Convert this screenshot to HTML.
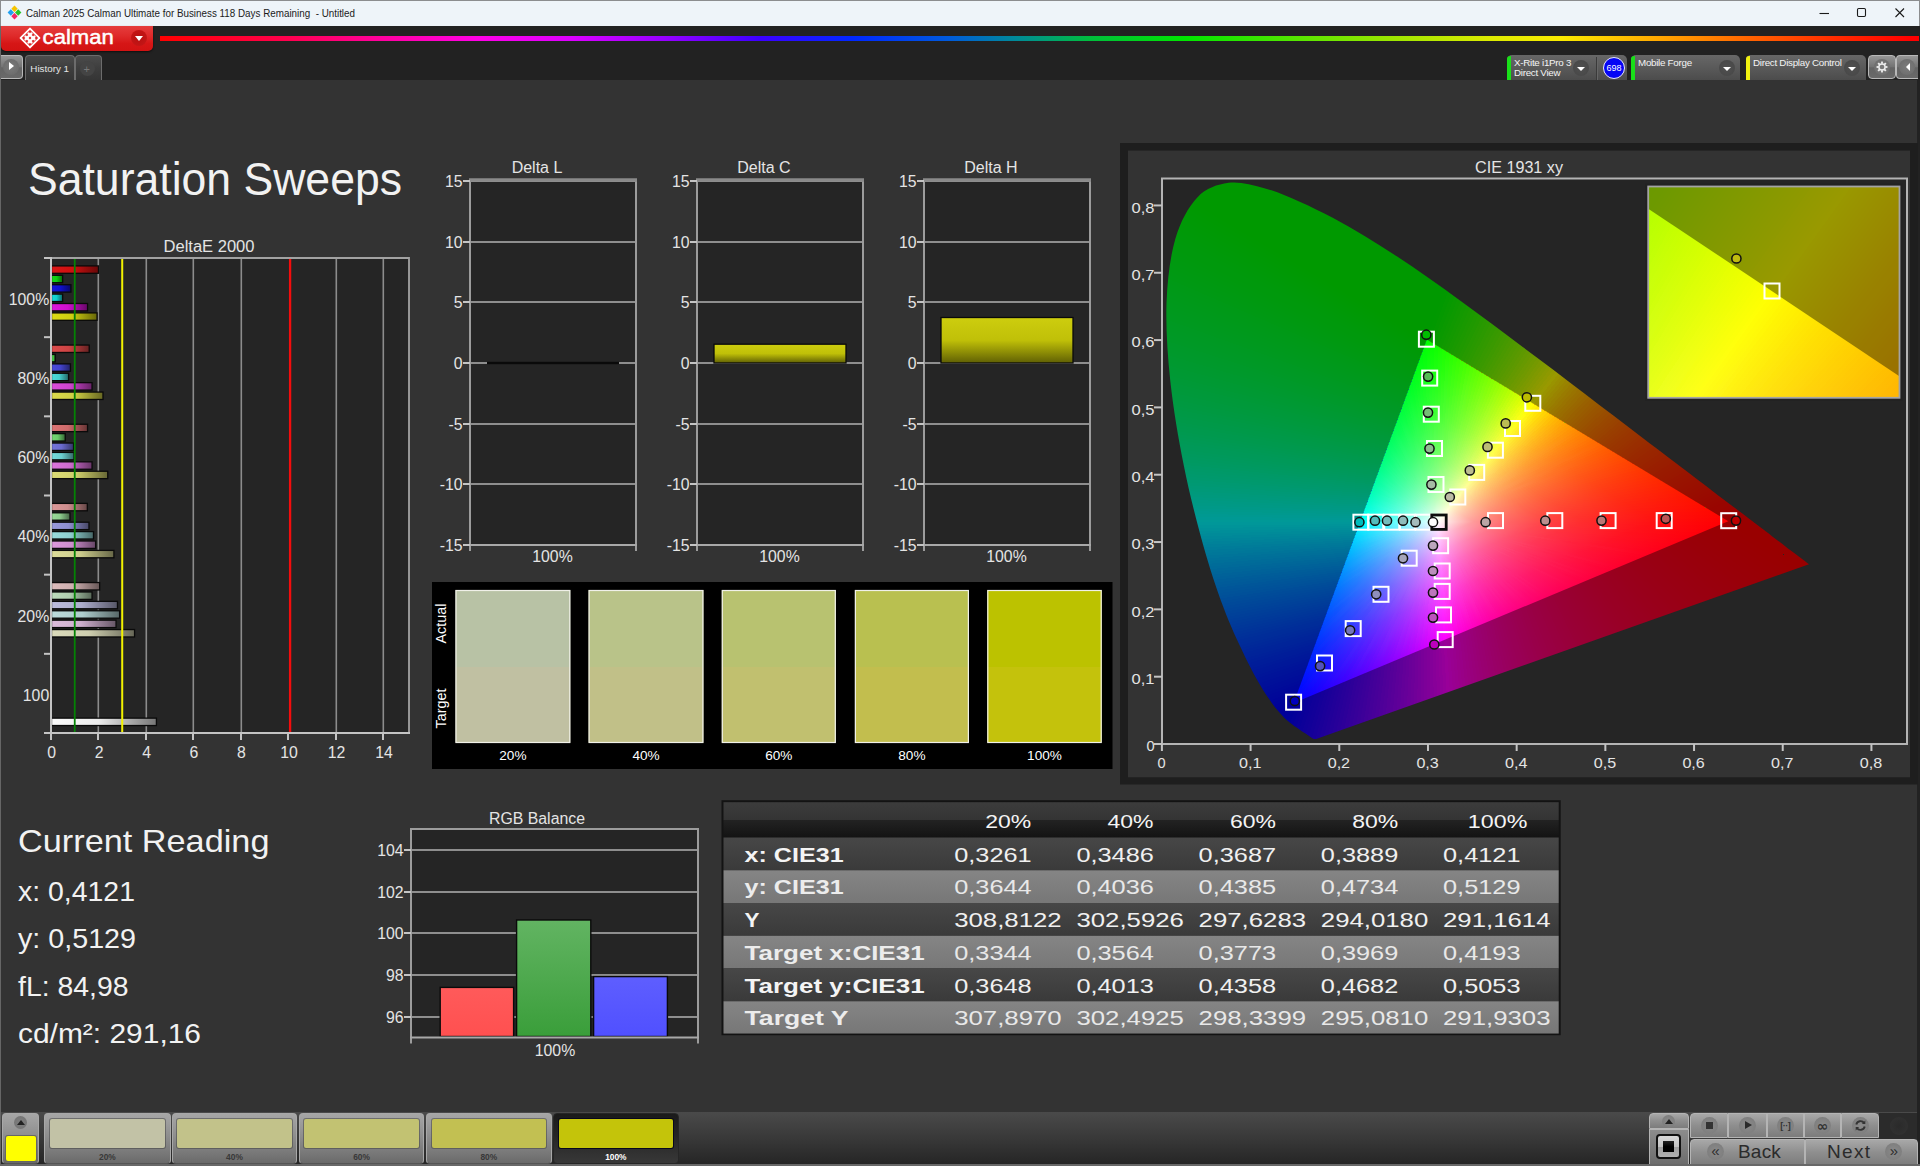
<!DOCTYPE html><html><head><meta charset="utf-8"><title>Calman - Saturation Sweeps</title><style>
*{box-sizing:border-box}
html,body{margin:0;padding:0}
body{width:1920px;height:1166px;overflow:hidden;position:relative;background:#333;font-family:"Liberation Sans",sans-serif;color:#eee}
.a{position:absolute}
#titlebar{left:0;top:0;width:1920px;height:26px;background:#eef4f9;border-top:1px solid #8b8d8f;border-left:1px solid #8b8d8f;border-right:1px solid #8b8d8f}
#titletxt{left:26px;top:6px;font-size:11.6px;line-height:14px;color:#1b1b1b;white-space:nowrap;letter-spacing:-0.05px}
#topbar{left:0;top:26px;width:1920px;height:54px;background:#222}
#logo{left:1px;top:26px;width:152px;height:25px;border-radius:0 0 5px 5px;background:linear-gradient(#e53d3d,#df2a2a 40%,#d61616 70%,#d21212);box-shadow:0 1px 2px rgba(0,0,0,.6)}
#rainbow{left:160px;top:36px;width:1759px;height:5px;background:linear-gradient(90deg,#ff0000 0%,#ff0050 7.4%,#ff00a0 12.7%,#ff00e6 18.1%,#dc00ff 23.4%,#9600ff 28.7%,#3c00ff 34.1%,#0028ff 39.4%,#005adc 44.8%,#008c96 48.8%,#00be3c 52.9%,#00e600 58.3%,#5ae600 64.9%,#a0e600 70.3%,#dceb00 75.6%,#faeb00 79.6%,#ffaa00 85%,#ff6400 90.3%,#ff2800 95.6%,#ff0000 99.6%)}
.tab{background:linear-gradient(#4c4c4c,#3e3e3e 50%,#353535);border:1px solid #6c6c6c;border-bottom:none;border-radius:4px 4px 0 0}
.btn{background:linear-gradient(#969696,#747474 48%,#646464 54%,#6a6a6a);border:1px solid #b8b8b8;border-radius:4px}
.src{background:linear-gradient(#676767,#5a5a5a 50%,#4c4c4c);border-radius:5px 5px 0 0;top:55px;height:25px}
.src span{position:absolute;left:7px;font-size:9.8px;color:#f4f4f4;white-space:nowrap;line-height:11px;letter-spacing:-0.28px}
.dd{position:absolute;width:16px;height:16px;border-radius:8px;background:radial-gradient(#505050,#464646)}
.dd:after{content:"";position:absolute;left:4px;top:6.5px;border:4px solid transparent;border-top:4.5px solid #fff;border-bottom:none}

.bb{background:linear-gradient(#a6a6a6,#8e8e8e 45%,#787878 80%,#6a6a6a);border:1px solid #a8a8a8;border-bottom-color:#555;border-radius:4px;top:1113px;height:51px}
.bb i{position:absolute;left:4.5px;top:4.5px;right:4.5px;height:29.5px;border-radius:2px;box-shadow:0 0 0 1px rgba(70,70,70,.55)}
.bb b{position:absolute;left:0;right:0;top:38px;text-align:center;font-size:8.4px;line-height:10px;font-weight:bold;color:#383838}
.sel{background:linear-gradient(#1a1a1a,#242424 40%,#383838);border-color:#262626}.sel i{box-shadow:0 0 0 1px #08081c}
.sel b{color:#fff;font-weight:bold}
.cb{background:linear-gradient(#a8a8a8,#8e8e8e 50%,#7c7c7c);border:1px solid #b4b4b4;border-radius:3px}
.ci{position:absolute;border-radius:50%;background:radial-gradient(#8a8a8a,#7a7a7a)}
</style></head><body><div class="a" id="topbar"></div><div class="a" id="titlebar"></div><svg class="a" style="left:7px;top:5px" width="15" height="15" viewBox="0 0 15 15"><path d="M7.5 .6L10.7 3.8L7.5 7L4.3 3.8Z" fill="#f5c400"/><path d="M3.8 4.3L7 7.5L3.8 10.7L.6 7.5Z" fill="#20a0f0"/><path d="M11.2 4.3L14.4 7.5L11.2 10.7L8 7.5Z" fill="#28c428"/><path d="M7.5 8L10.7 11.2L7.5 14.4L4.3 11.2Z" fill="#f02868"/></svg><svg class="a" style="left:1780px;top:1px" width="139" height="25" viewBox="0 0 139 25" fill="none" stroke="#1a1a1a" stroke-width="1.1"><path d="M39.5 12.5H49"/><rect x="77.5" y="7.5" width="8" height="8" rx="1.2"/><path d="M115.5 7.5L124 16M124 7.5L115.5 16"/></svg><div class="a" id="logo"></div><svg class="a" style="left:17.5px;top:27px" width="24" height="22" viewBox="0 0 24 22"><path d="M12 1.2L21.8 11L12 20.8L2.2 11Z" fill="#fff" stroke="#fff" stroke-width="1.2" stroke-linejoin="round"/><path d="M12 3.4L19.6 11L12 18.6L4.4 11Z" fill="none" stroke="#de2a2a" stroke-width="0.9"/><path d="M12.00 3.35L13.45 4.80L12.00 6.25L10.55 4.80ZM8.90 6.45L10.35 7.90L8.90 9.35L7.45 7.90ZM5.80 9.55L7.25 11.00L5.80 12.45L4.35 11.00ZM15.10 6.45L16.55 7.90L15.10 9.35L13.65 7.90ZM12.00 9.55L13.45 11.00L12.00 12.45L10.55 11.00ZM8.90 12.65L10.35 14.10L8.90 15.55L7.45 14.10ZM18.20 9.55L19.65 11.00L18.20 12.45L16.75 11.00ZM15.10 12.65L16.55 14.10L15.10 15.55L13.65 14.10ZM12.00 15.75L13.45 17.20L12.00 18.65L10.55 17.20Z" fill="#dc2424"/></svg><div class="a" style="left:131px;top:30px;width:16px;height:16px;border-radius:8px;background:radial-gradient(#b81010,#c81818)"></div><div class="a" style="left:135px;top:36px;border:4px solid transparent;border-top:5px solid #fff;border-bottom:none"></div><div class="a" id="rainbow"></div><div class="a btn" style="left:0px;top:55px;width:23px;height:24px;border-left:none;border-radius:0 4px 4px 0"></div><div class="a" style="left:3px;top:59px;width:16px;height:16px;border-radius:8px;background:radial-gradient(#7a7a7a,#686868)"></div><div class="a" style="left:8.8px;top:62.2px;border:4.4px solid transparent;border-left:5.2px solid #fff;border-right:none"></div><div class="a tab" style="left:25px;top:55px;width:50px;height:25px"></div><div class="a tab" style="left:75px;top:55px;width:27px;height:25px"></div><div class="a" style="left:80px;top:61px;width:15px;height:15px;border-radius:8px;background:#444"></div><div class="a" style="left:83.5px;top:61.5px;font-size:11px;line-height:14px;color:#777">+</div><div class="a src" style="left:1507px;width:120px"><div class="a" style="left:0;top:1px;width:4px;height:24px;background:#19e019;border-radius:3px 0 0 0"></div><span style="top:1.5px">X-Rite i1Pro 3</span><span style="top:12.4px">Direct View</span><div class="dd" style="left:65.5px;top:5px"></div></div><div class="a" style="left:1596px;top:57px;width:1px;height:23px;background:#3a3a3a"></div><div class="a" style="left:1597px;top:57px;width:1px;height:23px;background:#666"></div><div class="a" style="left:1603px;top:57px;width:22px;height:22px;border-radius:11px;background:#0505f5;border:1px solid #e8e8ff;font-size:9px;line-height:20px;text-align:center;color:#fff">698</div><div class="a src" style="left:1631px;width:109px"><div class="a" style="left:0;top:1px;width:4px;height:24px;background:#19e019;border-radius:3px 0 0 0"></div><span style="top:1.5px">Mobile Forge</span><div class="dd" style="left:87.9px;top:5px"></div></div><div class="a src" style="left:1746px;width:120px"><div class="a" style="left:0;top:1px;width:4px;height:24px;background:#f0f010;border-radius:3px 0 0 0"></div><span style="top:1.5px">Direct Display Control</span><div class="dd" style="left:98.2px;top:5px"></div></div><div class="a btn" style="left:1868px;top:55px;width:28px;height:24px"></div><div class="a btn" style="left:1896px;top:55px;width:22px;height:24px;border-right:none;border-radius:4px 0 0 4px"></div><div class="a" style="left:1874px;top:59px;width:16px;height:16px;border-radius:8px;background:radial-gradient(#7c7c7c,#6a6a6a)"></div><svg class="a" style="left:1875.3px;top:60.4px" width="14" height="14" viewBox="-7.7 -7.7 15.4 15.4"><circle r="3.4" fill="none" stroke="#eee" stroke-width="1.6"/><rect x="-1" y="-6" width="2" height="2.4" fill="#eee" transform="rotate(0)"/><rect x="-1" y="-6" width="2" height="2.4" fill="#eee" transform="rotate(45)"/><rect x="-1" y="-6" width="2" height="2.4" fill="#eee" transform="rotate(90)"/><rect x="-1" y="-6" width="2" height="2.4" fill="#eee" transform="rotate(135)"/><rect x="-1" y="-6" width="2" height="2.4" fill="#eee" transform="rotate(180)"/><rect x="-1" y="-6" width="2" height="2.4" fill="#eee" transform="rotate(225)"/><rect x="-1" y="-6" width="2" height="2.4" fill="#eee" transform="rotate(270)"/><rect x="-1" y="-6" width="2" height="2.4" fill="#eee" transform="rotate(315)"/></svg><div class="a" style="left:1899px;top:59px;width:16px;height:16px;border-radius:8px;background:radial-gradient(#7c7c7c,#6a6a6a)"></div><div class="a" style="left:1905.6px;top:62.6px;border:4.1px solid transparent;border-right:4.8px solid #fff;border-left:none"></div><div class="a" style="left:0;top:26px;width:1px;height:1140px;background:#666"></div><div class="a" style="left:1917px;top:80px;width:3px;height:1086px;background:#222"></div><div class="a" style="left:1px;top:1112px;width:1916px;height:54px;background:linear-gradient(#4a4a4a,#383838 50%,#242424)"></div><div class="a bb" style="left:2px;width:37px"></div><div class="a" style="left:14px;top:1116px;width:13px;height:13px;border-radius:7px;background:radial-gradient(#808080,#707070)"></div><div class="a" style="left:16.5px;top:1119.5px;border:4px solid transparent;border-bottom:5px solid #222;border-top:none"></div><div class="a" style="left:6px;top:1135.5px;width:29.5px;height:25px;background:#ffff00;border-radius:2px;box-shadow:0 0 0 1px #666"></div><div class="a bb" style="left:44.2px;width:126.4px"><i style="background:#c2c2a6"></i><b>20%</b></div><div class="a bb" style="left:171.7px;width:125.6px"><i style="background:#c2c28a"></i><b>40%</b></div><div class="a bb" style="left:298.8px;width:125.6px"><i style="background:#c2c272"></i><b>60%</b></div><div class="a bb" style="left:426.0px;width:125.6px"><i style="background:#c2c052"></i><b>80%</b></div><div class="a bb sel" style="left:553.0px;width:125.7px"><i style="background:#c4c40a"></i><b>100%</b></div><div class="a cb" style="left:1649px;top:1113px;width:40px;height:16px;border-radius:4px 4px 0 0"></div><div class="a cb" style="left:1649px;top:1129px;width:40px;height:37px;border-radius:0;background:linear-gradient(#8c8c8c,#6c6c6c)"></div><div class="a ci" style="left:1662px;top:1115px;width:13px;height:13px"></div><div class="a" style="left:1664.5px;top:1118.5px;border:4px solid transparent;border-bottom:5px solid #222;border-top:none"></div><div class="a" style="left:1656px;top:1134px;width:25px;height:25px;border:2px solid #111;border-radius:4px;background:linear-gradient(#d8d8d8,#c4c4c4 50%,#a0a0a0 52%,#b0b0b0)"></div><div class="a" style="left:1663px;top:1141px;width:11px;height:11px;background:linear-gradient(#222,#000 50%)"></div><div class="a cb" style="left:1690.0px;top:1113px;width:38.1px;height:25px;border-radius:4px 0 0 0"></div><div class="a ci" style="left:1700.5px;top:1117px;width:17px;height:17px"></div><div class="a cb" style="left:1728.1px;top:1113px;width:38.5px;height:25px;border-radius:0"></div><div class="a ci" style="left:1738.8px;top:1117px;width:17px;height:17px"></div><div class="a cb" style="left:1766.6px;top:1113px;width:37.4px;height:25px;border-radius:0"></div><div class="a ci" style="left:1776.8px;top:1117px;width:17px;height:17px"></div><div class="a cb" style="left:1804.0px;top:1113px;width:37.3px;height:25px;border-radius:0"></div><div class="a ci" style="left:1814.2px;top:1117px;width:17px;height:17px"></div><div class="a cb" style="left:1841.3px;top:1113px;width:37.7px;height:25px;border-radius:0 4px 0 0"></div><div class="a ci" style="left:1851.7px;top:1117px;width:17px;height:17px"></div><div class="a" style="left:1705.5px;top:1122px;width:7px;height:7px;background:#333"></div><div class="a" style="left:1744.8px;top:1121px;border:4.5px solid transparent;border-left:7px solid #2a2a2a;border-right:none"></div><div class="a" style="left:1778.3px;top:1119.5px;width:14px;text-align:center;font-size:9px;line-height:12px;font-weight:bold;color:#333;letter-spacing:-.5px">[&middot;&middot;]</div><div class="a" style="left:1814.7px;top:1117.5px;width:16px;text-align:center;font-size:14px;line-height:16px;font-weight:bold;color:#333;font-family:'DejaVu Sans',sans-serif">&#8734;</div><svg class="a" style="left:1853.7px;top:1119px" width="13" height="13" viewBox="-6.5 -6.5 13 13" fill="none" stroke="#333" stroke-width="1.9"><path d="M-4.2 -1A4.3 4.3 0 0 1 3.6 -2.4"/><path d="M4.2 1A4.3 4.3 0 0 1 -3.6 2.4"/><path d="M4.8 -5V-1.6H1.4Z" fill="#333" stroke="none"/><path d="M-4.8 5V1.6H-1.4Z" fill="#333" stroke="none"/></svg><div class="a" style="left:1879px;top:1113px;width:38px;height:26px;background:#2b2b2b"></div><div class="a" style="left:1890px;top:1117px;width:18px;height:18px;border-radius:9px;background:radial-gradient(#2a2a2a,#333)"></div><div class="a cb" style="left:1690px;top:1139px;width:114.5px;height:27px;border-radius:4px 0 0 0"></div><div class="a cb" style="left:1804.5px;top:1139px;width:113px;height:27px;border-radius:0 4px 0 0"></div><div class="a ci" style="left:1707px;top:1143px;width:17px;height:17px"></div><div class="a ci" style="left:1885px;top:1143px;width:17px;height:17px"></div><div class="a" style="left:1708px;top:1141px;width:15px;text-align:center;font-size:15px;line-height:19px;color:#2e2e2e">&laquo;</div><div class="a" style="left:1886.5px;top:1141px;width:15px;text-align:center;font-size:15px;line-height:19px;color:#2e2e2e">&raquo;</div><div class="a" style="left:1738px;top:1141px;font-size:19px;line-height:22px;color:#2b2b2b;letter-spacing:.2px">Back</div><div class="a" style="left:1827px;top:1141px;font-size:19px;line-height:22px;color:#2b2b2b;letter-spacing:1.3px">Next</div><div class="a" style="left:0;top:1164px;width:1920px;height:2px;background:#686868"></div><svg class="a" style="left:0;top:0" width="1920" height="1166" viewBox="0 0 1920 1166" font-family='&quot;Liberation Sans&quot;, sans-serif'><defs><linearGradient id="b1" x1="0" y1="0" x2="1" y2="0"><stop offset="0" stop-color="#dc1616"/><stop offset=".45" stop-color="#ce1010"/><stop offset="1" stop-color="#670808"/></linearGradient><linearGradient id="b2" x1="0" y1="0" x2="1" y2="0"><stop offset="0" stop-color="#16dc16"/><stop offset=".45" stop-color="#10ce10"/><stop offset="1" stop-color="#086708"/></linearGradient><linearGradient id="b3" x1="0" y1="0" x2="1" y2="0"><stop offset="0" stop-color="#1616dc"/><stop offset=".45" stop-color="#1010ce"/><stop offset="1" stop-color="#080867"/></linearGradient><linearGradient id="b4" x1="0" y1="0" x2="1" y2="0"><stop offset="0" stop-color="#16dcdc"/><stop offset=".45" stop-color="#10cece"/><stop offset="1" stop-color="#086767"/></linearGradient><linearGradient id="b5" x1="0" y1="0" x2="1" y2="0"><stop offset="0" stop-color="#dc16dc"/><stop offset=".45" stop-color="#ce10ce"/><stop offset="1" stop-color="#670867"/></linearGradient><linearGradient id="b6" x1="0" y1="0" x2="1" y2="0"><stop offset="0" stop-color="#dcdc16"/><stop offset=".45" stop-color="#cece10"/><stop offset="1" stop-color="#676708"/></linearGradient><linearGradient id="b7" x1="0" y1="0" x2="1" y2="0"><stop offset="0" stop-color="#dc4c4c"/><stop offset=".45" stop-color="#ce4444"/><stop offset="1" stop-color="#672222"/></linearGradient><linearGradient id="b8" x1="0" y1="0" x2="1" y2="0"><stop offset="0" stop-color="#4cdc4c"/><stop offset=".45" stop-color="#44ce44"/><stop offset="1" stop-color="#226722"/></linearGradient><linearGradient id="b9" x1="0" y1="0" x2="1" y2="0"><stop offset="0" stop-color="#4c4cdc"/><stop offset=".45" stop-color="#4444ce"/><stop offset="1" stop-color="#222267"/></linearGradient><linearGradient id="b10" x1="0" y1="0" x2="1" y2="0"><stop offset="0" stop-color="#4cdcdc"/><stop offset=".45" stop-color="#44cece"/><stop offset="1" stop-color="#226767"/></linearGradient><linearGradient id="b11" x1="0" y1="0" x2="1" y2="0"><stop offset="0" stop-color="#dc4cdc"/><stop offset=".45" stop-color="#ce44ce"/><stop offset="1" stop-color="#672267"/></linearGradient><linearGradient id="b12" x1="0" y1="0" x2="1" y2="0"><stop offset="0" stop-color="#dcdc4c"/><stop offset=".45" stop-color="#cece44"/><stop offset="1" stop-color="#676722"/></linearGradient><linearGradient id="b13" x1="0" y1="0" x2="1" y2="0"><stop offset="0" stop-color="#dc7575"/><stop offset=".45" stop-color="#ce6b6b"/><stop offset="1" stop-color="#673535"/></linearGradient><linearGradient id="b14" x1="0" y1="0" x2="1" y2="0"><stop offset="0" stop-color="#75dc75"/><stop offset=".45" stop-color="#6bce6b"/><stop offset="1" stop-color="#356735"/></linearGradient><linearGradient id="b15" x1="0" y1="0" x2="1" y2="0"><stop offset="0" stop-color="#7575dc"/><stop offset=".45" stop-color="#6b6bce"/><stop offset="1" stop-color="#353567"/></linearGradient><linearGradient id="b16" x1="0" y1="0" x2="1" y2="0"><stop offset="0" stop-color="#75dcdc"/><stop offset=".45" stop-color="#6bcece"/><stop offset="1" stop-color="#356767"/></linearGradient><linearGradient id="b17" x1="0" y1="0" x2="1" y2="0"><stop offset="0" stop-color="#dc75dc"/><stop offset=".45" stop-color="#ce6bce"/><stop offset="1" stop-color="#673567"/></linearGradient><linearGradient id="b18" x1="0" y1="0" x2="1" y2="0"><stop offset="0" stop-color="#dcdc75"/><stop offset=".45" stop-color="#cece6b"/><stop offset="1" stop-color="#676735"/></linearGradient><linearGradient id="b19" x1="0" y1="0" x2="1" y2="0"><stop offset="0" stop-color="#dc9999"/><stop offset=".45" stop-color="#ce8e8e"/><stop offset="1" stop-color="#674747"/></linearGradient><linearGradient id="b20" x1="0" y1="0" x2="1" y2="0"><stop offset="0" stop-color="#99dc99"/><stop offset=".45" stop-color="#8ece8e"/><stop offset="1" stop-color="#476747"/></linearGradient><linearGradient id="b21" x1="0" y1="0" x2="1" y2="0"><stop offset="0" stop-color="#9999dc"/><stop offset=".45" stop-color="#8e8ece"/><stop offset="1" stop-color="#474767"/></linearGradient><linearGradient id="b22" x1="0" y1="0" x2="1" y2="0"><stop offset="0" stop-color="#99dcdc"/><stop offset=".45" stop-color="#8ecece"/><stop offset="1" stop-color="#476767"/></linearGradient><linearGradient id="b23" x1="0" y1="0" x2="1" y2="0"><stop offset="0" stop-color="#dc99dc"/><stop offset=".45" stop-color="#ce8ece"/><stop offset="1" stop-color="#674767"/></linearGradient><linearGradient id="b24" x1="0" y1="0" x2="1" y2="0"><stop offset="0" stop-color="#dcdc99"/><stop offset=".45" stop-color="#cece8e"/><stop offset="1" stop-color="#676747"/></linearGradient><linearGradient id="b25" x1="0" y1="0" x2="1" y2="0"><stop offset="0" stop-color="#dcbcbc"/><stop offset=".45" stop-color="#ceafaf"/><stop offset="1" stop-color="#675757"/></linearGradient><linearGradient id="b26" x1="0" y1="0" x2="1" y2="0"><stop offset="0" stop-color="#bcdcbc"/><stop offset=".45" stop-color="#afceaf"/><stop offset="1" stop-color="#576757"/></linearGradient><linearGradient id="b27" x1="0" y1="0" x2="1" y2="0"><stop offset="0" stop-color="#bcbcdc"/><stop offset=".45" stop-color="#afafce"/><stop offset="1" stop-color="#575767"/></linearGradient><linearGradient id="b28" x1="0" y1="0" x2="1" y2="0"><stop offset="0" stop-color="#bcdcdc"/><stop offset=".45" stop-color="#afcece"/><stop offset="1" stop-color="#576767"/></linearGradient><linearGradient id="b29" x1="0" y1="0" x2="1" y2="0"><stop offset="0" stop-color="#dcbcdc"/><stop offset=".45" stop-color="#ceafce"/><stop offset="1" stop-color="#675767"/></linearGradient><linearGradient id="b30" x1="0" y1="0" x2="1" y2="0"><stop offset="0" stop-color="#dcdcbc"/><stop offset=".45" stop-color="#ceceaf"/><stop offset="1" stop-color="#676757"/></linearGradient><linearGradient id="b31" x1="0" y1="0" x2="1" y2="0"><stop offset="0" stop-color="#fbfbfb"/><stop offset=".45" stop-color="#ececec"/><stop offset="1" stop-color="#767676"/></linearGradient><linearGradient id="b32" x1="0" y1="0" x2="0" y2="1"><stop offset="0" stop-color="#cdcd0e"/><stop offset=".5" stop-color="#c0c008"/><stop offset="1" stop-color="#606004"/></linearGradient><linearGradient id="b33" x1="0" y1="0" x2="0" y2="1"><stop offset="0" stop-color="#cdcd0e"/><stop offset=".5" stop-color="#c0c008"/><stop offset="1" stop-color="#606004"/></linearGradient><linearGradient id="c0" gradientUnits="userSpaceOnUse" x1="1438.0" y1="521.9" x2="1360.0" y2="522.0"><stop offset="0" stop-color="#ffffff"/><stop offset=".25" stop-color="#b3ffff"/><stop offset=".75" stop-color="#35ffff"/><stop offset="1" stop-color="#00ffff"/></linearGradient><linearGradient id="c1" gradientUnits="userSpaceOnUse" x1="1438.0" y1="521.9" x2="1359.8" y2="522.5"><stop offset="0" stop-color="#ffffff"/><stop offset=".25" stop-color="#b3ffff"/><stop offset=".75" stop-color="#35feff"/><stop offset="1" stop-color="#00feff"/></linearGradient><linearGradient id="c2" gradientUnits="userSpaceOnUse" x1="1438.0" y1="521.9" x2="1359.4" y2="523.5"><stop offset="0" stop-color="#ffffff"/><stop offset=".375" stop-color="#90fdff"/><stop offset=".875" stop-color="#1afcff"/><stop offset="1" stop-color="#00fbff"/></linearGradient><linearGradient id="c3" gradientUnits="userSpaceOnUse" x1="1438.0" y1="521.9" x2="1359.0" y2="524.5"><stop offset="0" stop-color="#ffffff"/><stop offset=".25" stop-color="#b2fdff"/><stop offset=".625" stop-color="#51faff"/><stop offset="1" stop-color="#00f8ff"/></linearGradient><linearGradient id="c4" gradientUnits="userSpaceOnUse" x1="1438.0" y1="521.9" x2="1358.7" y2="525.6"><stop offset="0" stop-color="#ffffff"/><stop offset=".25" stop-color="#b2fcff"/><stop offset=".75" stop-color="#34f7ff"/><stop offset="1" stop-color="#00f5ff"/></linearGradient><linearGradient id="c5" gradientUnits="userSpaceOnUse" x1="1438.0" y1="521.9" x2="1358.3" y2="526.7"><stop offset="0" stop-color="#ffffff"/><stop offset=".375" stop-color="#8ff9ff"/><stop offset=".875" stop-color="#19f4ff"/><stop offset="1" stop-color="#00f2ff"/></linearGradient><linearGradient id="c6" gradientUnits="userSpaceOnUse" x1="1438.0" y1="521.9" x2="1357.9" y2="527.8"><stop offset="0" stop-color="#ffffff"/><stop offset=".375" stop-color="#8ff8ff"/><stop offset=".875" stop-color="#19f1ff"/><stop offset="1" stop-color="#00f0ff"/></linearGradient><linearGradient id="c7" gradientUnits="userSpaceOnUse" x1="1438.0" y1="521.9" x2="1357.5" y2="528.9"><stop offset="0" stop-color="#ffffff"/><stop offset=".25" stop-color="#b1f9ff"/><stop offset=".625" stop-color="#50f2ff"/><stop offset="1" stop-color="#00edff"/></linearGradient><linearGradient id="c8" gradientUnits="userSpaceOnUse" x1="1438.0" y1="521.9" x2="1357.0" y2="530.0"><stop offset="0" stop-color="#ffffff"/><stop offset=".25" stop-color="#b1f8ff"/><stop offset=".75" stop-color="#33eeff"/><stop offset="1" stop-color="#00eaff"/></linearGradient><linearGradient id="c9" gradientUnits="userSpaceOnUse" x1="1438.0" y1="521.9" x2="1356.6" y2="531.2"><stop offset="0" stop-color="#ffffff"/><stop offset=".25" stop-color="#b1f8ff"/><stop offset=".5" stop-color="#6df1ff"/><stop offset="1" stop-color="#00e7ff"/></linearGradient><linearGradient id="c10" gradientUnits="userSpaceOnUse" x1="1438.0" y1="521.9" x2="1356.2" y2="532.3"><stop offset="0" stop-color="#ffffff"/><stop offset=".25" stop-color="#b0f7ff"/><stop offset=".625" stop-color="#4fecff"/><stop offset="1" stop-color="#00e4ff"/></linearGradient><linearGradient id="c11" gradientUnits="userSpaceOnUse" x1="1438.0" y1="521.9" x2="1355.8" y2="533.5"><stop offset="0" stop-color="#ffffff"/><stop offset=".25" stop-color="#b0f6ff"/><stop offset=".625" stop-color="#4feaff"/><stop offset="1" stop-color="#00e1ff"/></linearGradient><linearGradient id="c12" gradientUnits="userSpaceOnUse" x1="1438.0" y1="521.9" x2="1355.3" y2="534.7"><stop offset="0" stop-color="#ffffff"/><stop offset=".25" stop-color="#b0f5ff"/><stop offset=".5" stop-color="#6cecff"/><stop offset=".875" stop-color="#18e1ff"/><stop offset="1" stop-color="#00deff"/></linearGradient><linearGradient id="c13" gradientUnits="userSpaceOnUse" x1="1438.0" y1="521.9" x2="1354.9" y2="535.9"><stop offset="0" stop-color="#ffffff"/><stop offset=".25" stop-color="#aff4ff"/><stop offset=".625" stop-color="#4ee6ff"/><stop offset="1" stop-color="#00dbff"/></linearGradient><linearGradient id="c14" gradientUnits="userSpaceOnUse" x1="1438.0" y1="521.9" x2="1354.4" y2="537.2"><stop offset="0" stop-color="#ffffff"/><stop offset=".25" stop-color="#aff3ff"/><stop offset=".5" stop-color="#6be8ff"/><stop offset=".875" stop-color="#18dcff"/><stop offset="1" stop-color="#00d8ff"/></linearGradient><linearGradient id="c15" gradientUnits="userSpaceOnUse" x1="1438.0" y1="521.9" x2="1354.0" y2="538.4"><stop offset="0" stop-color="#ffffff"/><stop offset=".25" stop-color="#aff2ff"/><stop offset=".5" stop-color="#6be7ff"/><stop offset=".875" stop-color="#18d9ff"/><stop offset="1" stop-color="#00d5ff"/></linearGradient><linearGradient id="c16" gradientUnits="userSpaceOnUse" x1="1438.0" y1="521.9" x2="1353.5" y2="539.7"><stop offset="0" stop-color="#ffffff"/><stop offset=".25" stop-color="#aef1ff"/><stop offset=".625" stop-color="#4de0ff"/><stop offset="1" stop-color="#00d2ff"/></linearGradient><linearGradient id="c17" gradientUnits="userSpaceOnUse" x1="1438.0" y1="521.9" x2="1353.0" y2="541.0"><stop offset="0" stop-color="#ffffff"/><stop offset=".25" stop-color="#aef0ff"/><stop offset=".5" stop-color="#6ae3ff"/><stop offset="1" stop-color="#00cfff"/></linearGradient><linearGradient id="c18" gradientUnits="userSpaceOnUse" x1="1438.0" y1="521.9" x2="1352.5" y2="542.4"><stop offset="0" stop-color="#ffffff"/><stop offset=".25" stop-color="#adefff"/><stop offset=".625" stop-color="#4cdbff"/><stop offset="1" stop-color="#00ccff"/></linearGradient><linearGradient id="c19" gradientUnits="userSpaceOnUse" x1="1438.0" y1="521.9" x2="1352.0" y2="543.8"><stop offset="0" stop-color="#ffffff"/><stop offset=".25" stop-color="#adeeff"/><stop offset=".5" stop-color="#69dfff"/><stop offset=".875" stop-color="#17ceff"/><stop offset="1" stop-color="#00c9ff"/></linearGradient><linearGradient id="c20" gradientUnits="userSpaceOnUse" x1="1438.0" y1="521.9" x2="1351.5" y2="545.2"><stop offset="0" stop-color="#ffffff"/><stop offset=".25" stop-color="#adecff"/><stop offset=".5" stop-color="#69ddff"/><stop offset=".875" stop-color="#17cbff"/><stop offset="1" stop-color="#00c6ff"/></linearGradient><linearGradient id="c21" gradientUnits="userSpaceOnUse" x1="1438.0" y1="521.9" x2="1351.0" y2="546.6"><stop offset="0" stop-color="#ffffff"/><stop offset=".25" stop-color="#acebff"/><stop offset=".625" stop-color="#4bd4ff"/><stop offset="1" stop-color="#00c2ff"/></linearGradient><linearGradient id="c22" gradientUnits="userSpaceOnUse" x1="1438.0" y1="521.9" x2="1350.4" y2="548.1"><stop offset="0" stop-color="#ffffff"/><stop offset=".25" stop-color="#aceaff"/><stop offset=".5" stop-color="#68d9ff"/><stop offset=".875" stop-color="#17c5ff"/><stop offset="1" stop-color="#00bfff"/></linearGradient><linearGradient id="c23" gradientUnits="userSpaceOnUse" x1="1438.0" y1="521.9" x2="1349.9" y2="549.6"><stop offset="0" stop-color="#ffffff"/><stop offset=".25" stop-color="#ace9ff"/><stop offset=".5" stop-color="#68d7ff"/><stop offset=".75" stop-color="#2fc8ff"/><stop offset="1" stop-color="#00bcff"/></linearGradient><linearGradient id="c24" gradientUnits="userSpaceOnUse" x1="1438.0" y1="521.9" x2="1349.3" y2="551.2"><stop offset="0" stop-color="#ffffff"/><stop offset=".25" stop-color="#abe8ff"/><stop offset=".5" stop-color="#67d5ff"/><stop offset=".75" stop-color="#2fc6ff"/><stop offset="1" stop-color="#00b9ff"/></linearGradient><linearGradient id="c25" gradientUnits="userSpaceOnUse" x1="1438.0" y1="521.9" x2="1348.7" y2="552.8"><stop offset="0" stop-color="#ffffff"/><stop offset=".125" stop-color="#d2f2ff"/><stop offset=".375" stop-color="#87dcff"/><stop offset=".75" stop-color="#2fc3ff"/><stop offset="1" stop-color="#00b5ff"/></linearGradient><linearGradient id="c26" gradientUnits="userSpaceOnUse" x1="1438.0" y1="521.9" x2="1348.1" y2="554.5"><stop offset="0" stop-color="#ffffff"/><stop offset=".25" stop-color="#aae5ff"/><stop offset=".5" stop-color="#66d1ff"/><stop offset=".875" stop-color="#16b9ff"/><stop offset="1" stop-color="#00b2ff"/></linearGradient><linearGradient id="c27" gradientUnits="userSpaceOnUse" x1="1438.0" y1="521.9" x2="1347.5" y2="556.2"><stop offset="0" stop-color="#ffffff"/><stop offset=".25" stop-color="#aae4ff"/><stop offset=".5" stop-color="#66cfff"/><stop offset=".75" stop-color="#2ebdff"/><stop offset="1" stop-color="#00aeff"/></linearGradient><linearGradient id="c28" gradientUnits="userSpaceOnUse" x1="1438.0" y1="521.9" x2="1346.8" y2="558.0"><stop offset="0" stop-color="#ffffff"/><stop offset=".25" stop-color="#a9e3ff"/><stop offset=".5" stop-color="#65ccff"/><stop offset=".875" stop-color="#16b2ff"/><stop offset="1" stop-color="#00abff"/></linearGradient><linearGradient id="c29" gradientUnits="userSpaceOnUse" x1="1438.0" y1="521.9" x2="1346.1" y2="559.8"><stop offset="0" stop-color="#ffffff"/><stop offset=".125" stop-color="#d1efff"/><stop offset=".375" stop-color="#85d5ff"/><stop offset=".625" stop-color="#48c0ff"/><stop offset="1" stop-color="#00a7ff"/></linearGradient><linearGradient id="c30" gradientUnits="userSpaceOnUse" x1="1438.0" y1="521.9" x2="1345.5" y2="561.7"><stop offset="0" stop-color="#ffffff"/><stop offset=".25" stop-color="#a8e0ff"/><stop offset=".5" stop-color="#64c8ff"/><stop offset=".75" stop-color="#2db4ff"/><stop offset="1" stop-color="#00a4ff"/></linearGradient><linearGradient id="c31" gradientUnits="userSpaceOnUse" x1="1438.0" y1="521.9" x2="1344.7" y2="563.6"><stop offset="0" stop-color="#ffffff"/><stop offset=".25" stop-color="#a8dfff"/><stop offset=".5" stop-color="#64c5ff"/><stop offset=".875" stop-color="#15a8ff"/><stop offset="1" stop-color="#00a0ff"/></linearGradient><linearGradient id="c32" gradientUnits="userSpaceOnUse" x1="1438.0" y1="521.9" x2="1344.0" y2="565.7"><stop offset="0" stop-color="#ffffff"/><stop offset=".125" stop-color="#d0edff"/><stop offset=".375" stop-color="#83cfff"/><stop offset=".625" stop-color="#46b8ff"/><stop offset="1" stop-color="#009cff"/></linearGradient><linearGradient id="c33" gradientUnits="userSpaceOnUse" x1="1438.0" y1="521.9" x2="1343.2" y2="567.8"><stop offset="0" stop-color="#ffffff"/><stop offset=".125" stop-color="#d0ecff"/><stop offset=".375" stop-color="#83cdff"/><stop offset=".625" stop-color="#46b5ff"/><stop offset="1" stop-color="#0099ff"/></linearGradient><linearGradient id="c34" gradientUnits="userSpaceOnUse" x1="1438.0" y1="521.9" x2="1342.4" y2="569.9"><stop offset="0" stop-color="#ffffff"/><stop offset=".125" stop-color="#cfebff"/><stop offset=".375" stop-color="#82cbff"/><stop offset=".625" stop-color="#46b2ff"/><stop offset="1" stop-color="#0095ff"/></linearGradient><linearGradient id="c35" gradientUnits="userSpaceOnUse" x1="1438.0" y1="521.9" x2="1341.6" y2="572.2"><stop offset="0" stop-color="#ffffff"/><stop offset=".125" stop-color="#cfeaff"/><stop offset=".375" stop-color="#81c9ff"/><stop offset=".625" stop-color="#45afff"/><stop offset="1" stop-color="#0091ff"/></linearGradient><linearGradient id="c36" gradientUnits="userSpaceOnUse" x1="1438.0" y1="521.9" x2="1340.7" y2="574.6"><stop offset="0" stop-color="#ffffff"/><stop offset=".125" stop-color="#cfe9ff"/><stop offset=".25" stop-color="#a5d7ff"/><stop offset=".5" stop-color="#61b8ff"/><stop offset=".75" stop-color="#2ba0ff"/><stop offset="1" stop-color="#008dff"/></linearGradient><linearGradient id="c37" gradientUnits="userSpaceOnUse" x1="1438.0" y1="521.9" x2="1339.8" y2="577.1"><stop offset="0" stop-color="#ffffff"/><stop offset=".125" stop-color="#cee8ff"/><stop offset=".25" stop-color="#a4d5ff"/><stop offset=".5" stop-color="#60b5ff"/><stop offset=".875" stop-color="#1492ff"/><stop offset="1" stop-color="#0088ff"/></linearGradient><linearGradient id="c38" gradientUnits="userSpaceOnUse" x1="1438.0" y1="521.9" x2="1338.9" y2="579.7"><stop offset="0" stop-color="#ffffff"/><stop offset=".125" stop-color="#cee7ff"/><stop offset=".375" stop-color="#7fc2ff"/><stop offset=".625" stop-color="#43a5ff"/><stop offset="1" stop-color="#0084ff"/></linearGradient><linearGradient id="c39" gradientUnits="userSpaceOnUse" x1="1438.0" y1="521.9" x2="1337.9" y2="582.4"><stop offset="0" stop-color="#ffffff"/><stop offset=".125" stop-color="#cde6ff"/><stop offset=".25" stop-color="#a3d1ff"/><stop offset=".5" stop-color="#5fafff"/><stop offset=".75" stop-color="#2a95ff"/><stop offset="1" stop-color="#0080ff"/></linearGradient><linearGradient id="c40" gradientUnits="userSpaceOnUse" x1="1438.0" y1="521.9" x2="1336.8" y2="585.2"><stop offset="0" stop-color="#ffffff"/><stop offset=".125" stop-color="#cde5ff"/><stop offset=".25" stop-color="#a2cfff"/><stop offset=".5" stop-color="#5eacff"/><stop offset=".75" stop-color="#2a91ff"/><stop offset="1" stop-color="#007bff"/></linearGradient><linearGradient id="c41" gradientUnits="userSpaceOnUse" x1="1438.0" y1="521.9" x2="1335.7" y2="588.2"><stop offset="0" stop-color="#ffffff"/><stop offset=".125" stop-color="#cce4ff"/><stop offset=".375" stop-color="#7dbaff"/><stop offset=".625" stop-color="#429aff"/><stop offset="1" stop-color="#0077ff"/></linearGradient><linearGradient id="c42" gradientUnits="userSpaceOnUse" x1="1438.0" y1="521.9" x2="1334.6" y2="591.4"><stop offset="0" stop-color="#ffffff"/><stop offset=".125" stop-color="#cce3ff"/><stop offset=".25" stop-color="#a1cbff"/><stop offset=".375" stop-color="#7cb7ff"/><stop offset=".625" stop-color="#4196ff"/><stop offset=".875" stop-color="#137dff"/><stop offset="1" stop-color="#0072ff"/></linearGradient><linearGradient id="c43" gradientUnits="userSpaceOnUse" x1="1438.0" y1="521.9" x2="1333.4" y2="594.7"><stop offset="0" stop-color="#ffffff"/><stop offset=".125" stop-color="#cbe2ff"/><stop offset=".25" stop-color="#a0c9ff"/><stop offset=".5" stop-color="#5ca2ff"/><stop offset=".75" stop-color="#2884ff"/><stop offset="1" stop-color="#006dff"/></linearGradient><linearGradient id="c44" gradientUnits="userSpaceOnUse" x1="1438.0" y1="521.9" x2="1332.1" y2="598.2"><stop offset="0" stop-color="#ffffff"/><stop offset=".125" stop-color="#cbe0ff"/><stop offset=".25" stop-color="#9fc7ff"/><stop offset=".5" stop-color="#5b9eff"/><stop offset=".75" stop-color="#2880ff"/><stop offset="1" stop-color="#0068ff"/></linearGradient><linearGradient id="c45" gradientUnits="userSpaceOnUse" x1="1438.0" y1="521.9" x2="1330.7" y2="602.0"><stop offset="0" stop-color="#ffffff"/><stop offset=".125" stop-color="#cadfff"/><stop offset=".25" stop-color="#9fc4ff"/><stop offset=".5" stop-color="#5a9aff"/><stop offset=".75" stop-color="#277bff"/><stop offset="1" stop-color="#0063ff"/></linearGradient><linearGradient id="c46" gradientUnits="userSpaceOnUse" x1="1438.0" y1="521.9" x2="1329.3" y2="605.9"><stop offset="0" stop-color="#ffffff"/><stop offset=".125" stop-color="#caddff"/><stop offset=".25" stop-color="#9ec1ff"/><stop offset=".5" stop-color="#5996ff"/><stop offset=".75" stop-color="#2776ff"/><stop offset="1" stop-color="#005eff"/></linearGradient><linearGradient id="c47" gradientUnits="userSpaceOnUse" x1="1438.0" y1="521.9" x2="1327.7" y2="610.2"><stop offset="0" stop-color="#ffffff"/><stop offset=".125" stop-color="#c9dcff"/><stop offset=".25" stop-color="#9dbfff"/><stop offset=".375" stop-color="#78a7ff"/><stop offset=".625" stop-color="#3e81ff"/><stop offset=".875" stop-color="#1264ff"/><stop offset="1" stop-color="#0058ff"/></linearGradient><linearGradient id="c48" gradientUnits="userSpaceOnUse" x1="1438.0" y1="521.9" x2="1326.1" y2="614.7"><stop offset="0" stop-color="#ffffff"/><stop offset=".125" stop-color="#c8daff"/><stop offset=".25" stop-color="#9cbcff"/><stop offset=".375" stop-color="#77a3ff"/><stop offset=".625" stop-color="#3d7cff"/><stop offset="1" stop-color="#0053ff"/></linearGradient><linearGradient id="c49" gradientUnits="userSpaceOnUse" x1="1438.0" y1="521.9" x2="1324.3" y2="619.5"><stop offset="0" stop-color="#ffffff"/><stop offset=".125" stop-color="#c8d8ff"/><stop offset=".25" stop-color="#9bb9ff"/><stop offset=".375" stop-color="#769fff"/><stop offset=".625" stop-color="#3c77ff"/><stop offset=".875" stop-color="#1159ff"/><stop offset="1" stop-color="#004dff"/></linearGradient><linearGradient id="c50" gradientUnits="userSpaceOnUse" x1="1438.0" y1="521.9" x2="1322.4" y2="624.7"><stop offset="0" stop-color="#ffffff"/><stop offset=".125" stop-color="#c7d6ff"/><stop offset=".25" stop-color="#9ab6ff"/><stop offset=".375" stop-color="#759bff"/><stop offset=".625" stop-color="#3b72ff"/><stop offset=".875" stop-color="#1153ff"/><stop offset="1" stop-color="#0047ff"/></linearGradient><linearGradient id="c51" gradientUnits="userSpaceOnUse" x1="1438.0" y1="521.9" x2="1320.4" y2="630.3"><stop offset="0" stop-color="#ffffff"/><stop offset=".125" stop-color="#c6d4ff"/><stop offset=".25" stop-color="#98b2ff"/><stop offset=".375" stop-color="#7397ff"/><stop offset=".625" stop-color="#3a6cff"/><stop offset="1" stop-color="#0040ff"/></linearGradient><linearGradient id="c52" gradientUnits="userSpaceOnUse" x1="1438.0" y1="521.9" x2="1318.1" y2="636.3"><stop offset="0" stop-color="#ffffff"/><stop offset=".125" stop-color="#c5d2ff"/><stop offset=".25" stop-color="#97afff"/><stop offset=".375" stop-color="#7292ff"/><stop offset=".625" stop-color="#3966ff"/><stop offset="1" stop-color="#003aff"/></linearGradient><linearGradient id="c53" gradientUnits="userSpaceOnUse" x1="1438.0" y1="521.9" x2="1315.7" y2="642.9"><stop offset="0" stop-color="#ffffff"/><stop offset=".125" stop-color="#c4d0ff"/><stop offset=".25" stop-color="#96abff"/><stop offset=".375" stop-color="#718dff"/><stop offset=".5" stop-color="#5275ff"/><stop offset=".75" stop-color="#234fff"/><stop offset="1" stop-color="#0033ff"/></linearGradient><linearGradient id="c54" gradientUnits="userSpaceOnUse" x1="1438.0" y1="521.9" x2="1313.1" y2="650.1"><stop offset="0" stop-color="#ffffff"/><stop offset=".125" stop-color="#c3cdff"/><stop offset=".25" stop-color="#94a7ff"/><stop offset=".375" stop-color="#6f88ff"/><stop offset=".625" stop-color="#385aff"/><stop offset=".875" stop-color="#1039ff"/><stop offset="1" stop-color="#002cff"/></linearGradient><linearGradient id="c55" gradientUnits="userSpaceOnUse" x1="1438.0" y1="521.9" x2="1310.2" y2="657.9"><stop offset="0" stop-color="#ffffff"/><stop offset=".125" stop-color="#c2cbff"/><stop offset=".25" stop-color="#93a2ff"/><stop offset=".375" stop-color="#6e82ff"/><stop offset=".5" stop-color="#4f69ff"/><stop offset=".75" stop-color="#2141ff"/><stop offset="1" stop-color="#0025ff"/></linearGradient><linearGradient id="c56" gradientUnits="userSpaceOnUse" x1="1438.0" y1="521.9" x2="1307.1" y2="666.5"><stop offset="0" stop-color="#ffffff"/><stop offset=".125" stop-color="#c0c8ff"/><stop offset=".25" stop-color="#919dff"/><stop offset=".375" stop-color="#6c7cff"/><stop offset=".625" stop-color="#354cff"/><stop offset=".875" stop-color="#0f2aff"/><stop offset="1" stop-color="#001dff"/></linearGradient><linearGradient id="c57" gradientUnits="userSpaceOnUse" x1="1438.0" y1="521.9" x2="1303.6" y2="676.1"><stop offset="0" stop-color="#ffffff"/><stop offset=".125" stop-color="#bfc4ff"/><stop offset=".25" stop-color="#8f98ff"/><stop offset=".375" stop-color="#6a76ff"/><stop offset=".5" stop-color="#4c5bff"/><stop offset=".75" stop-color="#2032ff"/><stop offset="1" stop-color="#0015ff"/></linearGradient><linearGradient id="c58" gradientUnits="userSpaceOnUse" x1="1438.0" y1="521.9" x2="1299.7" y2="686.8"><stop offset="0" stop-color="#ffffff"/><stop offset=".125" stop-color="#bec1ff"/><stop offset=".25" stop-color="#8d93ff"/><stop offset=".375" stop-color="#686fff"/><stop offset=".625" stop-color="#333cff"/><stop offset=".875" stop-color="#0e1aff"/><stop offset="1" stop-color="#000cff"/></linearGradient><linearGradient id="c59" gradientUnits="userSpaceOnUse" x1="1438.0" y1="521.9" x2="1295.7" y2="697.6"><stop offset="0" stop-color="#ffffff"/><stop offset=".125" stop-color="#bcbdff"/><stop offset=".25" stop-color="#8b8dff"/><stop offset=".375" stop-color="#6669ff"/><stop offset=".5" stop-color="#494cff"/><stop offset=".75" stop-color="#1e22ff"/><stop offset="1" stop-color="#0004ff"/></linearGradient><linearGradient id="c60" gradientUnits="userSpaceOnUse" x1="1438.0" y1="521.9" x2="1294.4" y2="702.7"><stop offset="0" stop-color="#ffffff"/><stop offset=".125" stop-color="#bcbbff"/><stop offset=".25" stop-color="#8b8bff"/><stop offset=".375" stop-color="#6666ff"/><stop offset=".5" stop-color="#4948ff"/><stop offset=".75" stop-color="#1e1eff"/><stop offset="1" stop-color="#0100ff"/></linearGradient><linearGradient id="c61" gradientUnits="userSpaceOnUse" x1="1438.0" y1="521.9" x2="1299.3" y2="700.7"><stop offset="0" stop-color="#ffffff"/><stop offset=".125" stop-color="#bebcff"/><stop offset=".25" stop-color="#8e8bff"/><stop offset=".375" stop-color="#6a66ff"/><stop offset=".5" stop-color="#4d49ff"/><stop offset=".75" stop-color="#241eff"/><stop offset="1" stop-color="#0600ff"/></linearGradient><linearGradient id="c62" gradientUnits="userSpaceOnUse" x1="1438.0" y1="521.9" x2="1307.3" y2="697.3"><stop offset="0" stop-color="#ffffff"/><stop offset=".125" stop-color="#c1bdff"/><stop offset=".25" stop-color="#938cff"/><stop offset=".375" stop-color="#7067ff"/><stop offset=".625" stop-color="#3f32ff"/><stop offset=".875" stop-color="#1d0eff"/><stop offset="1" stop-color="#0f00ff"/></linearGradient><linearGradient id="c63" gradientUnits="userSpaceOnUse" x1="1438.0" y1="521.9" x2="1314.8" y2="694.2"><stop offset="0" stop-color="#ffffff"/><stop offset=".125" stop-color="#c4beff"/><stop offset=".25" stop-color="#988eff"/><stop offset=".375" stop-color="#7768ff"/><stop offset=".625" stop-color="#4633ff"/><stop offset=".875" stop-color="#250eff"/><stop offset="1" stop-color="#1800ff"/></linearGradient><linearGradient id="c64" gradientUnits="userSpaceOnUse" x1="1438.0" y1="521.9" x2="1321.9" y2="691.2"><stop offset="0" stop-color="#ffffff"/><stop offset=".125" stop-color="#c7bfff"/><stop offset=".25" stop-color="#9d8fff"/><stop offset=".375" stop-color="#7d6aff"/><stop offset=".5" stop-color="#634cff"/><stop offset=".75" stop-color="#3d20ff"/><stop offset="1" stop-color="#2100ff"/></linearGradient><linearGradient id="c65" gradientUnits="userSpaceOnUse" x1="1438.0" y1="521.9" x2="1328.7" y2="688.4"><stop offset="0" stop-color="#ffffff"/><stop offset=".125" stop-color="#cabfff"/><stop offset=".25" stop-color="#a290ff"/><stop offset=".375" stop-color="#836bff"/><stop offset=".625" stop-color="#5534ff"/><stop offset="1" stop-color="#2a00ff"/></linearGradient><linearGradient id="c66" gradientUnits="userSpaceOnUse" x1="1438.0" y1="521.9" x2="1335.1" y2="685.7"><stop offset="0" stop-color="#ffffff"/><stop offset=".125" stop-color="#cdc0ff"/><stop offset=".25" stop-color="#a691ff"/><stop offset=".375" stop-color="#896cff"/><stop offset=".5" stop-color="#704eff"/><stop offset=".75" stop-color="#4c21ff"/><stop offset="1" stop-color="#3200ff"/></linearGradient><linearGradient id="c67" gradientUnits="userSpaceOnUse" x1="1438.0" y1="521.9" x2="1341.2" y2="683.1"><stop offset="0" stop-color="#ffffff"/><stop offset=".125" stop-color="#cfc1ff"/><stop offset=".25" stop-color="#ab92ff"/><stop offset=".375" stop-color="#8e6dff"/><stop offset=".625" stop-color="#6436ff"/><stop offset=".875" stop-color="#460fff"/><stop offset="1" stop-color="#3a00ff"/></linearGradient><linearGradient id="c68" gradientUnits="userSpaceOnUse" x1="1438.0" y1="521.9" x2="1347.1" y2="680.7"><stop offset="0" stop-color="#ffffff"/><stop offset=".125" stop-color="#d2c2ff"/><stop offset=".25" stop-color="#af93ff"/><stop offset=".375" stop-color="#936eff"/><stop offset=".5" stop-color="#7d4fff"/><stop offset=".75" stop-color="#5b21ff"/><stop offset="1" stop-color="#4300ff"/></linearGradient><linearGradient id="c69" gradientUnits="userSpaceOnUse" x1="1438.0" y1="521.9" x2="1352.7" y2="678.4"><stop offset="0" stop-color="#ffffff"/><stop offset=".125" stop-color="#d4c2ff"/><stop offset=".25" stop-color="#b394ff"/><stop offset=".375" stop-color="#996eff"/><stop offset=".625" stop-color="#7237ff"/><stop offset="1" stop-color="#4b00ff"/></linearGradient><linearGradient id="c70" gradientUnits="userSpaceOnUse" x1="1438.0" y1="521.9" x2="1358.0" y2="676.1"><stop offset="0" stop-color="#ffffff"/><stop offset=".125" stop-color="#d6c3ff"/><stop offset=".25" stop-color="#b795ff"/><stop offset=".375" stop-color="#9e6fff"/><stop offset=".625" stop-color="#7838ff"/><stop offset=".875" stop-color="#5d10ff"/><stop offset="1" stop-color="#5300ff"/></linearGradient><linearGradient id="c71" gradientUnits="userSpaceOnUse" x1="1438.0" y1="521.9" x2="1363.1" y2="674.0"><stop offset="0" stop-color="#ffffff"/><stop offset=".125" stop-color="#d9c4ff"/><stop offset=".25" stop-color="#bb95ff"/><stop offset=".375" stop-color="#a370ff"/><stop offset=".625" stop-color="#7f38ff"/><stop offset=".875" stop-color="#6510ff"/><stop offset="1" stop-color="#5a00ff"/></linearGradient><linearGradient id="c72" gradientUnits="userSpaceOnUse" x1="1438.0" y1="521.9" x2="1368.1" y2="671.9"><stop offset="0" stop-color="#ffffff"/><stop offset=".125" stop-color="#dbc4ff"/><stop offset=".25" stop-color="#bf96ff"/><stop offset=".375" stop-color="#a871ff"/><stop offset=".5" stop-color="#9552ff"/><stop offset=".75" stop-color="#7823ff"/><stop offset="1" stop-color="#6200ff"/></linearGradient><linearGradient id="c73" gradientUnits="userSpaceOnUse" x1="1438.0" y1="521.9" x2="1372.8" y2="669.9"><stop offset="0" stop-color="#ffffff"/><stop offset=".125" stop-color="#ddc5ff"/><stop offset=".25" stop-color="#c297ff"/><stop offset=".375" stop-color="#ac72ff"/><stop offset=".625" stop-color="#8b39ff"/><stop offset="1" stop-color="#6a00ff"/></linearGradient><linearGradient id="c74" gradientUnits="userSpaceOnUse" x1="1438.0" y1="521.9" x2="1377.3" y2="668.0"><stop offset="0" stop-color="#ffffff"/><stop offset=".125" stop-color="#dfc5ff"/><stop offset=".25" stop-color="#c698ff"/><stop offset=".375" stop-color="#b173ff"/><stop offset=".625" stop-color="#923aff"/><stop offset="1" stop-color="#7100ff"/></linearGradient><linearGradient id="c75" gradientUnits="userSpaceOnUse" x1="1438.0" y1="521.9" x2="1381.7" y2="666.2"><stop offset="0" stop-color="#ffffff"/><stop offset=".125" stop-color="#e1c6ff"/><stop offset=".25" stop-color="#c999ff"/><stop offset=".375" stop-color="#b674ff"/><stop offset=".625" stop-color="#983bff"/><stop offset=".875" stop-color="#8211ff"/><stop offset="1" stop-color="#7900ff"/></linearGradient><linearGradient id="c76" gradientUnits="userSpaceOnUse" x1="1438.0" y1="521.9" x2="1386.0" y2="664.4"><stop offset="0" stop-color="#ffffff"/><stop offset=".125" stop-color="#e3c7ff"/><stop offset=".25" stop-color="#cc99ff"/><stop offset=".375" stop-color="#ba74ff"/><stop offset=".625" stop-color="#9e3bff"/><stop offset=".875" stop-color="#8911ff"/><stop offset="1" stop-color="#8000ff"/></linearGradient><linearGradient id="c77" gradientUnits="userSpaceOnUse" x1="1438.0" y1="521.9" x2="1390.1" y2="662.7"><stop offset="0" stop-color="#ffffff"/><stop offset=".125" stop-color="#e5c7ff"/><stop offset=".25" stop-color="#d09aff"/><stop offset=".375" stop-color="#be75ff"/><stop offset=".625" stop-color="#a43cff"/><stop offset=".875" stop-color="#9011ff"/><stop offset="1" stop-color="#8800ff"/></linearGradient><linearGradient id="c78" gradientUnits="userSpaceOnUse" x1="1438.0" y1="521.9" x2="1394.0" y2="661.1"><stop offset="0" stop-color="#ffffff"/><stop offset=".125" stop-color="#e7c8ff"/><stop offset=".25" stop-color="#d39bff"/><stop offset=".375" stop-color="#c376ff"/><stop offset=".625" stop-color="#a93cff"/><stop offset="1" stop-color="#8f00ff"/></linearGradient><linearGradient id="c79" gradientUnits="userSpaceOnUse" x1="1438.0" y1="521.9" x2="1397.9" y2="659.5"><stop offset="0" stop-color="#ffffff"/><stop offset=".125" stop-color="#e8c8ff"/><stop offset=".25" stop-color="#d69cff"/><stop offset=".5" stop-color="#ba57ff"/><stop offset=".75" stop-color="#a626ff"/><stop offset="1" stop-color="#9600ff"/></linearGradient><linearGradient id="c80" gradientUnits="userSpaceOnUse" x1="1438.0" y1="521.9" x2="1401.6" y2="657.9"><stop offset="0" stop-color="#ffffff"/><stop offset=".125" stop-color="#eac9ff"/><stop offset=".25" stop-color="#d99cff"/><stop offset=".375" stop-color="#cb77ff"/><stop offset=".625" stop-color="#b53dff"/><stop offset="1" stop-color="#9d00ff"/></linearGradient><linearGradient id="c81" gradientUnits="userSpaceOnUse" x1="1438.0" y1="521.9" x2="1405.2" y2="656.4"><stop offset="0" stop-color="#ffffff"/><stop offset=".125" stop-color="#ecc9ff"/><stop offset=".25" stop-color="#dc9dff"/><stop offset=".375" stop-color="#cf78ff"/><stop offset=".625" stop-color="#ba3eff"/><stop offset=".875" stop-color="#ab12ff"/><stop offset="1" stop-color="#a400ff"/></linearGradient><linearGradient id="c82" gradientUnits="userSpaceOnUse" x1="1438.0" y1="521.9" x2="1408.7" y2="654.9"><stop offset="0" stop-color="#ffffff"/><stop offset=".125" stop-color="#edcaff"/><stop offset=".25" stop-color="#df9eff"/><stop offset=".5" stop-color="#c959ff"/><stop offset=".75" stop-color="#b827ff"/><stop offset="1" stop-color="#ab00ff"/></linearGradient><linearGradient id="c83" gradientUnits="userSpaceOnUse" x1="1438.0" y1="521.9" x2="1412.1" y2="653.5"><stop offset="0" stop-color="#ffffff"/><stop offset=".125" stop-color="#efcaff"/><stop offset=".25" stop-color="#e29eff"/><stop offset=".375" stop-color="#d779ff"/><stop offset=".625" stop-color="#c53fff"/><stop offset=".875" stop-color="#b812ff"/><stop offset="1" stop-color="#b200ff"/></linearGradient><linearGradient id="c84" gradientUnits="userSpaceOnUse" x1="1438.0" y1="521.9" x2="1415.5" y2="652.1"><stop offset="0" stop-color="#ffffff"/><stop offset=".125" stop-color="#f1caff"/><stop offset=".25" stop-color="#e59fff"/><stop offset=".375" stop-color="#db7aff"/><stop offset=".625" stop-color="#cb3fff"/><stop offset="1" stop-color="#b900ff"/></linearGradient><linearGradient id="c85" gradientUnits="userSpaceOnUse" x1="1438.0" y1="521.9" x2="1418.7" y2="650.7"><stop offset="0" stop-color="#ffffff"/><stop offset=".125" stop-color="#f2cbff"/><stop offset=".25" stop-color="#e79fff"/><stop offset=".5" stop-color="#d75bff"/><stop offset=".75" stop-color="#ca28ff"/><stop offset="1" stop-color="#c000ff"/></linearGradient><linearGradient id="c86" gradientUnits="userSpaceOnUse" x1="1438.0" y1="521.9" x2="1421.9" y2="649.4"><stop offset="0" stop-color="#ffffff"/><stop offset=".125" stop-color="#f4cbff"/><stop offset=".25" stop-color="#eaa0ff"/><stop offset=".375" stop-color="#e27bff"/><stop offset=".625" stop-color="#d540ff"/><stop offset="1" stop-color="#c700ff"/></linearGradient><linearGradient id="c87" gradientUnits="userSpaceOnUse" x1="1438.0" y1="521.9" x2="1424.9" y2="648.1"><stop offset="0" stop-color="#ffffff"/><stop offset=".125" stop-color="#f5ccff"/><stop offset=".25" stop-color="#eda1ff"/><stop offset=".5" stop-color="#e05cff"/><stop offset=".875" stop-color="#d213ff"/><stop offset="1" stop-color="#ce00ff"/></linearGradient><linearGradient id="c88" gradientUnits="userSpaceOnUse" x1="1438.0" y1="521.9" x2="1428.0" y2="646.9"><stop offset="0" stop-color="#ffffff"/><stop offset=".125" stop-color="#f7ccff"/><stop offset=".25" stop-color="#efa1ff"/><stop offset=".5" stop-color="#e45dff"/><stop offset=".75" stop-color="#dc29ff"/><stop offset="1" stop-color="#d500ff"/></linearGradient><linearGradient id="c89" gradientUnits="userSpaceOnUse" x1="1438.0" y1="521.9" x2="1430.9" y2="645.6"><stop offset="0" stop-color="#ffffff"/><stop offset=".125" stop-color="#f8cdff"/><stop offset=".25" stop-color="#f2a2ff"/><stop offset=".375" stop-color="#ed7dff"/><stop offset=".625" stop-color="#e542ff"/><stop offset="1" stop-color="#dc00ff"/></linearGradient><linearGradient id="c90" gradientUnits="userSpaceOnUse" x1="1438.0" y1="521.9" x2="1433.8" y2="644.4"><stop offset="0" stop-color="#ffffff"/><stop offset=".125" stop-color="#f9cdff"/><stop offset=".25" stop-color="#f5a2ff"/><stop offset=".5" stop-color="#ed5eff"/><stop offset=".75" stop-color="#e72aff"/><stop offset="1" stop-color="#e200ff"/></linearGradient><linearGradient id="c91" gradientUnits="userSpaceOnUse" x1="1438.0" y1="521.9" x2="1436.6" y2="643.2"><stop offset="0" stop-color="#ffffff"/><stop offset=".125" stop-color="#fbcdff"/><stop offset=".375" stop-color="#f47eff"/><stop offset=".625" stop-color="#ef43ff"/><stop offset="1" stop-color="#e900ff"/></linearGradient><linearGradient id="c92" gradientUnits="userSpaceOnUse" x1="1438.0" y1="521.9" x2="1439.4" y2="642.1"><stop offset="0" stop-color="#ffffff"/><stop offset=".125" stop-color="#fcceff"/><stop offset=".375" stop-color="#f77fff"/><stop offset=".625" stop-color="#f443ff"/><stop offset="1" stop-color="#f000ff"/></linearGradient><linearGradient id="c93" gradientUnits="userSpaceOnUse" x1="1438.0" y1="521.9" x2="1442.1" y2="640.9"><stop offset="0" stop-color="#ffffff"/><stop offset=".125" stop-color="#fdceff"/><stop offset=".25" stop-color="#fca4ff"/><stop offset=".5" stop-color="#fa60ff"/><stop offset=".875" stop-color="#f814ff"/><stop offset="1" stop-color="#f700ff"/></linearGradient><linearGradient id="c94" gradientUnits="userSpaceOnUse" x1="1438.0" y1="521.9" x2="1444.4" y2="640.0"><stop offset="0" stop-color="#ffffff"/><stop offset=".125" stop-color="#feceff"/><stop offset=".375" stop-color="#fe80ff"/><stop offset=".625" stop-color="#fd44ff"/><stop offset=".875" stop-color="#fd14ff"/><stop offset="1" stop-color="#fd00ff"/></linearGradient><linearGradient id="c95" gradientUnits="userSpaceOnUse" x1="1438.0" y1="521.9" x2="1445.7" y2="639.4"><stop offset="0" stop-color="#ffffff"/><stop offset=".125" stop-color="#ffceff"/><stop offset=".375" stop-color="#ff80ff"/><stop offset=".625" stop-color="#ff44fe"/><stop offset=".875" stop-color="#ff14fe"/><stop offset="1" stop-color="#ff00fe"/></linearGradient><linearGradient id="c96" gradientUnits="userSpaceOnUse" x1="1438.0" y1="521.9" x2="1447.4" y2="638.7"><stop offset="0" stop-color="#ffffff"/><stop offset=".125" stop-color="#ffcefe"/><stop offset=".25" stop-color="#ffa4fd"/><stop offset=".5" stop-color="#ff60fc"/><stop offset=".875" stop-color="#ff14fa"/><stop offset="1" stop-color="#ff00fa"/></linearGradient><linearGradient id="c97" gradientUnits="userSpaceOnUse" x1="1438.0" y1="521.9" x2="1450.0" y2="637.6"><stop offset="0" stop-color="#ffffff"/><stop offset=".125" stop-color="#ffcdfd"/><stop offset=".375" stop-color="#ff7ef9"/><stop offset=".625" stop-color="#ff43f6"/><stop offset="1" stop-color="#ff00f3"/></linearGradient><linearGradient id="c98" gradientUnits="userSpaceOnUse" x1="1438.0" y1="521.9" x2="1452.6" y2="636.6"><stop offset="0" stop-color="#ffffff"/><stop offset=".125" stop-color="#ffcdfc"/><stop offset=".25" stop-color="#ffa2f9"/><stop offset=".375" stop-color="#ff7df6"/><stop offset=".625" stop-color="#ff42f2"/><stop offset="1" stop-color="#ff00ed"/></linearGradient><linearGradient id="c99" gradientUnits="userSpaceOnUse" x1="1438.0" y1="521.9" x2="1455.1" y2="635.5"><stop offset="0" stop-color="#ffffff"/><stop offset=".125" stop-color="#ffccfa"/><stop offset=".25" stop-color="#ffa1f6"/><stop offset=".375" stop-color="#ff7cf3"/><stop offset=".625" stop-color="#ff41ed"/><stop offset=".875" stop-color="#ff13e9"/><stop offset="1" stop-color="#ff00e7"/></linearGradient><linearGradient id="c100" gradientUnits="userSpaceOnUse" x1="1438.0" y1="521.9" x2="1457.6" y2="634.5"><stop offset="0" stop-color="#ffffff"/><stop offset=".125" stop-color="#ffcbf9"/><stop offset=".25" stop-color="#ffa0f4"/><stop offset=".375" stop-color="#ff7bf0"/><stop offset=".625" stop-color="#ff40e9"/><stop offset="1" stop-color="#ff00e2"/></linearGradient><linearGradient id="c101" gradientUnits="userSpaceOnUse" x1="1438.0" y1="521.9" x2="1460.0" y2="633.5"><stop offset="0" stop-color="#ffffff"/><stop offset=".125" stop-color="#ffcbf8"/><stop offset=".25" stop-color="#ff9ff2"/><stop offset=".5" stop-color="#ff5be9"/><stop offset=".75" stop-color="#ff28e2"/><stop offset="1" stop-color="#ff00dc"/></linearGradient><linearGradient id="c102" gradientUnits="userSpaceOnUse" x1="1438.0" y1="521.9" x2="1462.4" y2="632.5"><stop offset="0" stop-color="#ffffff"/><stop offset=".125" stop-color="#ffcaf7"/><stop offset=".25" stop-color="#ff9ef0"/><stop offset=".5" stop-color="#ff5ae5"/><stop offset=".75" stop-color="#ff27dd"/><stop offset="1" stop-color="#ff00d7"/></linearGradient><linearGradient id="c103" gradientUnits="userSpaceOnUse" x1="1438.0" y1="521.9" x2="1464.8" y2="631.5"><stop offset="0" stop-color="#ffffff"/><stop offset=".125" stop-color="#ffcaf6"/><stop offset=".25" stop-color="#ff9eee"/><stop offset=".5" stop-color="#ff59e2"/><stop offset=".75" stop-color="#ff27d9"/><stop offset="1" stop-color="#ff00d2"/></linearGradient><linearGradient id="c104" gradientUnits="userSpaceOnUse" x1="1438.0" y1="521.9" x2="1467.1" y2="630.5"><stop offset="0" stop-color="#ffffff"/><stop offset=".125" stop-color="#ffc9f5"/><stop offset=".25" stop-color="#ff9dec"/><stop offset=".375" stop-color="#ff78e5"/><stop offset=".625" stop-color="#ff3eda"/><stop offset=".875" stop-color="#ff12d1"/><stop offset="1" stop-color="#ff00ce"/></linearGradient><linearGradient id="c105" gradientUnits="userSpaceOnUse" x1="1438.0" y1="521.9" x2="1469.5" y2="629.5"><stop offset="0" stop-color="#ffffff"/><stop offset=".125" stop-color="#ffc8f4"/><stop offset=".25" stop-color="#ff9cea"/><stop offset=".375" stop-color="#ff77e2"/><stop offset=".625" stop-color="#ff3dd6"/><stop offset="1" stop-color="#ff00c9"/></linearGradient><linearGradient id="c106" gradientUnits="userSpaceOnUse" x1="1438.0" y1="521.9" x2="1471.8" y2="628.5"><stop offset="0" stop-color="#ffffff"/><stop offset=".125" stop-color="#ffc8f2"/><stop offset=".25" stop-color="#ff9be8"/><stop offset=".375" stop-color="#ff76e0"/><stop offset=".625" stop-color="#ff3dd3"/><stop offset="1" stop-color="#ff00c5"/></linearGradient><linearGradient id="c107" gradientUnits="userSpaceOnUse" x1="1438.0" y1="521.9" x2="1474.0" y2="627.6"><stop offset="0" stop-color="#ffffff"/><stop offset=".125" stop-color="#ffc7f1"/><stop offset=".25" stop-color="#ff9ae6"/><stop offset=".375" stop-color="#ff75dd"/><stop offset=".625" stop-color="#ff3ccf"/><stop offset=".875" stop-color="#ff11c5"/><stop offset="1" stop-color="#ff00c1"/></linearGradient><linearGradient id="c108" gradientUnits="userSpaceOnUse" x1="1438.0" y1="521.9" x2="1476.3" y2="626.7"><stop offset="0" stop-color="#ffffff"/><stop offset=".125" stop-color="#ffc7f0"/><stop offset=".25" stop-color="#ff9ae5"/><stop offset=".375" stop-color="#ff75db"/><stop offset=".625" stop-color="#ff3bcc"/><stop offset=".875" stop-color="#ff11c1"/><stop offset="1" stop-color="#ff00bd"/></linearGradient><linearGradient id="c109" gradientUnits="userSpaceOnUse" x1="1438.0" y1="521.9" x2="1478.5" y2="625.7"><stop offset="0" stop-color="#ffffff"/><stop offset=".125" stop-color="#ffc6ef"/><stop offset=".25" stop-color="#ff99e3"/><stop offset=".375" stop-color="#ff74d9"/><stop offset=".625" stop-color="#ff3bc9"/><stop offset=".875" stop-color="#ff11bd"/><stop offset="1" stop-color="#ff00b9"/></linearGradient><linearGradient id="c110" gradientUnits="userSpaceOnUse" x1="1438.0" y1="521.9" x2="1480.8" y2="624.8"><stop offset="0" stop-color="#ffffff"/><stop offset=".125" stop-color="#ffc6ee"/><stop offset=".25" stop-color="#ff98e1"/><stop offset=".375" stop-color="#ff73d6"/><stop offset=".625" stop-color="#ff3ac6"/><stop offset="1" stop-color="#ff00b5"/></linearGradient><linearGradient id="c111" gradientUnits="userSpaceOnUse" x1="1438.0" y1="521.9" x2="1483.0" y2="623.9"><stop offset="0" stop-color="#ffffff"/><stop offset=".125" stop-color="#ffc5ed"/><stop offset=".25" stop-color="#ff97df"/><stop offset=".375" stop-color="#ff72d4"/><stop offset=".625" stop-color="#ff3ac3"/><stop offset="1" stop-color="#ff00b1"/></linearGradient><linearGradient id="c112" gradientUnits="userSpaceOnUse" x1="1438.0" y1="521.9" x2="1485.2" y2="622.9"><stop offset="0" stop-color="#ffffff"/><stop offset=".125" stop-color="#ffc5ec"/><stop offset=".25" stop-color="#ff97de"/><stop offset=".375" stop-color="#ff72d2"/><stop offset=".625" stop-color="#ff39c0"/><stop offset=".875" stop-color="#ff10b3"/><stop offset="1" stop-color="#ff00ae"/></linearGradient><linearGradient id="c113" gradientUnits="userSpaceOnUse" x1="1438.0" y1="521.9" x2="1487.3" y2="622.0"><stop offset="0" stop-color="#ffffff"/><stop offset=".125" stop-color="#ffc4eb"/><stop offset=".25" stop-color="#ff96dc"/><stop offset=".375" stop-color="#ff71d0"/><stop offset=".5" stop-color="#ff52c5"/><stop offset=".75" stop-color="#ff23b6"/><stop offset="1" stop-color="#ff00aa"/></linearGradient><linearGradient id="c114" gradientUnits="userSpaceOnUse" x1="1438.0" y1="521.9" x2="1489.5" y2="621.1"><stop offset="0" stop-color="#ffffff"/><stop offset=".125" stop-color="#ffc4ea"/><stop offset=".25" stop-color="#ff95da"/><stop offset=".375" stop-color="#ff70ce"/><stop offset=".625" stop-color="#ff38ba"/><stop offset=".875" stop-color="#ff10ac"/><stop offset="1" stop-color="#ff00a7"/></linearGradient><linearGradient id="c115" gradientUnits="userSpaceOnUse" x1="1438.0" y1="521.9" x2="1491.7" y2="620.2"><stop offset="0" stop-color="#ffffff"/><stop offset=".125" stop-color="#ffc3ea"/><stop offset=".25" stop-color="#ff95d9"/><stop offset=".375" stop-color="#ff6fcb"/><stop offset=".625" stop-color="#ff38b7"/><stop offset=".875" stop-color="#ff10a9"/><stop offset="1" stop-color="#ff00a3"/></linearGradient><linearGradient id="c116" gradientUnits="userSpaceOnUse" x1="1438.0" y1="521.9" x2="1493.8" y2="619.3"><stop offset="0" stop-color="#ffffff"/><stop offset=".125" stop-color="#ffc3e9"/><stop offset=".25" stop-color="#ff94d7"/><stop offset=".375" stop-color="#ff6fc9"/><stop offset=".5" stop-color="#ff50be"/><stop offset=".75" stop-color="#ff22ad"/><stop offset="1" stop-color="#ff00a0"/></linearGradient><linearGradient id="c117" gradientUnits="userSpaceOnUse" x1="1438.0" y1="521.9" x2="1496.0" y2="618.4"><stop offset="0" stop-color="#ffffff"/><stop offset=".125" stop-color="#ffc2e8"/><stop offset=".25" stop-color="#ff93d6"/><stop offset=".375" stop-color="#ff6ec7"/><stop offset=".625" stop-color="#ff37b2"/><stop offset="1" stop-color="#ff009d"/></linearGradient><linearGradient id="c118" gradientUnits="userSpaceOnUse" x1="1438.0" y1="521.9" x2="1498.1" y2="617.5"><stop offset="0" stop-color="#ffffff"/><stop offset=".125" stop-color="#ffc2e7"/><stop offset=".25" stop-color="#ff93d4"/><stop offset=".375" stop-color="#ff6dc5"/><stop offset=".625" stop-color="#ff36af"/><stop offset="1" stop-color="#ff009a"/></linearGradient><linearGradient id="c119" gradientUnits="userSpaceOnUse" x1="1438.0" y1="521.9" x2="1500.2" y2="616.6"><stop offset="0" stop-color="#ffffff"/><stop offset=".125" stop-color="#ffc1e6"/><stop offset=".25" stop-color="#ff92d3"/><stop offset=".375" stop-color="#ff6dc3"/><stop offset=".625" stop-color="#ff36ad"/><stop offset=".875" stop-color="#ff0f9d"/><stop offset="1" stop-color="#ff0097"/></linearGradient><linearGradient id="c120" gradientUnits="userSpaceOnUse" x1="1438.0" y1="521.9" x2="1502.4" y2="615.7"><stop offset="0" stop-color="#ffffff"/><stop offset=".125" stop-color="#ffc1e5"/><stop offset=".25" stop-color="#ff91d1"/><stop offset=".375" stop-color="#ff6cc1"/><stop offset=".625" stop-color="#ff35aa"/><stop offset=".875" stop-color="#ff0f9a"/><stop offset="1" stop-color="#ff0094"/></linearGradient><linearGradient id="c121" gradientUnits="userSpaceOnUse" x1="1438.0" y1="521.9" x2="1504.5" y2="614.9"><stop offset="0" stop-color="#ffffff"/><stop offset=".125" stop-color="#ffc0e4"/><stop offset=".25" stop-color="#ff91cf"/><stop offset=".375" stop-color="#ff6cbf"/><stop offset=".625" stop-color="#ff35a8"/><stop offset=".875" stop-color="#ff0f98"/><stop offset="1" stop-color="#ff0091"/></linearGradient><linearGradient id="c122" gradientUnits="userSpaceOnUse" x1="1438.0" y1="521.9" x2="1506.6" y2="614.0"><stop offset="0" stop-color="#ffffff"/><stop offset=".125" stop-color="#ffc0e3"/><stop offset=".25" stop-color="#ff90ce"/><stop offset=".375" stop-color="#ff6bbe"/><stop offset=".5" stop-color="#ff4db0"/><stop offset=".75" stop-color="#ff209c"/><stop offset="1" stop-color="#ff008e"/></linearGradient><linearGradient id="c123" gradientUnits="userSpaceOnUse" x1="1438.0" y1="521.9" x2="1508.8" y2="613.1"><stop offset="0" stop-color="#ffffff"/><stop offset=".125" stop-color="#ffbfe2"/><stop offset=".25" stop-color="#ff90cc"/><stop offset=".375" stop-color="#ff6abc"/><stop offset=".625" stop-color="#ff34a3"/><stop offset="1" stop-color="#ff008b"/></linearGradient><linearGradient id="c124" gradientUnits="userSpaceOnUse" x1="1438.0" y1="521.9" x2="1510.9" y2="612.2"><stop offset="0" stop-color="#ffffff"/><stop offset=".125" stop-color="#ffbfe1"/><stop offset=".25" stop-color="#ff8fcb"/><stop offset=".375" stop-color="#ff6aba"/><stop offset=".5" stop-color="#ff4cac"/><stop offset=".75" stop-color="#ff2097"/><stop offset="1" stop-color="#ff0089"/></linearGradient><linearGradient id="c125" gradientUnits="userSpaceOnUse" x1="1438.0" y1="521.9" x2="1513.0" y2="611.3"><stop offset="0" stop-color="#ffffff"/><stop offset=".125" stop-color="#ffbee0"/><stop offset=".25" stop-color="#ff8eca"/><stop offset=".375" stop-color="#ff69b8"/><stop offset=".625" stop-color="#ff339e"/><stop offset="1" stop-color="#ff0086"/></linearGradient><linearGradient id="c126" gradientUnits="userSpaceOnUse" x1="1438.0" y1="521.9" x2="1515.2" y2="610.4"><stop offset="0" stop-color="#ffffff"/><stop offset=".125" stop-color="#ffbedf"/><stop offset=".25" stop-color="#ff8ec8"/><stop offset=".375" stop-color="#ff69b6"/><stop offset=".5" stop-color="#ff4ba8"/><stop offset=".75" stop-color="#ff1f93"/><stop offset="1" stop-color="#ff0083"/></linearGradient><linearGradient id="c127" gradientUnits="userSpaceOnUse" x1="1438.0" y1="521.9" x2="1517.3" y2="609.5"><stop offset="0" stop-color="#ffffff"/><stop offset=".125" stop-color="#ffbddf"/><stop offset=".25" stop-color="#ff8dc7"/><stop offset=".375" stop-color="#ff68b4"/><stop offset=".5" stop-color="#ff4aa6"/><stop offset=".75" stop-color="#ff1f90"/><stop offset="1" stop-color="#ff0081"/></linearGradient><linearGradient id="c128" gradientUnits="userSpaceOnUse" x1="1438.0" y1="521.9" x2="1519.5" y2="608.6"><stop offset="0" stop-color="#ffffff"/><stop offset=".125" stop-color="#ffbdde"/><stop offset=".25" stop-color="#ff8cc5"/><stop offset=".375" stop-color="#ff67b2"/><stop offset=".625" stop-color="#ff3298"/><stop offset=".875" stop-color="#ff0e85"/><stop offset="1" stop-color="#ff007e"/></linearGradient><linearGradient id="c129" gradientUnits="userSpaceOnUse" x1="1438.0" y1="521.9" x2="1521.6" y2="607.7"><stop offset="0" stop-color="#ffffff"/><stop offset=".125" stop-color="#ffbcdd"/><stop offset=".25" stop-color="#ff8cc4"/><stop offset=".375" stop-color="#ff67b1"/><stop offset=".5" stop-color="#ff49a2"/><stop offset=".75" stop-color="#ff1e8b"/><stop offset="1" stop-color="#ff007c"/></linearGradient><linearGradient id="c130" gradientUnits="userSpaceOnUse" x1="1438.0" y1="521.9" x2="1523.8" y2="606.8"><stop offset="0" stop-color="#ffffff"/><stop offset=".125" stop-color="#ffbcdc"/><stop offset=".25" stop-color="#ff8bc2"/><stop offset=".375" stop-color="#ff66af"/><stop offset=".625" stop-color="#ff3193"/><stop offset="1" stop-color="#ff0079"/></linearGradient><linearGradient id="c131" gradientUnits="userSpaceOnUse" x1="1438.0" y1="521.9" x2="1526.0" y2="605.9"><stop offset="0" stop-color="#ffffff"/><stop offset=".125" stop-color="#ffbcdb"/><stop offset=".25" stop-color="#ff8bc1"/><stop offset=".375" stop-color="#ff66ad"/><stop offset=".625" stop-color="#ff3191"/><stop offset="1" stop-color="#ff0077"/></linearGradient><linearGradient id="c132" gradientUnits="userSpaceOnUse" x1="1438.0" y1="521.9" x2="1528.2" y2="604.9"><stop offset="0" stop-color="#ffffff"/><stop offset=".125" stop-color="#ffbbda"/><stop offset=".25" stop-color="#ff8ac0"/><stop offset=".375" stop-color="#ff65ab"/><stop offset=".5" stop-color="#ff489c"/><stop offset=".75" stop-color="#ff1e85"/><stop offset="1" stop-color="#ff0075"/></linearGradient><linearGradient id="c133" gradientUnits="userSpaceOnUse" x1="1438.0" y1="521.9" x2="1530.4" y2="604.0"><stop offset="0" stop-color="#ffffff"/><stop offset=".125" stop-color="#ffbbd9"/><stop offset=".25" stop-color="#ff89be"/><stop offset=".375" stop-color="#ff64aa"/><stop offset=".625" stop-color="#ff308d"/><stop offset="1" stop-color="#ff0072"/></linearGradient><linearGradient id="c134" gradientUnits="userSpaceOnUse" x1="1438.0" y1="521.9" x2="1532.6" y2="603.1"><stop offset="0" stop-color="#ffffff"/><stop offset=".125" stop-color="#ffbad8"/><stop offset=".25" stop-color="#ff89bd"/><stop offset=".375" stop-color="#ff64a8"/><stop offset=".5" stop-color="#ff4798"/><stop offset=".75" stop-color="#ff1d80"/><stop offset="1" stop-color="#ff0070"/></linearGradient><linearGradient id="c135" gradientUnits="userSpaceOnUse" x1="1438.0" y1="521.9" x2="1534.9" y2="602.1"><stop offset="0" stop-color="#ffffff"/><stop offset=".125" stop-color="#ffbad7"/><stop offset=".25" stop-color="#ff88bb"/><stop offset=".375" stop-color="#ff63a6"/><stop offset=".625" stop-color="#ff3089"/><stop offset=".875" stop-color="#ff0d75"/><stop offset="1" stop-color="#ff006e"/></linearGradient><linearGradient id="c136" gradientUnits="userSpaceOnUse" x1="1438.0" y1="521.9" x2="1537.2" y2="601.2"><stop offset="0" stop-color="#ffffff"/><stop offset=".125" stop-color="#ffb9d7"/><stop offset=".25" stop-color="#ff88ba"/><stop offset=".375" stop-color="#ff63a4"/><stop offset=".5" stop-color="#ff4694"/><stop offset=".75" stop-color="#ff1d7c"/><stop offset="1" stop-color="#ff006b"/></linearGradient><linearGradient id="c137" gradientUnits="userSpaceOnUse" x1="1438.0" y1="521.9" x2="1539.4" y2="600.2"><stop offset="0" stop-color="#ffffff"/><stop offset=".125" stop-color="#ffb9d6"/><stop offset=".25" stop-color="#ff87b8"/><stop offset=".375" stop-color="#ff62a3"/><stop offset=".625" stop-color="#ff2f85"/><stop offset=".875" stop-color="#ff0d71"/><stop offset="1" stop-color="#ff0069"/></linearGradient><linearGradient id="c138" gradientUnits="userSpaceOnUse" x1="1438.0" y1="521.9" x2="1541.7" y2="599.3"><stop offset="0" stop-color="#ffffff"/><stop offset=".125" stop-color="#ffb8d5"/><stop offset=".25" stop-color="#ff86b7"/><stop offset=".375" stop-color="#ff62a1"/><stop offset=".5" stop-color="#ff4590"/><stop offset=".75" stop-color="#ff1c78"/><stop offset="1" stop-color="#ff0067"/></linearGradient><linearGradient id="c139" gradientUnits="userSpaceOnUse" x1="1438.0" y1="521.9" x2="1544.1" y2="598.3"><stop offset="0" stop-color="#ffffff"/><stop offset=".125" stop-color="#ffb8d4"/><stop offset=".25" stop-color="#ff86b6"/><stop offset=".375" stop-color="#ff619f"/><stop offset=".625" stop-color="#ff2e81"/><stop offset="1" stop-color="#ff0065"/></linearGradient><linearGradient id="c140" gradientUnits="userSpaceOnUse" x1="1438.0" y1="521.9" x2="1546.4" y2="597.3"><stop offset="0" stop-color="#ffffff"/><stop offset=".125" stop-color="#ffb7d3"/><stop offset=".25" stop-color="#ff85b4"/><stop offset=".375" stop-color="#ff609e"/><stop offset=".5" stop-color="#ff448c"/><stop offset=".75" stop-color="#ff1c73"/><stop offset="1" stop-color="#ff0062"/></linearGradient><linearGradient id="c141" gradientUnits="userSpaceOnUse" x1="1438.0" y1="521.9" x2="1548.8" y2="596.3"><stop offset="0" stop-color="#ffffff"/><stop offset=".125" stop-color="#ffb7d2"/><stop offset=".25" stop-color="#ff85b3"/><stop offset=".375" stop-color="#ff609c"/><stop offset=".625" stop-color="#ff2d7c"/><stop offset="1" stop-color="#ff0060"/></linearGradient><linearGradient id="c142" gradientUnits="userSpaceOnUse" x1="1438.0" y1="521.9" x2="1551.2" y2="595.3"><stop offset="0" stop-color="#ffffff"/><stop offset=".125" stop-color="#ffb6d1"/><stop offset=".25" stop-color="#ff84b1"/><stop offset=".375" stop-color="#ff5f9a"/><stop offset=".5" stop-color="#ff4388"/><stop offset=".75" stop-color="#ff1b6f"/><stop offset="1" stop-color="#ff005e"/></linearGradient><linearGradient id="c143" gradientUnits="userSpaceOnUse" x1="1438.0" y1="521.9" x2="1553.7" y2="594.3"><stop offset="0" stop-color="#ffffff"/><stop offset=".125" stop-color="#ffb6d0"/><stop offset=".25" stop-color="#ff83b0"/><stop offset=".375" stop-color="#ff5f98"/><stop offset=".5" stop-color="#ff4387"/><stop offset=".75" stop-color="#ff1b6d"/><stop offset="1" stop-color="#ff005c"/></linearGradient><linearGradient id="c144" gradientUnits="userSpaceOnUse" x1="1438.0" y1="521.9" x2="1556.2" y2="593.2"><stop offset="0" stop-color="#ffffff"/><stop offset=".125" stop-color="#ffb5cf"/><stop offset=".25" stop-color="#ff83ae"/><stop offset=".375" stop-color="#ff5e97"/><stop offset=".5" stop-color="#ff4285"/><stop offset=".75" stop-color="#ff1b6b"/><stop offset="1" stop-color="#ff005a"/></linearGradient><linearGradient id="c145" gradientUnits="userSpaceOnUse" x1="1438.0" y1="521.9" x2="1558.7" y2="592.2"><stop offset="0" stop-color="#ffffff"/><stop offset=".125" stop-color="#ffb5ce"/><stop offset=".25" stop-color="#ff82ad"/><stop offset=".375" stop-color="#ff5e95"/><stop offset=".5" stop-color="#ff4283"/><stop offset=".75" stop-color="#ff1b69"/><stop offset="1" stop-color="#ff0057"/></linearGradient><linearGradient id="c146" gradientUnits="userSpaceOnUse" x1="1438.0" y1="521.9" x2="1561.2" y2="591.1"><stop offset="0" stop-color="#ffffff"/><stop offset=".125" stop-color="#ffb4cd"/><stop offset=".25" stop-color="#ff82ac"/><stop offset=".375" stop-color="#ff5d93"/><stop offset=".5" stop-color="#ff4181"/><stop offset=".75" stop-color="#ff1a67"/><stop offset="1" stop-color="#ff0055"/></linearGradient><linearGradient id="c147" gradientUnits="userSpaceOnUse" x1="1438.0" y1="521.9" x2="1563.8" y2="590.0"><stop offset="0" stop-color="#ffffff"/><stop offset=".125" stop-color="#ffb4cc"/><stop offset=".25" stop-color="#ff81aa"/><stop offset=".375" stop-color="#ff5d92"/><stop offset=".5" stop-color="#ff417f"/><stop offset=".75" stop-color="#ff1a65"/><stop offset="1" stop-color="#ff0053"/></linearGradient><linearGradient id="c148" gradientUnits="userSpaceOnUse" x1="1438.0" y1="521.9" x2="1566.5" y2="588.9"><stop offset="0" stop-color="#ffffff"/><stop offset=".125" stop-color="#ffb3cb"/><stop offset=".25" stop-color="#ff80a9"/><stop offset=".375" stop-color="#ff5c90"/><stop offset=".5" stop-color="#ff407d"/><stop offset=".75" stop-color="#ff1a63"/><stop offset="1" stop-color="#ff0051"/></linearGradient><linearGradient id="c149" gradientUnits="userSpaceOnUse" x1="1438.0" y1="521.9" x2="1569.2" y2="587.8"><stop offset="0" stop-color="#ffffff"/><stop offset=".125" stop-color="#ffb3ca"/><stop offset=".25" stop-color="#ff80a7"/><stop offset=".375" stop-color="#ff5b8e"/><stop offset=".5" stop-color="#ff407b"/><stop offset=".75" stop-color="#ff1a61"/><stop offset="1" stop-color="#ff004f"/></linearGradient><linearGradient id="c150" gradientUnits="userSpaceOnUse" x1="1438.0" y1="521.9" x2="1571.9" y2="586.7"><stop offset="0" stop-color="#ffffff"/><stop offset=".125" stop-color="#ffb2c9"/><stop offset=".25" stop-color="#ff7fa6"/><stop offset=".375" stop-color="#ff5b8c"/><stop offset=".625" stop-color="#ff2a6a"/><stop offset="1" stop-color="#ff004d"/></linearGradient><linearGradient id="c151" gradientUnits="userSpaceOnUse" x1="1438.0" y1="521.9" x2="1574.7" y2="585.5"><stop offset="0" stop-color="#ffffff"/><stop offset=".125" stop-color="#ffb2c8"/><stop offset=".25" stop-color="#ff7fa4"/><stop offset=".375" stop-color="#ff5a8a"/><stop offset=".5" stop-color="#ff3f77"/><stop offset=".75" stop-color="#ff195c"/><stop offset="1" stop-color="#ff004b"/></linearGradient><linearGradient id="c152" gradientUnits="userSpaceOnUse" x1="1438.0" y1="521.9" x2="1577.6" y2="584.3"><stop offset="0" stop-color="#ffffff"/><stop offset=".125" stop-color="#ffb1c7"/><stop offset=".25" stop-color="#ff7ea3"/><stop offset=".375" stop-color="#ff5a89"/><stop offset=".5" stop-color="#ff3f75"/><stop offset=".75" stop-color="#ff195a"/><stop offset="1" stop-color="#ff0049"/></linearGradient><linearGradient id="c153" gradientUnits="userSpaceOnUse" x1="1438.0" y1="521.9" x2="1580.5" y2="583.1"><stop offset="0" stop-color="#ffffff"/><stop offset=".125" stop-color="#ffb1c6"/><stop offset=".25" stop-color="#ff7da1"/><stop offset=".375" stop-color="#ff5987"/><stop offset=".5" stop-color="#ff3e73"/><stop offset=".75" stop-color="#ff1958"/><stop offset="1" stop-color="#ff0046"/></linearGradient><linearGradient id="c154" gradientUnits="userSpaceOnUse" x1="1438.0" y1="521.9" x2="1583.4" y2="581.8"><stop offset="0" stop-color="#ffffff"/><stop offset=".125" stop-color="#ffb0c5"/><stop offset=".25" stop-color="#ff7da0"/><stop offset=".375" stop-color="#ff5885"/><stop offset=".625" stop-color="#ff2962"/><stop offset=".875" stop-color="#ff0b4c"/><stop offset="1" stop-color="#ff0044"/></linearGradient><linearGradient id="c155" gradientUnits="userSpaceOnUse" x1="1438.0" y1="521.9" x2="1586.5" y2="580.6"><stop offset="0" stop-color="#ffffff"/><stop offset=".125" stop-color="#ffafc4"/><stop offset=".25" stop-color="#ff7c9e"/><stop offset=".375" stop-color="#ff5883"/><stop offset=".5" stop-color="#ff3d6f"/><stop offset=".75" stop-color="#ff1854"/><stop offset="1" stop-color="#ff0042"/></linearGradient><linearGradient id="c156" gradientUnits="userSpaceOnUse" x1="1438.0" y1="521.9" x2="1589.6" y2="579.3"><stop offset="0" stop-color="#ffffff"/><stop offset=".125" stop-color="#ffafc3"/><stop offset=".25" stop-color="#ff7b9c"/><stop offset=".375" stop-color="#ff5781"/><stop offset=".625" stop-color="#ff285e"/><stop offset="1" stop-color="#ff0040"/></linearGradient><linearGradient id="c157" gradientUnits="userSpaceOnUse" x1="1438.0" y1="521.9" x2="1592.8" y2="577.9"><stop offset="0" stop-color="#ffffff"/><stop offset=".125" stop-color="#ffaec2"/><stop offset=".25" stop-color="#ff7b9b"/><stop offset=".375" stop-color="#ff577f"/><stop offset=".5" stop-color="#ff3c6b"/><stop offset=".75" stop-color="#ff1850"/><stop offset="1" stop-color="#ff003e"/></linearGradient><linearGradient id="c158" gradientUnits="userSpaceOnUse" x1="1438.0" y1="521.9" x2="1596.0" y2="576.6"><stop offset="0" stop-color="#ffffff"/><stop offset=".125" stop-color="#ffaec1"/><stop offset=".25" stop-color="#ff7a99"/><stop offset=".375" stop-color="#ff567e"/><stop offset=".5" stop-color="#ff3c69"/><stop offset=".625" stop-color="#ff275a"/><stop offset="1" stop-color="#ff003c"/></linearGradient><linearGradient id="c159" gradientUnits="userSpaceOnUse" x1="1438.0" y1="521.9" x2="1599.4" y2="575.2"><stop offset="0" stop-color="#ffffff"/><stop offset=".125" stop-color="#ffadc0"/><stop offset=".25" stop-color="#ff7997"/><stop offset=".375" stop-color="#ff557c"/><stop offset=".5" stop-color="#ff3b67"/><stop offset=".75" stop-color="#ff174c"/><stop offset="1" stop-color="#ff003a"/></linearGradient><linearGradient id="c160" gradientUnits="userSpaceOnUse" x1="1438.0" y1="521.9" x2="1602.8" y2="573.7"><stop offset="0" stop-color="#ffffff"/><stop offset=".125" stop-color="#ffacbe"/><stop offset=".25" stop-color="#ff7896"/><stop offset=".375" stop-color="#ff557a"/><stop offset=".5" stop-color="#ff3b65"/><stop offset=".75" stop-color="#ff174a"/><stop offset="1" stop-color="#ff0037"/></linearGradient><linearGradient id="c161" gradientUnits="userSpaceOnUse" x1="1438.0" y1="521.9" x2="1606.4" y2="572.2"><stop offset="0" stop-color="#ffffff"/><stop offset=".125" stop-color="#ffacbd"/><stop offset=".25" stop-color="#ff7894"/><stop offset=".375" stop-color="#ff5478"/><stop offset=".5" stop-color="#ff3a63"/><stop offset=".75" stop-color="#ff1747"/><stop offset="1" stop-color="#ff0035"/></linearGradient><linearGradient id="c162" gradientUnits="userSpaceOnUse" x1="1438.0" y1="521.9" x2="1610.0" y2="570.7"><stop offset="0" stop-color="#ffffff"/><stop offset=".125" stop-color="#ffabbc"/><stop offset=".25" stop-color="#ff7792"/><stop offset=".375" stop-color="#ff5376"/><stop offset=".625" stop-color="#ff2651"/><stop offset=".875" stop-color="#ff0a3b"/><stop offset="1" stop-color="#ff0033"/></linearGradient><linearGradient id="c163" gradientUnits="userSpaceOnUse" x1="1438.0" y1="521.9" x2="1613.8" y2="569.2"><stop offset="0" stop-color="#ffffff"/><stop offset=".125" stop-color="#ffabbb"/><stop offset=".25" stop-color="#ff7690"/><stop offset=".375" stop-color="#ff5374"/><stop offset=".5" stop-color="#ff395f"/><stop offset=".75" stop-color="#ff1643"/><stop offset="1" stop-color="#ff0031"/></linearGradient><linearGradient id="c164" gradientUnits="userSpaceOnUse" x1="1438.0" y1="521.9" x2="1617.6" y2="567.5"><stop offset="0" stop-color="#ffffff"/><stop offset=".125" stop-color="#ffaab9"/><stop offset=".25" stop-color="#ff758f"/><stop offset=".375" stop-color="#ff5272"/><stop offset=".625" stop-color="#ff254d"/><stop offset="1" stop-color="#ff002f"/></linearGradient><linearGradient id="c165" gradientUnits="userSpaceOnUse" x1="1438.0" y1="521.9" x2="1621.6" y2="565.9"><stop offset="0" stop-color="#ffffff"/><stop offset=".125" stop-color="#ffa9b8"/><stop offset=".25" stop-color="#ff758d"/><stop offset=".375" stop-color="#ff5170"/><stop offset=".5" stop-color="#ff385b"/><stop offset=".75" stop-color="#ff163f"/><stop offset="1" stop-color="#ff002c"/></linearGradient><linearGradient id="c166" gradientUnits="userSpaceOnUse" x1="1438.0" y1="521.9" x2="1625.8" y2="564.1"><stop offset="0" stop-color="#ffffff"/><stop offset=".125" stop-color="#ffa8b7"/><stop offset=".25" stop-color="#ff748b"/><stop offset=".375" stop-color="#ff516e"/><stop offset=".5" stop-color="#ff3758"/><stop offset=".75" stop-color="#ff163c"/><stop offset="1" stop-color="#ff002a"/></linearGradient><linearGradient id="c167" gradientUnits="userSpaceOnUse" x1="1438.0" y1="521.9" x2="1630.1" y2="562.3"><stop offset="0" stop-color="#ffffff"/><stop offset=".125" stop-color="#ffa8b5"/><stop offset=".25" stop-color="#ff7389"/><stop offset=".375" stop-color="#ff506b"/><stop offset=".5" stop-color="#ff3756"/><stop offset=".75" stop-color="#ff153a"/><stop offset="1" stop-color="#ff0028"/></linearGradient><linearGradient id="c168" gradientUnits="userSpaceOnUse" x1="1438.0" y1="521.9" x2="1634.5" y2="560.5"><stop offset="0" stop-color="#ffffff"/><stop offset=".125" stop-color="#ffa7b4"/><stop offset=".25" stop-color="#ff7287"/><stop offset=".375" stop-color="#ff4f69"/><stop offset=".5" stop-color="#ff3654"/><stop offset=".75" stop-color="#ff1538"/><stop offset="1" stop-color="#ff0026"/></linearGradient><linearGradient id="c169" gradientUnits="userSpaceOnUse" x1="1438.0" y1="521.9" x2="1639.1" y2="558.6"><stop offset="0" stop-color="#ffffff"/><stop offset=".125" stop-color="#ffa6b2"/><stop offset=".25" stop-color="#ff7185"/><stop offset=".375" stop-color="#ff4f67"/><stop offset=".5" stop-color="#ff3652"/><stop offset=".75" stop-color="#ff1535"/><stop offset="1" stop-color="#ff0023"/></linearGradient><linearGradient id="c170" gradientUnits="userSpaceOnUse" x1="1438.0" y1="521.9" x2="1643.9" y2="556.6"><stop offset="0" stop-color="#ffffff"/><stop offset=".125" stop-color="#ffa5b1"/><stop offset=".25" stop-color="#ff7183"/><stop offset=".375" stop-color="#ff4e65"/><stop offset=".5" stop-color="#ff354f"/><stop offset=".75" stop-color="#ff1533"/><stop offset="1" stop-color="#ff0021"/></linearGradient><linearGradient id="c171" gradientUnits="userSpaceOnUse" x1="1438.0" y1="521.9" x2="1648.9" y2="554.5"><stop offset="0" stop-color="#ffffff"/><stop offset=".125" stop-color="#ffa5af"/><stop offset=".25" stop-color="#ff7081"/><stop offset=".375" stop-color="#ff4d62"/><stop offset=".625" stop-color="#ff223d"/><stop offset="1" stop-color="#ff001f"/></linearGradient><linearGradient id="c172" gradientUnits="userSpaceOnUse" x1="1438.0" y1="521.9" x2="1654.0" y2="552.3"><stop offset="0" stop-color="#ffffff"/><stop offset=".125" stop-color="#ffa4ae"/><stop offset=".25" stop-color="#ff6f7f"/><stop offset=".375" stop-color="#ff4c60"/><stop offset=".5" stop-color="#ff344a"/><stop offset=".75" stop-color="#ff142e"/><stop offset="1" stop-color="#ff001c"/></linearGradient><linearGradient id="c173" gradientUnits="userSpaceOnUse" x1="1438.0" y1="521.9" x2="1659.5" y2="550.0"><stop offset="0" stop-color="#ffffff"/><stop offset=".125" stop-color="#ffa3ac"/><stop offset=".25" stop-color="#ff6e7c"/><stop offset=".375" stop-color="#ff4b5e"/><stop offset=".5" stop-color="#ff3348"/><stop offset=".75" stop-color="#ff142c"/><stop offset="1" stop-color="#ff001a"/></linearGradient><linearGradient id="c174" gradientUnits="userSpaceOnUse" x1="1438.0" y1="521.9" x2="1665.1" y2="547.7"><stop offset="0" stop-color="#ffffff"/><stop offset=".125" stop-color="#ffa2aa"/><stop offset=".25" stop-color="#ff6d7a"/><stop offset=".375" stop-color="#ff4b5b"/><stop offset=".5" stop-color="#ff3345"/><stop offset=".75" stop-color="#ff1429"/><stop offset="1" stop-color="#ff0017"/></linearGradient><linearGradient id="c175" gradientUnits="userSpaceOnUse" x1="1438.0" y1="521.9" x2="1671.0" y2="545.2"><stop offset="0" stop-color="#ffffff"/><stop offset=".125" stop-color="#ffa1a9"/><stop offset=".25" stop-color="#ff6c78"/><stop offset=".375" stop-color="#ff4a59"/><stop offset=".5" stop-color="#ff3243"/><stop offset=".75" stop-color="#ff1326"/><stop offset="1" stop-color="#ff0015"/></linearGradient><linearGradient id="c176" gradientUnits="userSpaceOnUse" x1="1438.0" y1="521.9" x2="1677.2" y2="542.6"><stop offset="0" stop-color="#ffffff"/><stop offset=".125" stop-color="#ffa0a7"/><stop offset=".25" stop-color="#ff6b75"/><stop offset=".375" stop-color="#ff4956"/><stop offset=".5" stop-color="#ff3140"/><stop offset=".75" stop-color="#ff1324"/><stop offset="1" stop-color="#ff0012"/></linearGradient><linearGradient id="c177" gradientUnits="userSpaceOnUse" x1="1438.0" y1="521.9" x2="1683.8" y2="539.9"><stop offset="0" stop-color="#ffffff"/><stop offset=".125" stop-color="#ff9fa5"/><stop offset=".25" stop-color="#ff6a73"/><stop offset=".375" stop-color="#ff4853"/><stop offset=".5" stop-color="#ff313d"/><stop offset=".75" stop-color="#ff1321"/><stop offset="1" stop-color="#ff0010"/></linearGradient><linearGradient id="c178" gradientUnits="userSpaceOnUse" x1="1438.0" y1="521.9" x2="1690.6" y2="537.0"><stop offset="0" stop-color="#ffffff"/><stop offset=".125" stop-color="#ff9ea3"/><stop offset=".25" stop-color="#ff6970"/><stop offset=".375" stop-color="#ff4751"/><stop offset=".5" stop-color="#ff303b"/><stop offset=".75" stop-color="#ff121e"/><stop offset="1" stop-color="#ff000d"/></linearGradient><linearGradient id="c179" gradientUnits="userSpaceOnUse" x1="1438.0" y1="521.9" x2="1697.9" y2="534.0"><stop offset="0" stop-color="#ffffff"/><stop offset=".125" stop-color="#ff9da1"/><stop offset=".25" stop-color="#ff686e"/><stop offset=".375" stop-color="#ff464e"/><stop offset=".5" stop-color="#ff2f38"/><stop offset=".75" stop-color="#ff121c"/><stop offset="1" stop-color="#ff000a"/></linearGradient><linearGradient id="c180" gradientUnits="userSpaceOnUse" x1="1438.0" y1="521.9" x2="1705.5" y2="530.8"><stop offset="0" stop-color="#ffffff"/><stop offset=".125" stop-color="#ff9c9f"/><stop offset=".25" stop-color="#ff666b"/><stop offset=".375" stop-color="#ff454b"/><stop offset=".5" stop-color="#ff2f35"/><stop offset=".75" stop-color="#ff1219"/><stop offset="1" stop-color="#ff0008"/></linearGradient><linearGradient id="c181" gradientUnits="userSpaceOnUse" x1="1438.0" y1="521.9" x2="1713.6" y2="527.4"><stop offset="0" stop-color="#ffffff"/><stop offset=".125" stop-color="#ff9b9c"/><stop offset=".25" stop-color="#ff6568"/><stop offset=".375" stop-color="#ff4448"/><stop offset=".5" stop-color="#ff2e32"/><stop offset=".75" stop-color="#ff1116"/><stop offset="1" stop-color="#ff0005"/></linearGradient><linearGradient id="c182" gradientUnits="userSpaceOnUse" x1="1438.0" y1="521.9" x2="1722.2" y2="523.8"><stop offset="0" stop-color="#ffffff"/><stop offset=".125" stop-color="#ff999a"/><stop offset=".25" stop-color="#ff6465"/><stop offset=".375" stop-color="#ff4345"/><stop offset=".5" stop-color="#ff2d2f"/><stop offset=".75" stop-color="#ff1113"/><stop offset="1" stop-color="#ff0002"/></linearGradient><linearGradient id="c183" gradientUnits="userSpaceOnUse" x1="1438.0" y1="521.9" x2="1727.5" y2="521.6"><stop offset="0" stop-color="#ffffff"/><stop offset=".125" stop-color="#ff9999"/><stop offset=".25" stop-color="#ff6363"/><stop offset=".375" stop-color="#ff4343"/><stop offset=".5" stop-color="#ff2d2d"/><stop offset=".75" stop-color="#ff1111"/><stop offset="1" stop-color="#ff0000"/></linearGradient><linearGradient id="c184" gradientUnits="userSpaceOnUse" x1="1438.0" y1="521.9" x2="1725.7" y2="519.7"><stop offset="0" stop-color="#ffffff"/><stop offset=".125" stop-color="#ff9999"/><stop offset=".25" stop-color="#ff6464"/><stop offset=".375" stop-color="#ff4443"/><stop offset=".5" stop-color="#ff2e2d"/><stop offset=".75" stop-color="#ff1211"/><stop offset="1" stop-color="#ff0100"/></linearGradient><linearGradient id="c185" gradientUnits="userSpaceOnUse" x1="1438.0" y1="521.9" x2="1720.1" y2="516.3"><stop offset="0" stop-color="#ffffff"/><stop offset=".125" stop-color="#ff9c9a"/><stop offset=".25" stop-color="#ff6765"/><stop offset=".375" stop-color="#ff4744"/><stop offset=".5" stop-color="#ff312e"/><stop offset=".75" stop-color="#ff1511"/><stop offset="1" stop-color="#ff0400"/></linearGradient><linearGradient id="c186" gradientUnits="userSpaceOnUse" x1="1438.0" y1="521.9" x2="1714.2" y2="512.8"><stop offset="0" stop-color="#ffffff"/><stop offset=".125" stop-color="#ff9e9b"/><stop offset=".25" stop-color="#ff6a66"/><stop offset=".375" stop-color="#ff4a45"/><stop offset=".5" stop-color="#ff342e"/><stop offset=".75" stop-color="#ff1812"/><stop offset="1" stop-color="#ff0700"/></linearGradient><linearGradient id="c187" gradientUnits="userSpaceOnUse" x1="1438.0" y1="521.9" x2="1708.6" y2="509.4"><stop offset="0" stop-color="#ffffff"/><stop offset=".125" stop-color="#ffa09d"/><stop offset=".25" stop-color="#ff6d67"/><stop offset=".375" stop-color="#ff4d46"/><stop offset=".5" stop-color="#ff372f"/><stop offset=".75" stop-color="#ff1b12"/><stop offset="1" stop-color="#ff0a00"/></linearGradient><linearGradient id="c188" gradientUnits="userSpaceOnUse" x1="1438.0" y1="521.9" x2="1703.2" y2="506.1"><stop offset="0" stop-color="#ffffff"/><stop offset=".125" stop-color="#ffa39e"/><stop offset=".25" stop-color="#ff7069"/><stop offset=".375" stop-color="#ff5047"/><stop offset=".5" stop-color="#ff3a30"/><stop offset=".75" stop-color="#ff1e12"/><stop offset="1" stop-color="#ff0d00"/></linearGradient><linearGradient id="c189" gradientUnits="userSpaceOnUse" x1="1438.0" y1="521.9" x2="1697.9" y2="502.9"><stop offset="0" stop-color="#ffffff"/><stop offset=".125" stop-color="#ffa59f"/><stop offset=".25" stop-color="#ff736a"/><stop offset=".375" stop-color="#ff5348"/><stop offset=".5" stop-color="#ff3d31"/><stop offset=".75" stop-color="#ff2113"/><stop offset="1" stop-color="#ff1000"/></linearGradient><linearGradient id="c190" gradientUnits="userSpaceOnUse" x1="1438.0" y1="521.9" x2="1692.9" y2="499.9"><stop offset="0" stop-color="#ffffff"/><stop offset=".125" stop-color="#ffa7a0"/><stop offset=".25" stop-color="#ff766b"/><stop offset=".375" stop-color="#ff5649"/><stop offset=".5" stop-color="#ff4031"/><stop offset=".75" stop-color="#ff2413"/><stop offset="1" stop-color="#ff1200"/></linearGradient><linearGradient id="c191" gradientUnits="userSpaceOnUse" x1="1438.0" y1="521.9" x2="1688.0" y2="496.9"><stop offset="0" stop-color="#ffffff"/><stop offset=".125" stop-color="#ffa9a1"/><stop offset=".25" stop-color="#ff786c"/><stop offset=".375" stop-color="#ff594a"/><stop offset=".5" stop-color="#ff4332"/><stop offset=".75" stop-color="#ff2713"/><stop offset="1" stop-color="#ff1500"/></linearGradient><linearGradient id="c192" gradientUnits="userSpaceOnUse" x1="1438.0" y1="521.9" x2="1683.3" y2="494.1"><stop offset="0" stop-color="#ffffff"/><stop offset=".125" stop-color="#ffaba2"/><stop offset=".25" stop-color="#ff7b6d"/><stop offset=".375" stop-color="#ff5c4b"/><stop offset=".5" stop-color="#ff4633"/><stop offset=".75" stop-color="#ff2a14"/><stop offset="1" stop-color="#ff1800"/></linearGradient><linearGradient id="c193" gradientUnits="userSpaceOnUse" x1="1438.0" y1="521.9" x2="1678.7" y2="491.3"><stop offset="0" stop-color="#ffffff"/><stop offset=".125" stop-color="#ffada3"/><stop offset=".25" stop-color="#ff7e6e"/><stop offset=".375" stop-color="#ff5f4c"/><stop offset=".5" stop-color="#ff4934"/><stop offset=".75" stop-color="#ff2d14"/><stop offset="1" stop-color="#ff1b00"/></linearGradient><linearGradient id="c194" gradientUnits="userSpaceOnUse" x1="1438.0" y1="521.9" x2="1674.3" y2="488.7"><stop offset="0" stop-color="#ffffff"/><stop offset=".125" stop-color="#ffafa4"/><stop offset=".25" stop-color="#ff806f"/><stop offset=".375" stop-color="#ff624d"/><stop offset=".5" stop-color="#ff4c34"/><stop offset=".75" stop-color="#ff3014"/><stop offset="1" stop-color="#ff1e00"/></linearGradient><linearGradient id="c195" gradientUnits="userSpaceOnUse" x1="1438.0" y1="521.9" x2="1670.0" y2="486.1"><stop offset="0" stop-color="#ffffff"/><stop offset=".125" stop-color="#ffb1a5"/><stop offset=".25" stop-color="#ff8370"/><stop offset=".375" stop-color="#ff654e"/><stop offset=".5" stop-color="#ff4f35"/><stop offset=".75" stop-color="#ff3315"/><stop offset="1" stop-color="#ff2100"/></linearGradient><linearGradient id="c196" gradientUnits="userSpaceOnUse" x1="1438.0" y1="521.9" x2="1665.8" y2="483.6"><stop offset="0" stop-color="#ffffff"/><stop offset=".125" stop-color="#ffb3a6"/><stop offset=".25" stop-color="#ff8672"/><stop offset=".375" stop-color="#ff684f"/><stop offset=".5" stop-color="#ff5236"/><stop offset=".75" stop-color="#ff3615"/><stop offset="1" stop-color="#ff2400"/></linearGradient><linearGradient id="c197" gradientUnits="userSpaceOnUse" x1="1438.0" y1="521.9" x2="1661.8" y2="481.1"><stop offset="0" stop-color="#ffffff"/><stop offset=".125" stop-color="#ffb5a7"/><stop offset=".25" stop-color="#ff8873"/><stop offset=".375" stop-color="#ff6a50"/><stop offset=".5" stop-color="#ff5537"/><stop offset=".75" stop-color="#ff3915"/><stop offset="1" stop-color="#ff2700"/></linearGradient><linearGradient id="c198" gradientUnits="userSpaceOnUse" x1="1438.0" y1="521.9" x2="1657.8" y2="478.8"><stop offset="0" stop-color="#ffffff"/><stop offset=".125" stop-color="#ffb7a8"/><stop offset=".25" stop-color="#ff8b74"/><stop offset=".375" stop-color="#ff6d51"/><stop offset=".5" stop-color="#ff5837"/><stop offset=".75" stop-color="#ff3c16"/><stop offset="1" stop-color="#ff2a00"/></linearGradient><linearGradient id="c199" gradientUnits="userSpaceOnUse" x1="1438.0" y1="521.9" x2="1654.0" y2="476.5"><stop offset="0" stop-color="#ffffff"/><stop offset=".125" stop-color="#ffb8a9"/><stop offset=".25" stop-color="#ff8d75"/><stop offset=".375" stop-color="#ff7051"/><stop offset=".5" stop-color="#ff5b38"/><stop offset=".75" stop-color="#ff3f16"/><stop offset="1" stop-color="#ff2d00"/></linearGradient><linearGradient id="c200" gradientUnits="userSpaceOnUse" x1="1438.0" y1="521.9" x2="1650.3" y2="474.2"><stop offset="0" stop-color="#ffffff"/><stop offset=".125" stop-color="#ffbaaa"/><stop offset=".25" stop-color="#ff9076"/><stop offset=".375" stop-color="#ff7352"/><stop offset=".5" stop-color="#ff5e39"/><stop offset=".75" stop-color="#ff4216"/><stop offset="1" stop-color="#ff3000"/></linearGradient><linearGradient id="c201" gradientUnits="userSpaceOnUse" x1="1438.0" y1="521.9" x2="1646.6" y2="472.0"><stop offset="0" stop-color="#ffffff"/><stop offset=".125" stop-color="#ffbcab"/><stop offset=".25" stop-color="#ff9277"/><stop offset=".375" stop-color="#ff7653"/><stop offset=".5" stop-color="#ff613a"/><stop offset=".75" stop-color="#ff4517"/><stop offset="1" stop-color="#ff3300"/></linearGradient><linearGradient id="c202" gradientUnits="userSpaceOnUse" x1="1438.0" y1="521.9" x2="1643.1" y2="469.8"><stop offset="0" stop-color="#ffffff"/><stop offset=".125" stop-color="#ffbeac"/><stop offset=".25" stop-color="#ff9578"/><stop offset=".375" stop-color="#ff7954"/><stop offset=".5" stop-color="#ff643a"/><stop offset=".75" stop-color="#ff4817"/><stop offset="1" stop-color="#ff3600"/></linearGradient><linearGradient id="c203" gradientUnits="userSpaceOnUse" x1="1438.0" y1="521.9" x2="1639.6" y2="467.7"><stop offset="0" stop-color="#ffffff"/><stop offset=".125" stop-color="#ffbfad"/><stop offset=".25" stop-color="#ff9779"/><stop offset=".375" stop-color="#ff7b55"/><stop offset=".5" stop-color="#ff673b"/><stop offset=".75" stop-color="#ff4c17"/><stop offset="1" stop-color="#ff3a00"/></linearGradient><linearGradient id="c204" gradientUnits="userSpaceOnUse" x1="1438.0" y1="521.9" x2="1636.2" y2="465.7"><stop offset="0" stop-color="#ffffff"/><stop offset=".125" stop-color="#ffc1ae"/><stop offset=".25" stop-color="#ff9a7a"/><stop offset=".375" stop-color="#ff7e56"/><stop offset=".5" stop-color="#ff6a3c"/><stop offset=".75" stop-color="#ff4f18"/><stop offset="1" stop-color="#ff3d00"/></linearGradient><linearGradient id="c205" gradientUnits="userSpaceOnUse" x1="1438.0" y1="521.9" x2="1632.8" y2="463.7"><stop offset="0" stop-color="#ffffff"/><stop offset=".125" stop-color="#ffc3af"/><stop offset=".25" stop-color="#ff9c7b"/><stop offset=".375" stop-color="#ff8157"/><stop offset=".5" stop-color="#ff6d3c"/><stop offset=".75" stop-color="#ff5218"/><stop offset="1" stop-color="#ff4000"/></linearGradient><linearGradient id="c206" gradientUnits="userSpaceOnUse" x1="1438.0" y1="521.9" x2="1629.5" y2="461.7"><stop offset="0" stop-color="#ffffff"/><stop offset=".125" stop-color="#ffc4b0"/><stop offset=".25" stop-color="#ff9f7c"/><stop offset=".375" stop-color="#ff8458"/><stop offset=".5" stop-color="#ff703d"/><stop offset=".75" stop-color="#ff5518"/><stop offset="1" stop-color="#ff4300"/></linearGradient><linearGradient id="c207" gradientUnits="userSpaceOnUse" x1="1438.0" y1="521.9" x2="1626.3" y2="459.8"><stop offset="0" stop-color="#ffffff"/><stop offset=".125" stop-color="#ffc6b0"/><stop offset=".25" stop-color="#ffa17d"/><stop offset=".375" stop-color="#ff8759"/><stop offset=".5" stop-color="#ff733e"/><stop offset=".75" stop-color="#ff5819"/><stop offset="1" stop-color="#ff4700"/></linearGradient><linearGradient id="c208" gradientUnits="userSpaceOnUse" x1="1438.0" y1="521.9" x2="1623.2" y2="457.9"><stop offset="0" stop-color="#ffffff"/><stop offset=".125" stop-color="#ffc8b1"/><stop offset=".25" stop-color="#ffa37e"/><stop offset=".375" stop-color="#ff8a5a"/><stop offset=".5" stop-color="#ff763f"/><stop offset=".75" stop-color="#ff5c19"/><stop offset="1" stop-color="#ff4a00"/></linearGradient><linearGradient id="c209" gradientUnits="userSpaceOnUse" x1="1438.0" y1="521.9" x2="1620.1" y2="456.0"><stop offset="0" stop-color="#ffffff"/><stop offset=".125" stop-color="#ffc9b2"/><stop offset=".25" stop-color="#ffa67f"/><stop offset=".375" stop-color="#ff8c5b"/><stop offset=".5" stop-color="#ff793f"/><stop offset=".75" stop-color="#ff5f19"/><stop offset="1" stop-color="#ff4d00"/></linearGradient><linearGradient id="c210" gradientUnits="userSpaceOnUse" x1="1438.0" y1="521.9" x2="1617.0" y2="454.2"><stop offset="0" stop-color="#ffffff"/><stop offset=".125" stop-color="#ffcbb3"/><stop offset=".25" stop-color="#ffa880"/><stop offset=".375" stop-color="#ff8f5c"/><stop offset=".5" stop-color="#ff7d40"/><stop offset=".75" stop-color="#ff621a"/><stop offset="1" stop-color="#ff5100"/></linearGradient><linearGradient id="c211" gradientUnits="userSpaceOnUse" x1="1438.0" y1="521.9" x2="1614.0" y2="452.4"><stop offset="0" stop-color="#ffffff"/><stop offset=".125" stop-color="#ffcdb4"/><stop offset=".25" stop-color="#ffab81"/><stop offset=".375" stop-color="#ff925d"/><stop offset=".5" stop-color="#ff8041"/><stop offset=".75" stop-color="#ff661a"/><stop offset="1" stop-color="#ff5400"/></linearGradient><linearGradient id="c212" gradientUnits="userSpaceOnUse" x1="1438.0" y1="521.9" x2="1611.1" y2="450.6"><stop offset="0" stop-color="#ffffff"/><stop offset=".125" stop-color="#ffceb5"/><stop offset=".25" stop-color="#ffad82"/><stop offset=".375" stop-color="#ff955d"/><stop offset=".625" stop-color="#ff752c"/><stop offset=".875" stop-color="#ff600c"/><stop offset="1" stop-color="#ff5800"/></linearGradient><linearGradient id="c213" gradientUnits="userSpaceOnUse" x1="1438.0" y1="521.9" x2="1608.2" y2="448.8"><stop offset="0" stop-color="#ffffff"/><stop offset=".125" stop-color="#ffd0b6"/><stop offset=".25" stop-color="#ffaf83"/><stop offset=".375" stop-color="#ff985e"/><stop offset=".625" stop-color="#ff782d"/><stop offset=".875" stop-color="#ff630c"/><stop offset="1" stop-color="#ff5b00"/></linearGradient><linearGradient id="c214" gradientUnits="userSpaceOnUse" x1="1438.0" y1="521.9" x2="1605.3" y2="447.1"><stop offset="0" stop-color="#ffffff"/><stop offset=".125" stop-color="#ffd1b6"/><stop offset=".25" stop-color="#ffb284"/><stop offset=".375" stop-color="#ff9b5f"/><stop offset=".5" stop-color="#ff8943"/><stop offset=".75" stop-color="#ff701b"/><stop offset="1" stop-color="#ff5f00"/></linearGradient><linearGradient id="c215" gradientUnits="userSpaceOnUse" x1="1438.0" y1="521.9" x2="1602.5" y2="445.4"><stop offset="0" stop-color="#ffffff"/><stop offset=".125" stop-color="#ffd3b7"/><stop offset=".25" stop-color="#ffb485"/><stop offset=".375" stop-color="#ff9e60"/><stop offset=".5" stop-color="#ff8c44"/><stop offset=".75" stop-color="#ff741c"/><stop offset="1" stop-color="#ff6300"/></linearGradient><linearGradient id="c216" gradientUnits="userSpaceOnUse" x1="1438.0" y1="521.9" x2="1599.7" y2="443.7"><stop offset="0" stop-color="#ffffff"/><stop offset=".125" stop-color="#ffd5b8"/><stop offset=".25" stop-color="#ffb786"/><stop offset=".375" stop-color="#ffa161"/><stop offset=".625" stop-color="#ff822e"/><stop offset="1" stop-color="#ff6700"/></linearGradient><linearGradient id="c217" gradientUnits="userSpaceOnUse" x1="1438.0" y1="521.9" x2="1597.0" y2="442.1"><stop offset="0" stop-color="#ffffff"/><stop offset=".125" stop-color="#ffd6b9"/><stop offset=".25" stop-color="#ffb987"/><stop offset=".375" stop-color="#ffa462"/><stop offset=".625" stop-color="#ff862f"/><stop offset=".875" stop-color="#ff720d"/><stop offset="1" stop-color="#ff6a00"/></linearGradient><linearGradient id="c218" gradientUnits="userSpaceOnUse" x1="1438.0" y1="521.9" x2="1594.2" y2="440.4"><stop offset="0" stop-color="#ffffff"/><stop offset=".125" stop-color="#ffd8ba"/><stop offset=".25" stop-color="#ffbc88"/><stop offset=".375" stop-color="#ffa763"/><stop offset=".625" stop-color="#ff8930"/><stop offset=".875" stop-color="#ff760d"/><stop offset="1" stop-color="#ff6e00"/></linearGradient><linearGradient id="c219" gradientUnits="userSpaceOnUse" x1="1438.0" y1="521.9" x2="1591.5" y2="438.8"><stop offset="0" stop-color="#ffffff"/><stop offset=".125" stop-color="#ffd9ba"/><stop offset=".25" stop-color="#ffbe89"/><stop offset=".375" stop-color="#ffaa64"/><stop offset=".5" stop-color="#ff9a47"/><stop offset=".75" stop-color="#ff831d"/><stop offset="1" stop-color="#ff7200"/></linearGradient><linearGradient id="c220" gradientUnits="userSpaceOnUse" x1="1438.0" y1="521.9" x2="1588.9" y2="437.2"><stop offset="0" stop-color="#ffffff"/><stop offset=".125" stop-color="#ffdbbb"/><stop offset=".25" stop-color="#ffc18a"/><stop offset=".375" stop-color="#ffad65"/><stop offset=".5" stop-color="#ff9d48"/><stop offset=".75" stop-color="#ff861e"/><stop offset="1" stop-color="#ff7700"/></linearGradient><linearGradient id="c221" gradientUnits="userSpaceOnUse" x1="1438.0" y1="521.9" x2="1586.2" y2="435.6"><stop offset="0" stop-color="#ffffff"/><stop offset=".125" stop-color="#ffdcbc"/><stop offset=".25" stop-color="#ffc38b"/><stop offset=".375" stop-color="#ffb066"/><stop offset=".5" stop-color="#ffa149"/><stop offset=".75" stop-color="#ff8a1e"/><stop offset="1" stop-color="#ff7b00"/></linearGradient><linearGradient id="c222" gradientUnits="userSpaceOnUse" x1="1438.0" y1="521.9" x2="1583.6" y2="434.0"><stop offset="0" stop-color="#ffffff"/><stop offset=".125" stop-color="#ffdebd"/><stop offset=".25" stop-color="#ffc68c"/><stop offset=".375" stop-color="#ffb367"/><stop offset=".625" stop-color="#ff9832"/><stop offset=".875" stop-color="#ff860e"/><stop offset="1" stop-color="#ff7f00"/></linearGradient><linearGradient id="c223" gradientUnits="userSpaceOnUse" x1="1438.0" y1="521.9" x2="1581.0" y2="432.5"><stop offset="0" stop-color="#ffffff"/><stop offset=".125" stop-color="#ffdfbe"/><stop offset=".25" stop-color="#ffc88d"/><stop offset=".375" stop-color="#ffb668"/><stop offset=".625" stop-color="#ff9c33"/><stop offset=".875" stop-color="#ff8b0e"/><stop offset="1" stop-color="#ff8400"/></linearGradient><linearGradient id="c224" gradientUnits="userSpaceOnUse" x1="1438.0" y1="521.9" x2="1578.4" y2="430.9"><stop offset="0" stop-color="#ffffff"/><stop offset=".125" stop-color="#ffe1bf"/><stop offset=".25" stop-color="#ffcb8e"/><stop offset=".375" stop-color="#ffb969"/><stop offset=".625" stop-color="#ffa034"/><stop offset="1" stop-color="#ff8800"/></linearGradient><linearGradient id="c225" gradientUnits="userSpaceOnUse" x1="1438.0" y1="521.9" x2="1575.9" y2="429.4"><stop offset="0" stop-color="#ffffff"/><stop offset=".125" stop-color="#ffe3bf"/><stop offset=".25" stop-color="#ffcd90"/><stop offset=".375" stop-color="#ffbd6a"/><stop offset=".625" stop-color="#ffa434"/><stop offset="1" stop-color="#ff8d00"/></linearGradient><linearGradient id="c226" gradientUnits="userSpaceOnUse" x1="1438.0" y1="521.9" x2="1573.3" y2="427.8"><stop offset="0" stop-color="#ffffff"/><stop offset=".125" stop-color="#ffe4c0"/><stop offset=".25" stop-color="#ffd091"/><stop offset=".375" stop-color="#ffc06b"/><stop offset=".625" stop-color="#ffa935"/><stop offset=".875" stop-color="#ff980f"/><stop offset="1" stop-color="#ff9200"/></linearGradient><linearGradient id="c227" gradientUnits="userSpaceOnUse" x1="1438.0" y1="521.9" x2="1570.8" y2="426.3"><stop offset="0" stop-color="#ffffff"/><stop offset=".125" stop-color="#ffe6c1"/><stop offset=".25" stop-color="#ffd292"/><stop offset=".375" stop-color="#ffc36d"/><stop offset=".5" stop-color="#ffb74e"/><stop offset=".75" stop-color="#ffa421"/><stop offset="1" stop-color="#ff9700"/></linearGradient><linearGradient id="c228" gradientUnits="userSpaceOnUse" x1="1438.0" y1="521.9" x2="1568.3" y2="424.8"><stop offset="0" stop-color="#ffffff"/><stop offset=".125" stop-color="#ffe7c2"/><stop offset=".25" stop-color="#ffd593"/><stop offset=".375" stop-color="#ffc76e"/><stop offset=".5" stop-color="#ffbb4f"/><stop offset=".75" stop-color="#ffa921"/><stop offset="1" stop-color="#ff9c00"/></linearGradient><linearGradient id="c229" gradientUnits="userSpaceOnUse" x1="1438.0" y1="521.9" x2="1565.8" y2="423.3"><stop offset="0" stop-color="#ffffff"/><stop offset=".125" stop-color="#ffe9c3"/><stop offset=".25" stop-color="#ffd894"/><stop offset=".375" stop-color="#ffca6f"/><stop offset=".5" stop-color="#ffbf50"/><stop offset=".75" stop-color="#ffae22"/><stop offset="1" stop-color="#ffa100"/></linearGradient><linearGradient id="c230" gradientUnits="userSpaceOnUse" x1="1438.0" y1="521.9" x2="1563.3" y2="421.8"><stop offset="0" stop-color="#ffffff"/><stop offset=".125" stop-color="#ffeac3"/><stop offset=".25" stop-color="#ffda95"/><stop offset=".375" stop-color="#ffcd70"/><stop offset=".5" stop-color="#ffc351"/><stop offset=".75" stop-color="#ffb323"/><stop offset="1" stop-color="#ffa700"/></linearGradient><linearGradient id="c231" gradientUnits="userSpaceOnUse" x1="1438.0" y1="521.9" x2="1560.8" y2="420.3"><stop offset="0" stop-color="#ffffff"/><stop offset=".125" stop-color="#ffecc4"/><stop offset=".25" stop-color="#ffdd96"/><stop offset=".375" stop-color="#ffd171"/><stop offset=".5" stop-color="#ffc752"/><stop offset=".75" stop-color="#ffb823"/><stop offset="1" stop-color="#ffac00"/></linearGradient><linearGradient id="c232" gradientUnits="userSpaceOnUse" x1="1438.0" y1="521.9" x2="1558.3" y2="418.8"><stop offset="0" stop-color="#ffffff"/><stop offset=".125" stop-color="#ffeec5"/><stop offset=".25" stop-color="#ffe097"/><stop offset=".375" stop-color="#ffd572"/><stop offset=".5" stop-color="#ffcb53"/><stop offset=".75" stop-color="#ffbd24"/><stop offset="1" stop-color="#ffb200"/></linearGradient><linearGradient id="c233" gradientUnits="userSpaceOnUse" x1="1438.0" y1="521.9" x2="1555.8" y2="417.3"><stop offset="0" stop-color="#ffffff"/><stop offset=".125" stop-color="#ffefc6"/><stop offset=".25" stop-color="#ffe399"/><stop offset=".375" stop-color="#ffd873"/><stop offset=".625" stop-color="#ffc93b"/><stop offset=".875" stop-color="#ffbd11"/><stop offset="1" stop-color="#ffb800"/></linearGradient><linearGradient id="c234" gradientUnits="userSpaceOnUse" x1="1438.0" y1="521.9" x2="1553.3" y2="415.8"><stop offset="0" stop-color="#ffffff"/><stop offset=".125" stop-color="#fff1c7"/><stop offset=".25" stop-color="#ffe59a"/><stop offset=".375" stop-color="#ffdc75"/><stop offset=".625" stop-color="#ffce3b"/><stop offset=".875" stop-color="#ffc311"/><stop offset="1" stop-color="#ffbf00"/></linearGradient><linearGradient id="c235" gradientUnits="userSpaceOnUse" x1="1438.0" y1="521.9" x2="1550.8" y2="414.3"><stop offset="0" stop-color="#ffffff"/><stop offset=".125" stop-color="#fff3c8"/><stop offset=".25" stop-color="#ffe89b"/><stop offset=".375" stop-color="#ffe076"/><stop offset=".625" stop-color="#ffd33c"/><stop offset="1" stop-color="#ffc500"/></linearGradient><linearGradient id="c236" gradientUnits="userSpaceOnUse" x1="1438.0" y1="521.9" x2="1548.4" y2="412.8"><stop offset="0" stop-color="#ffffff"/><stop offset=".125" stop-color="#fff4c9"/><stop offset=".25" stop-color="#ffeb9c"/><stop offset=".375" stop-color="#ffe477"/><stop offset=".625" stop-color="#ffd83d"/><stop offset="1" stop-color="#ffcc00"/></linearGradient><linearGradient id="c237" gradientUnits="userSpaceOnUse" x1="1438.0" y1="521.9" x2="1545.9" y2="411.3"><stop offset="0" stop-color="#ffffff"/><stop offset=".125" stop-color="#fff6c9"/><stop offset=".25" stop-color="#ffee9d"/><stop offset=".375" stop-color="#ffe878"/><stop offset=".625" stop-color="#ffde3e"/><stop offset=".875" stop-color="#ffd612"/><stop offset="1" stop-color="#ffd300"/></linearGradient><linearGradient id="c238" gradientUnits="userSpaceOnUse" x1="1438.0" y1="521.9" x2="1543.4" y2="409.8"><stop offset="0" stop-color="#ffffff"/><stop offset=".125" stop-color="#fff8ca"/><stop offset=".25" stop-color="#fff19f"/><stop offset=".5" stop-color="#ffe85a"/><stop offset=".75" stop-color="#ffe027"/><stop offset="1" stop-color="#ffdb00"/></linearGradient><linearGradient id="c239" gradientUnits="userSpaceOnUse" x1="1438.0" y1="521.9" x2="1540.9" y2="408.3"><stop offset="0" stop-color="#ffffff"/><stop offset=".125" stop-color="#fff9cb"/><stop offset=".25" stop-color="#fff4a0"/><stop offset=".375" stop-color="#fff07b"/><stop offset=".625" stop-color="#ffea40"/><stop offset="1" stop-color="#ffe200"/></linearGradient><linearGradient id="c240" gradientUnits="userSpaceOnUse" x1="1438.0" y1="521.9" x2="1538.4" y2="406.8"><stop offset="0" stop-color="#ffffff"/><stop offset=".125" stop-color="#fffbcc"/><stop offset=".25" stop-color="#fff7a1"/><stop offset=".5" stop-color="#fff25d"/><stop offset=".75" stop-color="#ffee29"/><stop offset="1" stop-color="#ffea00"/></linearGradient><linearGradient id="c241" gradientUnits="userSpaceOnUse" x1="1438.0" y1="521.9" x2="1535.9" y2="405.3"><stop offset="0" stop-color="#ffffff"/><stop offset=".125" stop-color="#fffdcd"/><stop offset=".375" stop-color="#fff97e"/><stop offset=".625" stop-color="#fff642"/><stop offset="1" stop-color="#fff300"/></linearGradient><linearGradient id="c242" gradientUnits="userSpaceOnUse" x1="1438.0" y1="521.9" x2="1533.6" y2="403.9"><stop offset="0" stop-color="#ffffff"/><stop offset=".125" stop-color="#fffece"/><stop offset=".375" stop-color="#fffd7f"/><stop offset=".625" stop-color="#fffc43"/><stop offset="1" stop-color="#fffb00"/></linearGradient><linearGradient id="c243" gradientUnits="userSpaceOnUse" x1="1438.0" y1="521.9" x2="1532.4" y2="403.1"><stop offset="0" stop-color="#ffffff"/><stop offset=".125" stop-color="#ffffce"/><stop offset=".25" stop-color="#ffffa4"/><stop offset=".5" stop-color="#feff60"/><stop offset=".875" stop-color="#feff14"/><stop offset="1" stop-color="#feff00"/></linearGradient><linearGradient id="c244" gradientUnits="userSpaceOnUse" x1="1438.0" y1="521.9" x2="1530.9" y2="402.2"><stop offset="0" stop-color="#ffffff"/><stop offset=".125" stop-color="#feffce"/><stop offset=".375" stop-color="#fcff7f"/><stop offset=".625" stop-color="#faff43"/><stop offset="1" stop-color="#f9ff00"/></linearGradient><linearGradient id="c245" gradientUnits="userSpaceOnUse" x1="1438.0" y1="521.9" x2="1528.4" y2="400.7"><stop offset="0" stop-color="#ffffff"/><stop offset=".125" stop-color="#fcffcd"/><stop offset=".25" stop-color="#f9ffa3"/><stop offset=".5" stop-color="#f5ff5f"/><stop offset=".75" stop-color="#f2ff2a"/><stop offset="1" stop-color="#f0ff00"/></linearGradient><linearGradient id="c246" gradientUnits="userSpaceOnUse" x1="1438.0" y1="521.9" x2="1525.8" y2="399.2"><stop offset="0" stop-color="#ffffff"/><stop offset=".125" stop-color="#faffcd"/><stop offset=".25" stop-color="#f6ffa2"/><stop offset=".5" stop-color="#f0ff5e"/><stop offset=".75" stop-color="#ebff2a"/><stop offset="1" stop-color="#e7ff00"/></linearGradient><linearGradient id="c247" gradientUnits="userSpaceOnUse" x1="1438.0" y1="521.9" x2="1523.3" y2="397.6"><stop offset="0" stop-color="#ffffff"/><stop offset=".125" stop-color="#f8ffcc"/><stop offset=".375" stop-color="#eeff7d"/><stop offset=".625" stop-color="#e6ff42"/><stop offset=".875" stop-color="#e0ff13"/><stop offset="1" stop-color="#deff00"/></linearGradient><linearGradient id="c248" gradientUnits="userSpaceOnUse" x1="1438.0" y1="521.9" x2="1520.7" y2="396.1"><stop offset="0" stop-color="#ffffff"/><stop offset=".125" stop-color="#f7ffcc"/><stop offset=".25" stop-color="#f0ffa1"/><stop offset=".375" stop-color="#eaff7c"/><stop offset=".625" stop-color="#e0ff41"/><stop offset=".875" stop-color="#d8ff13"/><stop offset="1" stop-color="#d5ff00"/></linearGradient><linearGradient id="c249" gradientUnits="userSpaceOnUse" x1="1438.0" y1="521.9" x2="1518.1" y2="394.5"><stop offset="0" stop-color="#ffffff"/><stop offset=".125" stop-color="#f5ffcb"/><stop offset=".25" stop-color="#ecffa0"/><stop offset=".375" stop-color="#e5ff7b"/><stop offset=".625" stop-color="#daff40"/><stop offset="1" stop-color="#cdff00"/></linearGradient><linearGradient id="c250" gradientUnits="userSpaceOnUse" x1="1438.0" y1="521.9" x2="1515.5" y2="392.9"><stop offset="0" stop-color="#ffffff"/><stop offset=".125" stop-color="#f3ffcb"/><stop offset=".25" stop-color="#e9ff9f"/><stop offset=".5" stop-color="#d9ff5b"/><stop offset=".75" stop-color="#ceff28"/><stop offset="1" stop-color="#c5ff00"/></linearGradient><linearGradient id="c251" gradientUnits="userSpaceOnUse" x1="1438.0" y1="521.9" x2="1512.8" y2="391.4"><stop offset="0" stop-color="#ffffff"/><stop offset=".125" stop-color="#f1ffca"/><stop offset=".25" stop-color="#e6ff9f"/><stop offset=".5" stop-color="#d4ff5a"/><stop offset=".75" stop-color="#c7ff28"/><stop offset="1" stop-color="#bcff00"/></linearGradient><linearGradient id="c252" gradientUnits="userSpaceOnUse" x1="1438.0" y1="521.9" x2="1510.2" y2="389.7"><stop offset="0" stop-color="#ffffff"/><stop offset=".125" stop-color="#efffca"/><stop offset=".25" stop-color="#e3ff9e"/><stop offset=".375" stop-color="#d8ff79"/><stop offset=".625" stop-color="#c7ff3f"/><stop offset=".875" stop-color="#baff12"/><stop offset="1" stop-color="#b4ff00"/></linearGradient><linearGradient id="c253" gradientUnits="userSpaceOnUse" x1="1438.0" y1="521.9" x2="1507.5" y2="388.1"><stop offset="0" stop-color="#ffffff"/><stop offset=".125" stop-color="#eeffc9"/><stop offset=".25" stop-color="#dfff9d"/><stop offset=".375" stop-color="#d3ff78"/><stop offset=".625" stop-color="#c0ff3e"/><stop offset=".875" stop-color="#b2ff12"/><stop offset="1" stop-color="#acff00"/></linearGradient><linearGradient id="c254" gradientUnits="userSpaceOnUse" x1="1438.0" y1="521.9" x2="1504.7" y2="386.5"><stop offset="0" stop-color="#ffffff"/><stop offset=".125" stop-color="#ecffc9"/><stop offset=".25" stop-color="#dcff9c"/><stop offset=".5" stop-color="#c4ff58"/><stop offset=".75" stop-color="#b2ff26"/><stop offset="1" stop-color="#a5ff00"/></linearGradient><linearGradient id="c255" gradientUnits="userSpaceOnUse" x1="1438.0" y1="521.9" x2="1502.0" y2="384.8"><stop offset="0" stop-color="#ffffff"/><stop offset=".125" stop-color="#eaffc8"/><stop offset=".25" stop-color="#d9ff9c"/><stop offset=".375" stop-color="#caff77"/><stop offset=".625" stop-color="#b4ff3d"/><stop offset="1" stop-color="#9dff00"/></linearGradient><linearGradient id="c256" gradientUnits="userSpaceOnUse" x1="1438.0" y1="521.9" x2="1499.2" y2="383.1"><stop offset="0" stop-color="#ffffff"/><stop offset=".125" stop-color="#e8ffc8"/><stop offset=".25" stop-color="#d5ff9b"/><stop offset=".375" stop-color="#c6ff76"/><stop offset=".625" stop-color="#aeff3c"/><stop offset="1" stop-color="#95ff00"/></linearGradient><linearGradient id="c257" gradientUnits="userSpaceOnUse" x1="1438.0" y1="521.9" x2="1496.4" y2="381.4"><stop offset="0" stop-color="#ffffff"/><stop offset=".125" stop-color="#e6ffc7"/><stop offset=".25" stop-color="#d2ff9a"/><stop offset=".375" stop-color="#c2ff75"/><stop offset=".625" stop-color="#a8ff3c"/><stop offset=".875" stop-color="#95ff11"/><stop offset="1" stop-color="#8eff00"/></linearGradient><linearGradient id="c258" gradientUnits="userSpaceOnUse" x1="1438.0" y1="521.9" x2="1493.5" y2="379.7"><stop offset="0" stop-color="#ffffff"/><stop offset=".125" stop-color="#e4ffc7"/><stop offset=".25" stop-color="#cfff99"/><stop offset=".375" stop-color="#bdff74"/><stop offset=".625" stop-color="#a2ff3b"/><stop offset=".875" stop-color="#8eff11"/><stop offset="1" stop-color="#86ff00"/></linearGradient><linearGradient id="c259" gradientUnits="userSpaceOnUse" x1="1438.0" y1="521.9" x2="1490.6" y2="378.0"><stop offset="0" stop-color="#ffffff"/><stop offset=".125" stop-color="#e2ffc6"/><stop offset=".25" stop-color="#ccff99"/><stop offset=".375" stop-color="#b9ff74"/><stop offset=".625" stop-color="#9cff3b"/><stop offset=".875" stop-color="#87ff11"/><stop offset="1" stop-color="#7fff00"/></linearGradient><linearGradient id="c260" gradientUnits="userSpaceOnUse" x1="1438.0" y1="521.9" x2="1487.7" y2="376.2"><stop offset="0" stop-color="#ffffff"/><stop offset=".125" stop-color="#e0ffc6"/><stop offset=".25" stop-color="#c8ff98"/><stop offset=".375" stop-color="#b4ff73"/><stop offset=".625" stop-color="#96ff3a"/><stop offset="1" stop-color="#77ff00"/></linearGradient><linearGradient id="c261" gradientUnits="userSpaceOnUse" x1="1438.0" y1="521.9" x2="1484.7" y2="374.4"><stop offset="0" stop-color="#ffffff"/><stop offset=".125" stop-color="#deffc5"/><stop offset=".25" stop-color="#c5ff97"/><stop offset=".375" stop-color="#b0ff72"/><stop offset=".5" stop-color="#9fff53"/><stop offset=".75" stop-color="#84ff24"/><stop offset="1" stop-color="#70ff00"/></linearGradient><linearGradient id="c262" gradientUnits="userSpaceOnUse" x1="1438.0" y1="521.9" x2="1481.7" y2="372.6"><stop offset="0" stop-color="#ffffff"/><stop offset=".125" stop-color="#ddffc4"/><stop offset=".25" stop-color="#c1ff96"/><stop offset=".375" stop-color="#acff71"/><stop offset=".625" stop-color="#8aff39"/><stop offset=".875" stop-color="#73ff10"/><stop offset="1" stop-color="#69ff00"/></linearGradient><linearGradient id="c263" gradientUnits="userSpaceOnUse" x1="1438.0" y1="521.9" x2="1478.6" y2="370.7"><stop offset="0" stop-color="#ffffff"/><stop offset=".125" stop-color="#dbffc4"/><stop offset=".25" stop-color="#beff96"/><stop offset=".375" stop-color="#a7ff71"/><stop offset=".625" stop-color="#85ff38"/><stop offset=".875" stop-color="#6cff10"/><stop offset="1" stop-color="#62ff00"/></linearGradient><linearGradient id="c264" gradientUnits="userSpaceOnUse" x1="1438.0" y1="521.9" x2="1475.4" y2="368.8"><stop offset="0" stop-color="#ffffff"/><stop offset=".125" stop-color="#d9ffc3"/><stop offset=".25" stop-color="#bbff95"/><stop offset=".375" stop-color="#a3ff70"/><stop offset=".5" stop-color="#8fff51"/><stop offset=".75" stop-color="#71ff22"/><stop offset="1" stop-color="#5bff00"/></linearGradient><linearGradient id="c265" gradientUnits="userSpaceOnUse" x1="1438.0" y1="521.9" x2="1472.2" y2="366.9"><stop offset="0" stop-color="#ffffff"/><stop offset=".125" stop-color="#d6ffc3"/><stop offset=".25" stop-color="#b7ff94"/><stop offset=".375" stop-color="#9eff6f"/><stop offset=".625" stop-color="#79ff37"/><stop offset="1" stop-color="#54ff00"/></linearGradient><linearGradient id="c266" gradientUnits="userSpaceOnUse" x1="1438.0" y1="521.9" x2="1468.9" y2="364.9"><stop offset="0" stop-color="#ffffff"/><stop offset=".125" stop-color="#d4ffc2"/><stop offset=".25" stop-color="#b4ff93"/><stop offset=".375" stop-color="#9aff6e"/><stop offset=".625" stop-color="#73ff37"/><stop offset="1" stop-color="#4dff00"/></linearGradient><linearGradient id="c267" gradientUnits="userSpaceOnUse" x1="1438.0" y1="521.9" x2="1465.6" y2="362.9"><stop offset="0" stop-color="#ffffff"/><stop offset=".125" stop-color="#d2ffc2"/><stop offset=".25" stop-color="#b0ff93"/><stop offset=".375" stop-color="#95ff6d"/><stop offset=".625" stop-color="#6dff36"/><stop offset=".875" stop-color="#51ff0f"/><stop offset="1" stop-color="#46ff00"/></linearGradient><linearGradient id="c268" gradientUnits="userSpaceOnUse" x1="1438.0" y1="521.9" x2="1462.2" y2="360.8"><stop offset="0" stop-color="#ffffff"/><stop offset=".125" stop-color="#d0ffc1"/><stop offset=".25" stop-color="#adff92"/><stop offset=".375" stop-color="#91ff6d"/><stop offset=".625" stop-color="#67ff36"/><stop offset=".875" stop-color="#4aff0f"/><stop offset="1" stop-color="#3fff00"/></linearGradient><linearGradient id="c269" gradientUnits="userSpaceOnUse" x1="1438.0" y1="521.9" x2="1458.7" y2="358.7"><stop offset="0" stop-color="#ffffff"/><stop offset=".125" stop-color="#ceffc0"/><stop offset=".25" stop-color="#a9ff91"/><stop offset=".375" stop-color="#8cff6c"/><stop offset=".625" stop-color="#61ff35"/><stop offset=".875" stop-color="#44ff0f"/><stop offset="1" stop-color="#38ff00"/></linearGradient><linearGradient id="c270" gradientUnits="userSpaceOnUse" x1="1438.0" y1="521.9" x2="1455.2" y2="356.6"><stop offset="0" stop-color="#ffffff"/><stop offset=".125" stop-color="#ccffc0"/><stop offset=".25" stop-color="#a5ff90"/><stop offset=".375" stop-color="#87ff6b"/><stop offset=".5" stop-color="#6fff4d"/><stop offset=".75" stop-color="#4bff20"/><stop offset="1" stop-color="#31ff00"/></linearGradient><linearGradient id="c271" gradientUnits="userSpaceOnUse" x1="1438.0" y1="521.9" x2="1451.5" y2="354.4"><stop offset="0" stop-color="#ffffff"/><stop offset=".125" stop-color="#caffbf"/><stop offset=".25" stop-color="#a2ff8f"/><stop offset=".375" stop-color="#83ff6a"/><stop offset=".5" stop-color="#6aff4c"/><stop offset=".75" stop-color="#45ff20"/><stop offset="1" stop-color="#2aff00"/></linearGradient><linearGradient id="c272" gradientUnits="userSpaceOnUse" x1="1438.0" y1="521.9" x2="1447.8" y2="352.2"><stop offset="0" stop-color="#ffffff"/><stop offset=".125" stop-color="#c7ffbe"/><stop offset=".25" stop-color="#9eff8e"/><stop offset=".375" stop-color="#7eff69"/><stop offset=".625" stop-color="#50ff34"/><stop offset="1" stop-color="#23ff00"/></linearGradient><linearGradient id="c273" gradientUnits="userSpaceOnUse" x1="1438.0" y1="521.9" x2="1444.0" y2="349.8"><stop offset="0" stop-color="#ffffff"/><stop offset=".125" stop-color="#c5ffbe"/><stop offset=".25" stop-color="#9aff8e"/><stop offset=".375" stop-color="#79ff68"/><stop offset=".625" stop-color="#4aff33"/><stop offset=".875" stop-color="#29ff0e"/><stop offset="1" stop-color="#1dff00"/></linearGradient><linearGradient id="c274" gradientUnits="userSpaceOnUse" x1="1438.0" y1="521.9" x2="1440.0" y2="347.5"><stop offset="0" stop-color="#ffffff"/><stop offset=".125" stop-color="#c3ffbd"/><stop offset=".25" stop-color="#96ff8d"/><stop offset=".375" stop-color="#74ff68"/><stop offset=".5" stop-color="#5aff4a"/><stop offset=".75" stop-color="#32ff1f"/><stop offset="1" stop-color="#16ff00"/></linearGradient><linearGradient id="c275" gradientUnits="userSpaceOnUse" x1="1438.0" y1="521.9" x2="1436.0" y2="345.0"><stop offset="0" stop-color="#ffffff"/><stop offset=".125" stop-color="#c0ffbc"/><stop offset=".25" stop-color="#93ff8c"/><stop offset=".375" stop-color="#70ff67"/><stop offset=".5" stop-color="#54ff4a"/><stop offset=".75" stop-color="#2bff1e"/><stop offset="1" stop-color="#0fff00"/></linearGradient><linearGradient id="c276" gradientUnits="userSpaceOnUse" x1="1438.0" y1="521.9" x2="1431.8" y2="342.5"><stop offset="0" stop-color="#ffffff"/><stop offset=".125" stop-color="#beffbc"/><stop offset=".25" stop-color="#8fff8b"/><stop offset=".375" stop-color="#6bff66"/><stop offset=".625" stop-color="#38ff31"/><stop offset=".875" stop-color="#15ff0e"/><stop offset="1" stop-color="#08ff00"/></linearGradient><linearGradient id="c277" gradientUnits="userSpaceOnUse" x1="1438.0" y1="521.9" x2="1428.3" y2="340.4"><stop offset="0" stop-color="#ffffff"/><stop offset=".125" stop-color="#bcffbb"/><stop offset=".25" stop-color="#8bff8a"/><stop offset=".375" stop-color="#67ff65"/><stop offset=".5" stop-color="#4aff48"/><stop offset=".75" stop-color="#20ff1e"/><stop offset="1" stop-color="#02ff00"/></linearGradient><linearGradient id="c278" gradientUnits="userSpaceOnUse" x1="1438.0" y1="521.9" x2="1426.2" y2="341.0"><stop offset="0" stop-color="#ffffff"/><stop offset=".125" stop-color="#bbffbb"/><stop offset=".25" stop-color="#8aff8b"/><stop offset=".375" stop-color="#65ff66"/><stop offset=".5" stop-color="#48ff49"/><stop offset=".75" stop-color="#1eff1f"/><stop offset="1" stop-color="#00ff01"/></linearGradient><linearGradient id="c279" gradientUnits="userSpaceOnUse" x1="1438.0" y1="521.9" x2="1424.0" y2="347.2"><stop offset="0" stop-color="#ffffff"/><stop offset=".125" stop-color="#bcffbd"/><stop offset=".25" stop-color="#8bff8e"/><stop offset=".375" stop-color="#66ff69"/><stop offset=".625" stop-color="#31ff36"/><stop offset=".875" stop-color="#0eff13"/><stop offset="1" stop-color="#00ff06"/></linearGradient><linearGradient id="c280" gradientUnits="userSpaceOnUse" x1="1438.0" y1="521.9" x2="1420.8" y2="355.8"><stop offset="0" stop-color="#ffffff"/><stop offset=".125" stop-color="#bdffc0"/><stop offset=".25" stop-color="#8dff92"/><stop offset=".375" stop-color="#68ff6f"/><stop offset=".5" stop-color="#4aff53"/><stop offset=".75" stop-color="#1fff29"/><stop offset="1" stop-color="#00ff0c"/></linearGradient><linearGradient id="c281" gradientUnits="userSpaceOnUse" x1="1438.0" y1="521.9" x2="1417.9" y2="363.6"><stop offset="0" stop-color="#ffffff"/><stop offset=".125" stop-color="#beffc3"/><stop offset=".25" stop-color="#8eff96"/><stop offset=".375" stop-color="#69ff74"/><stop offset=".5" stop-color="#4bff58"/><stop offset=".75" stop-color="#1fff2f"/><stop offset="1" stop-color="#00ff12"/></linearGradient><linearGradient id="c282" gradientUnits="userSpaceOnUse" x1="1438.0" y1="521.9" x2="1415.3" y2="370.7"><stop offset="0" stop-color="#ffffff"/><stop offset=".125" stop-color="#bfffc5"/><stop offset=".25" stop-color="#90ff9a"/><stop offset=".375" stop-color="#6aff78"/><stop offset=".625" stop-color="#34ff47"/><stop offset=".875" stop-color="#0fff25"/><stop offset="1" stop-color="#00ff18"/></linearGradient><linearGradient id="c283" gradientUnits="userSpaceOnUse" x1="1438.0" y1="521.9" x2="1412.9" y2="377.3"><stop offset="0" stop-color="#ffffff"/><stop offset=".125" stop-color="#c0ffc7"/><stop offset=".25" stop-color="#91ff9d"/><stop offset=".375" stop-color="#6cff7d"/><stop offset=".625" stop-color="#35ff4c"/><stop offset=".875" stop-color="#0fff2b"/><stop offset="1" stop-color="#00ff1d"/></linearGradient><linearGradient id="c284" gradientUnits="userSpaceOnUse" x1="1438.0" y1="521.9" x2="1410.7" y2="383.3"><stop offset="0" stop-color="#ffffff"/><stop offset=".125" stop-color="#c1ffca"/><stop offset=".25" stop-color="#92ffa1"/><stop offset=".375" stop-color="#6dff81"/><stop offset=".625" stop-color="#36ff51"/><stop offset=".875" stop-color="#0fff30"/><stop offset="1" stop-color="#00ff23"/></linearGradient><linearGradient id="c285" gradientUnits="userSpaceOnUse" x1="1438.0" y1="521.9" x2="1408.7" y2="388.9"><stop offset="0" stop-color="#ffffff"/><stop offset=".125" stop-color="#c2ffcb"/><stop offset=".25" stop-color="#93ffa4"/><stop offset=".375" stop-color="#6eff84"/><stop offset=".625" stop-color="#37ff56"/><stop offset="1" stop-color="#00ff28"/></linearGradient><linearGradient id="c286" gradientUnits="userSpaceOnUse" x1="1438.0" y1="521.9" x2="1406.8" y2="394.0"><stop offset="0" stop-color="#ffffff"/><stop offset=".125" stop-color="#c3ffcd"/><stop offset=".25" stop-color="#94ffa7"/><stop offset=".375" stop-color="#6fff88"/><stop offset=".625" stop-color="#37ff5a"/><stop offset="1" stop-color="#00ff2d"/></linearGradient><linearGradient id="c287" gradientUnits="userSpaceOnUse" x1="1438.0" y1="521.9" x2="1405.0" y2="398.8"><stop offset="0" stop-color="#ffffff"/><stop offset=".125" stop-color="#c3ffcf"/><stop offset=".25" stop-color="#95ffaa"/><stop offset=".375" stop-color="#70ff8c"/><stop offset=".5" stop-color="#51ff73"/><stop offset=".75" stop-color="#23ff4d"/><stop offset="1" stop-color="#00ff31"/></linearGradient><linearGradient id="c288" gradientUnits="userSpaceOnUse" x1="1438.0" y1="521.9" x2="1403.4" y2="403.3"><stop offset="0" stop-color="#ffffff"/><stop offset=".125" stop-color="#c4ffd1"/><stop offset=".25" stop-color="#96ffac"/><stop offset=".375" stop-color="#71ff8f"/><stop offset=".5" stop-color="#52ff77"/><stop offset=".75" stop-color="#23ff51"/><stop offset="1" stop-color="#00ff36"/></linearGradient><linearGradient id="c289" gradientUnits="userSpaceOnUse" x1="1438.0" y1="521.9" x2="1401.9" y2="407.5"><stop offset="0" stop-color="#ffffff"/><stop offset=".125" stop-color="#c5ffd2"/><stop offset=".25" stop-color="#97ffaf"/><stop offset=".375" stop-color="#72ff92"/><stop offset=".625" stop-color="#39ff66"/><stop offset=".875" stop-color="#10ff47"/><stop offset="1" stop-color="#00ff3a"/></linearGradient><linearGradient id="c290" gradientUnits="userSpaceOnUse" x1="1438.0" y1="521.9" x2="1400.4" y2="411.5"><stop offset="0" stop-color="#ffffff"/><stop offset=".125" stop-color="#c5ffd3"/><stop offset=".25" stop-color="#98ffb1"/><stop offset=".375" stop-color="#73ff95"/><stop offset=".625" stop-color="#3aff6a"/><stop offset="1" stop-color="#00ff3e"/></linearGradient><linearGradient id="c291" gradientUnits="userSpaceOnUse" x1="1438.0" y1="521.9" x2="1399.1" y2="415.2"><stop offset="0" stop-color="#ffffff"/><stop offset=".125" stop-color="#c6ffd5"/><stop offset=".25" stop-color="#98ffb3"/><stop offset=".375" stop-color="#73ff98"/><stop offset=".625" stop-color="#3aff6e"/><stop offset="1" stop-color="#00ff43"/></linearGradient><linearGradient id="c292" gradientUnits="userSpaceOnUse" x1="1438.0" y1="521.9" x2="1397.8" y2="418.7"><stop offset="0" stop-color="#ffffff"/><stop offset=".125" stop-color="#c6ffd6"/><stop offset=".25" stop-color="#99ffb5"/><stop offset=".375" stop-color="#74ff9b"/><stop offset=".625" stop-color="#3bff71"/><stop offset=".875" stop-color="#11ff53"/><stop offset="1" stop-color="#00ff46"/></linearGradient><linearGradient id="c293" gradientUnits="userSpaceOnUse" x1="1438.0" y1="521.9" x2="1396.6" y2="422.1"><stop offset="0" stop-color="#ffffff"/><stop offset=".125" stop-color="#c7ffd7"/><stop offset=".25" stop-color="#9affb7"/><stop offset=".375" stop-color="#75ff9d"/><stop offset=".625" stop-color="#3cff74"/><stop offset=".875" stop-color="#11ff57"/><stop offset="1" stop-color="#00ff4a"/></linearGradient><linearGradient id="c294" gradientUnits="userSpaceOnUse" x1="1438.0" y1="521.9" x2="1395.4" y2="425.2"><stop offset="0" stop-color="#ffffff"/><stop offset=".125" stop-color="#c7ffd8"/><stop offset=".25" stop-color="#9bffb9"/><stop offset=".375" stop-color="#76ffa0"/><stop offset=".625" stop-color="#3cff78"/><stop offset=".875" stop-color="#11ff5a"/><stop offset="1" stop-color="#00ff4e"/></linearGradient><linearGradient id="c295" gradientUnits="userSpaceOnUse" x1="1438.0" y1="521.9" x2="1394.3" y2="428.2"><stop offset="0" stop-color="#ffffff"/><stop offset=".125" stop-color="#c8ffda"/><stop offset=".25" stop-color="#9bffbb"/><stop offset=".375" stop-color="#76ffa2"/><stop offset=".625" stop-color="#3dff7b"/><stop offset="1" stop-color="#00ff52"/></linearGradient><linearGradient id="c296" gradientUnits="userSpaceOnUse" x1="1438.0" y1="521.9" x2="1393.3" y2="431.0"><stop offset="0" stop-color="#ffffff"/><stop offset=".125" stop-color="#c8ffdb"/><stop offset=".25" stop-color="#9cffbd"/><stop offset=".375" stop-color="#77ffa4"/><stop offset=".625" stop-color="#3dff7e"/><stop offset="1" stop-color="#00ff55"/></linearGradient><linearGradient id="c297" gradientUnits="userSpaceOnUse" x1="1438.0" y1="521.9" x2="1392.3" y2="433.7"><stop offset="0" stop-color="#ffffff"/><stop offset=".125" stop-color="#c9ffdc"/><stop offset=".25" stop-color="#9cffbf"/><stop offset=".5" stop-color="#58ff92"/><stop offset=".75" stop-color="#26ff71"/><stop offset="1" stop-color="#00ff58"/></linearGradient><linearGradient id="c298" gradientUnits="userSpaceOnUse" x1="1438.0" y1="521.9" x2="1391.3" y2="436.3"><stop offset="0" stop-color="#ffffff"/><stop offset=".125" stop-color="#c9ffdd"/><stop offset=".25" stop-color="#9dffc0"/><stop offset=".375" stop-color="#78ffa9"/><stop offset=".625" stop-color="#3eff83"/><stop offset=".875" stop-color="#12ff67"/><stop offset="1" stop-color="#00ff5c"/></linearGradient><linearGradient id="c299" gradientUnits="userSpaceOnUse" x1="1438.0" y1="521.9" x2="1390.4" y2="438.8"><stop offset="0" stop-color="#ffffff"/><stop offset=".125" stop-color="#caffde"/><stop offset=".25" stop-color="#9effc2"/><stop offset=".5" stop-color="#59ff97"/><stop offset=".75" stop-color="#27ff77"/><stop offset="1" stop-color="#00ff5f"/></linearGradient><linearGradient id="c300" gradientUnits="userSpaceOnUse" x1="1438.0" y1="521.9" x2="1389.6" y2="441.2"><stop offset="0" stop-color="#ffffff"/><stop offset=".125" stop-color="#caffde"/><stop offset=".25" stop-color="#9effc3"/><stop offset=".375" stop-color="#79ffad"/><stop offset=".625" stop-color="#3fff89"/><stop offset=".875" stop-color="#12ff6d"/><stop offset="1" stop-color="#00ff62"/></linearGradient><linearGradient id="c301" gradientUnits="userSpaceOnUse" x1="1438.0" y1="521.9" x2="1388.7" y2="443.4"><stop offset="0" stop-color="#ffffff"/><stop offset=".125" stop-color="#caffdf"/><stop offset=".25" stop-color="#9fffc5"/><stop offset=".5" stop-color="#5aff9c"/><stop offset=".75" stop-color="#28ff7d"/><stop offset="1" stop-color="#00ff65"/></linearGradient><linearGradient id="c302" gradientUnits="userSpaceOnUse" x1="1438.0" y1="521.9" x2="1387.9" y2="445.6"><stop offset="0" stop-color="#ffffff"/><stop offset=".125" stop-color="#cbffe0"/><stop offset=".25" stop-color="#9fffc6"/><stop offset=".375" stop-color="#7affb1"/><stop offset=".625" stop-color="#40ff8e"/><stop offset="1" stop-color="#00ff68"/></linearGradient><linearGradient id="c303" gradientUnits="userSpaceOnUse" x1="1438.0" y1="521.9" x2="1387.2" y2="447.7"><stop offset="0" stop-color="#ffffff"/><stop offset=".125" stop-color="#cbffe1"/><stop offset=".25" stop-color="#a0ffc8"/><stop offset=".5" stop-color="#5bffa0"/><stop offset=".75" stop-color="#28ff82"/><stop offset="1" stop-color="#00ff6b"/></linearGradient><linearGradient id="c304" gradientUnits="userSpaceOnUse" x1="1438.0" y1="521.9" x2="1386.4" y2="449.8"><stop offset="0" stop-color="#ffffff"/><stop offset=".125" stop-color="#cbffe2"/><stop offset=".25" stop-color="#a0ffc9"/><stop offset=".375" stop-color="#7bffb4"/><stop offset=".625" stop-color="#40ff93"/><stop offset="1" stop-color="#00ff6e"/></linearGradient><linearGradient id="c305" gradientUnits="userSpaceOnUse" x1="1438.0" y1="521.9" x2="1385.7" y2="451.7"><stop offset="0" stop-color="#ffffff"/><stop offset=".125" stop-color="#ccffe2"/><stop offset=".25" stop-color="#a1ffca"/><stop offset=".5" stop-color="#5cffa4"/><stop offset=".875" stop-color="#13ff7c"/><stop offset="1" stop-color="#00ff71"/></linearGradient><linearGradient id="c306" gradientUnits="userSpaceOnUse" x1="1438.0" y1="521.9" x2="1385.0" y2="453.6"><stop offset="0" stop-color="#ffffff"/><stop offset=".125" stop-color="#ccffe3"/><stop offset=".25" stop-color="#a1ffcc"/><stop offset=".375" stop-color="#7cffb8"/><stop offset=".625" stop-color="#41ff97"/><stop offset=".875" stop-color="#13ff7e"/><stop offset="1" stop-color="#00ff74"/></linearGradient><linearGradient id="c307" gradientUnits="userSpaceOnUse" x1="1438.0" y1="521.9" x2="1384.3" y2="455.4"><stop offset="0" stop-color="#ffffff"/><stop offset=".125" stop-color="#ccffe4"/><stop offset=".375" stop-color="#7dffb9"/><stop offset=".625" stop-color="#42ff99"/><stop offset=".875" stop-color="#13ff81"/><stop offset="1" stop-color="#00ff76"/></linearGradient><linearGradient id="c308" gradientUnits="userSpaceOnUse" x1="1438.0" y1="521.9" x2="1383.7" y2="457.2"><stop offset="0" stop-color="#ffffff"/><stop offset=".125" stop-color="#cdffe5"/><stop offset=".25" stop-color="#a2ffce"/><stop offset=".375" stop-color="#7dffbb"/><stop offset=".625" stop-color="#42ff9c"/><stop offset="1" stop-color="#00ff79"/></linearGradient><linearGradient id="c309" gradientUnits="userSpaceOnUse" x1="1438.0" y1="521.9" x2="1383.1" y2="458.9"><stop offset="0" stop-color="#ffffff"/><stop offset=".125" stop-color="#cdffe5"/><stop offset=".25" stop-color="#a2ffcf"/><stop offset=".5" stop-color="#5effac"/><stop offset=".75" stop-color="#2aff91"/><stop offset="1" stop-color="#00ff7c"/></linearGradient><linearGradient id="c310" gradientUnits="userSpaceOnUse" x1="1438.0" y1="521.9" x2="1382.5" y2="460.5"><stop offset="0" stop-color="#ffffff"/><stop offset=".125" stop-color="#cdffe6"/><stop offset=".375" stop-color="#7effbe"/><stop offset=".625" stop-color="#43ffa0"/><stop offset="1" stop-color="#00ff7e"/></linearGradient><linearGradient id="c311" gradientUnits="userSpaceOnUse" x1="1438.0" y1="521.9" x2="1381.9" y2="462.2"><stop offset="0" stop-color="#ffffff"/><stop offset=".125" stop-color="#cdffe6"/><stop offset=".25" stop-color="#a3ffd2"/><stop offset=".5" stop-color="#5fffb0"/><stop offset=".75" stop-color="#2aff96"/><stop offset="1" stop-color="#00ff81"/></linearGradient><linearGradient id="c312" gradientUnits="userSpaceOnUse" x1="1438.0" y1="521.9" x2="1381.3" y2="463.7"><stop offset="0" stop-color="#ffffff"/><stop offset=".125" stop-color="#ceffe7"/><stop offset=".375" stop-color="#7fffc1"/><stop offset=".625" stop-color="#43ffa4"/><stop offset="1" stop-color="#00ff83"/></linearGradient><linearGradient id="c313" gradientUnits="userSpaceOnUse" x1="1438.0" y1="521.9" x2="1380.7" y2="465.2"><stop offset="0" stop-color="#ffffff"/><stop offset=".125" stop-color="#ceffe8"/><stop offset=".375" stop-color="#7fffc2"/><stop offset=".625" stop-color="#44ffa6"/><stop offset=".875" stop-color="#14ff8f"/><stop offset="1" stop-color="#00ff86"/></linearGradient><linearGradient id="c314" gradientUnits="userSpaceOnUse" x1="1438.0" y1="521.9" x2="1380.2" y2="466.7"><stop offset="0" stop-color="#ffffff"/><stop offset=".125" stop-color="#ceffe8"/><stop offset=".25" stop-color="#a4ffd5"/><stop offset=".5" stop-color="#60ffb5"/><stop offset=".875" stop-color="#14ff92"/><stop offset="1" stop-color="#00ff88"/></linearGradient><linearGradient id="c315" gradientUnits="userSpaceOnUse" x1="1438.0" y1="521.9" x2="1379.7" y2="468.2"><stop offset="0" stop-color="#ffffff"/><stop offset=".125" stop-color="#ceffe9"/><stop offset=".375" stop-color="#80ffc5"/><stop offset=".625" stop-color="#44ffaa"/><stop offset=".875" stop-color="#14ff94"/><stop offset="1" stop-color="#00ff8a"/></linearGradient><linearGradient id="c316" gradientUnits="userSpaceOnUse" x1="1438.0" y1="521.9" x2="1379.2" y2="469.6"><stop offset="0" stop-color="#ffffff"/><stop offset=".125" stop-color="#cfffe9"/><stop offset=".25" stop-color="#a5ffd7"/><stop offset=".5" stop-color="#61ffb8"/><stop offset=".75" stop-color="#2bffa0"/><stop offset="1" stop-color="#00ff8d"/></linearGradient><linearGradient id="c317" gradientUnits="userSpaceOnUse" x1="1438.0" y1="521.9" x2="1378.7" y2="471.0"><stop offset="0" stop-color="#ffffff"/><stop offset=".125" stop-color="#cfffea"/><stop offset=".25" stop-color="#a5ffd8"/><stop offset=".5" stop-color="#61ffba"/><stop offset=".75" stop-color="#2bffa2"/><stop offset="1" stop-color="#00ff8f"/></linearGradient><linearGradient id="c318" gradientUnits="userSpaceOnUse" x1="1438.0" y1="521.9" x2="1378.2" y2="472.3"><stop offset="0" stop-color="#ffffff"/><stop offset=".125" stop-color="#cfffea"/><stop offset=".375" stop-color="#81ffc9"/><stop offset=".625" stop-color="#45ffaf"/><stop offset="1" stop-color="#00ff92"/></linearGradient><linearGradient id="c319" gradientUnits="userSpaceOnUse" x1="1438.0" y1="521.9" x2="1377.7" y2="473.6"><stop offset="0" stop-color="#ffffff"/><stop offset=".125" stop-color="#cfffeb"/><stop offset=".375" stop-color="#82ffca"/><stop offset=".625" stop-color="#45ffb1"/><stop offset="1" stop-color="#00ff94"/></linearGradient><linearGradient id="c320" gradientUnits="userSpaceOnUse" x1="1438.0" y1="521.9" x2="1377.2" y2="474.9"><stop offset="0" stop-color="#ffffff"/><stop offset=".25" stop-color="#a6ffdb"/><stop offset=".5" stop-color="#62ffbe"/><stop offset=".75" stop-color="#2cffa8"/><stop offset="1" stop-color="#00ff96"/></linearGradient><linearGradient id="c321" gradientUnits="userSpaceOnUse" x1="1438.0" y1="521.9" x2="1376.7" y2="476.2"><stop offset="0" stop-color="#ffffff"/><stop offset=".125" stop-color="#d0ffec"/><stop offset=".375" stop-color="#82ffcd"/><stop offset=".625" stop-color="#46ffb4"/><stop offset="1" stop-color="#00ff98"/></linearGradient><linearGradient id="c322" gradientUnits="userSpaceOnUse" x1="1438.0" y1="521.9" x2="1376.3" y2="477.4"><stop offset="0" stop-color="#ffffff"/><stop offset=".125" stop-color="#d0ffec"/><stop offset=".375" stop-color="#83ffce"/><stop offset=".625" stop-color="#46ffb6"/><stop offset="1" stop-color="#00ff9b"/></linearGradient><linearGradient id="c323" gradientUnits="userSpaceOnUse" x1="1438.0" y1="521.9" x2="1375.8" y2="478.7"><stop offset="0" stop-color="#ffffff"/><stop offset=".125" stop-color="#d0ffed"/><stop offset=".375" stop-color="#83ffcf"/><stop offset=".625" stop-color="#46ffb8"/><stop offset="1" stop-color="#00ff9d"/></linearGradient><linearGradient id="c324" gradientUnits="userSpaceOnUse" x1="1438.0" y1="521.9" x2="1375.4" y2="479.9"><stop offset="0" stop-color="#ffffff"/><stop offset=".125" stop-color="#d0ffed"/><stop offset=".375" stop-color="#84ffd0"/><stop offset=".625" stop-color="#47ffba"/><stop offset=".875" stop-color="#15ffa7"/><stop offset="1" stop-color="#00ff9f"/></linearGradient><linearGradient id="c325" gradientUnits="userSpaceOnUse" x1="1438.0" y1="521.9" x2="1375.0" y2="481.0"><stop offset="0" stop-color="#ffffff"/><stop offset=".25" stop-color="#a8ffdf"/><stop offset=".5" stop-color="#64ffc6"/><stop offset=".875" stop-color="#15ffa9"/><stop offset="1" stop-color="#00ffa1"/></linearGradient><linearGradient id="c326" gradientUnits="userSpaceOnUse" x1="1438.0" y1="521.9" x2="1374.5" y2="482.2"><stop offset="0" stop-color="#ffffff"/><stop offset=".25" stop-color="#a8ffe0"/><stop offset=".5" stop-color="#64ffc7"/><stop offset=".75" stop-color="#2dffb4"/><stop offset="1" stop-color="#00ffa3"/></linearGradient><linearGradient id="c327" gradientUnits="userSpaceOnUse" x1="1438.0" y1="521.9" x2="1374.1" y2="483.3"><stop offset="0" stop-color="#ffffff"/><stop offset=".25" stop-color="#a8ffe1"/><stop offset=".5" stop-color="#64ffc9"/><stop offset=".75" stop-color="#2dffb5"/><stop offset="1" stop-color="#00ffa5"/></linearGradient><linearGradient id="c328" gradientUnits="userSpaceOnUse" x1="1438.0" y1="521.9" x2="1373.7" y2="484.5"><stop offset="0" stop-color="#ffffff"/><stop offset=".125" stop-color="#d1ffef"/><stop offset=".375" stop-color="#85ffd5"/><stop offset=".625" stop-color="#48ffc0"/><stop offset="1" stop-color="#00ffa8"/></linearGradient><linearGradient id="c329" gradientUnits="userSpaceOnUse" x1="1438.0" y1="521.9" x2="1373.3" y2="485.6"><stop offset="0" stop-color="#ffffff"/><stop offset=".125" stop-color="#d1fff0"/><stop offset=".375" stop-color="#85ffd6"/><stop offset=".625" stop-color="#48ffc2"/><stop offset="1" stop-color="#00ffaa"/></linearGradient><linearGradient id="c330" gradientUnits="userSpaceOnUse" x1="1438.0" y1="521.9" x2="1372.9" y2="486.7"><stop offset="0" stop-color="#ffffff"/><stop offset=".25" stop-color="#a9ffe3"/><stop offset=".5" stop-color="#65ffcd"/><stop offset=".875" stop-color="#16ffb3"/><stop offset="1" stop-color="#00ffac"/></linearGradient><linearGradient id="c331" gradientUnits="userSpaceOnUse" x1="1438.0" y1="521.9" x2="1372.5" y2="487.7"><stop offset="0" stop-color="#ffffff"/><stop offset=".25" stop-color="#aaffe4"/><stop offset=".5" stop-color="#66ffce"/><stop offset=".75" stop-color="#2effbd"/><stop offset="1" stop-color="#00ffae"/></linearGradient><linearGradient id="c332" gradientUnits="userSpaceOnUse" x1="1438.0" y1="521.9" x2="1372.1" y2="488.8"><stop offset="0" stop-color="#ffffff"/><stop offset=".25" stop-color="#aaffe5"/><stop offset=".5" stop-color="#66ffd0"/><stop offset=".75" stop-color="#2effbe"/><stop offset="1" stop-color="#00ffb0"/></linearGradient><linearGradient id="c333" gradientUnits="userSpaceOnUse" x1="1438.0" y1="521.9" x2="1371.7" y2="489.9"><stop offset="0" stop-color="#ffffff"/><stop offset=".25" stop-color="#aaffe5"/><stop offset=".5" stop-color="#66ffd1"/><stop offset=".875" stop-color="#16ffb9"/><stop offset="1" stop-color="#00ffb2"/></linearGradient><linearGradient id="c334" gradientUnits="userSpaceOnUse" x1="1438.0" y1="521.9" x2="1371.4" y2="490.9"><stop offset="0" stop-color="#ffffff"/><stop offset=".25" stop-color="#aaffe6"/><stop offset=".625" stop-color="#49ffca"/><stop offset="1" stop-color="#00ffb4"/></linearGradient><linearGradient id="c335" gradientUnits="userSpaceOnUse" x1="1438.0" y1="521.9" x2="1371.0" y2="491.9"><stop offset="0" stop-color="#ffffff"/><stop offset=".125" stop-color="#d2fff2"/><stop offset=".375" stop-color="#87ffdd"/><stop offset=".75" stop-color="#2fffc4"/><stop offset="1" stop-color="#00ffb6"/></linearGradient><linearGradient id="c336" gradientUnits="userSpaceOnUse" x1="1438.0" y1="521.9" x2="1370.6" y2="493.0"><stop offset="0" stop-color="#ffffff"/><stop offset=".25" stop-color="#abffe8"/><stop offset=".5" stop-color="#67ffd5"/><stop offset=".75" stop-color="#2fffc6"/><stop offset="1" stop-color="#00ffb9"/></linearGradient><linearGradient id="c337" gradientUnits="userSpaceOnUse" x1="1438.0" y1="521.9" x2="1370.2" y2="494.0"><stop offset="0" stop-color="#ffffff"/><stop offset=".25" stop-color="#abffe9"/><stop offset=".5" stop-color="#67ffd6"/><stop offset=".75" stop-color="#2fffc7"/><stop offset="1" stop-color="#00ffbb"/></linearGradient><linearGradient id="c338" gradientUnits="userSpaceOnUse" x1="1438.0" y1="521.9" x2="1369.9" y2="495.0"><stop offset="0" stop-color="#ffffff"/><stop offset=".25" stop-color="#acffe9"/><stop offset=".5" stop-color="#68ffd8"/><stop offset=".75" stop-color="#2fffc9"/><stop offset="1" stop-color="#00ffbd"/></linearGradient><linearGradient id="c339" gradientUnits="userSpaceOnUse" x1="1438.0" y1="521.9" x2="1369.5" y2="496.0"><stop offset="0" stop-color="#ffffff"/><stop offset=".25" stop-color="#acffea"/><stop offset=".5" stop-color="#68ffd9"/><stop offset=".875" stop-color="#17ffc5"/><stop offset="1" stop-color="#00ffbf"/></linearGradient><linearGradient id="c340" gradientUnits="userSpaceOnUse" x1="1438.0" y1="521.9" x2="1369.1" y2="497.0"><stop offset="0" stop-color="#ffffff"/><stop offset=".25" stop-color="#acffeb"/><stop offset=".5" stop-color="#68ffda"/><stop offset=".875" stop-color="#17ffc7"/><stop offset="1" stop-color="#00ffc1"/></linearGradient><linearGradient id="c341" gradientUnits="userSpaceOnUse" x1="1438.0" y1="521.9" x2="1368.8" y2="498.0"><stop offset="0" stop-color="#ffffff"/><stop offset=".25" stop-color="#acffec"/><stop offset=".625" stop-color="#4bffd5"/><stop offset="1" stop-color="#00ffc3"/></linearGradient><linearGradient id="c342" gradientUnits="userSpaceOnUse" x1="1438.0" y1="521.9" x2="1368.4" y2="498.9"><stop offset="0" stop-color="#ffffff"/><stop offset=".25" stop-color="#adffec"/><stop offset=".5" stop-color="#69ffdd"/><stop offset=".875" stop-color="#17ffcb"/><stop offset="1" stop-color="#00ffc5"/></linearGradient><linearGradient id="c343" gradientUnits="userSpaceOnUse" x1="1438.0" y1="521.9" x2="1368.1" y2="499.9"><stop offset="0" stop-color="#ffffff"/><stop offset=".25" stop-color="#adffed"/><stop offset=".5" stop-color="#69ffde"/><stop offset=".875" stop-color="#17ffcd"/><stop offset="1" stop-color="#00ffc8"/></linearGradient><linearGradient id="c344" gradientUnits="userSpaceOnUse" x1="1438.0" y1="521.9" x2="1367.7" y2="500.9"><stop offset="0" stop-color="#ffffff"/><stop offset=".25" stop-color="#adffee"/><stop offset=".625" stop-color="#4cffda"/><stop offset="1" stop-color="#00ffca"/></linearGradient><linearGradient id="c345" gradientUnits="userSpaceOnUse" x1="1438.0" y1="521.9" x2="1367.3" y2="501.9"><stop offset="0" stop-color="#ffffff"/><stop offset=".25" stop-color="#adffef"/><stop offset=".625" stop-color="#4cffdb"/><stop offset="1" stop-color="#00ffcc"/></linearGradient><linearGradient id="c346" gradientUnits="userSpaceOnUse" x1="1438.0" y1="521.9" x2="1367.0" y2="502.8"><stop offset="0" stop-color="#ffffff"/><stop offset=".25" stop-color="#aeffef"/><stop offset=".5" stop-color="#6affe2"/><stop offset="1" stop-color="#00ffce"/></linearGradient><linearGradient id="c347" gradientUnits="userSpaceOnUse" x1="1438.0" y1="521.9" x2="1366.6" y2="503.8"><stop offset="0" stop-color="#ffffff"/><stop offset=".25" stop-color="#aefff0"/><stop offset=".5" stop-color="#6affe4"/><stop offset="1" stop-color="#00ffd0"/></linearGradient><linearGradient id="c348" gradientUnits="userSpaceOnUse" x1="1438.0" y1="521.9" x2="1366.3" y2="504.7"><stop offset="0" stop-color="#ffffff"/><stop offset=".25" stop-color="#aefff1"/><stop offset=".625" stop-color="#4dffe0"/><stop offset="1" stop-color="#00ffd3"/></linearGradient><linearGradient id="c349" gradientUnits="userSpaceOnUse" x1="1438.0" y1="521.9" x2="1365.9" y2="505.7"><stop offset="0" stop-color="#ffffff"/><stop offset=".25" stop-color="#aefff2"/><stop offset=".625" stop-color="#4dffe2"/><stop offset="1" stop-color="#00ffd5"/></linearGradient><linearGradient id="c350" gradientUnits="userSpaceOnUse" x1="1438.0" y1="521.9" x2="1365.6" y2="506.7"><stop offset="0" stop-color="#ffffff"/><stop offset=".25" stop-color="#affff2"/><stop offset=".5" stop-color="#6bffe8"/><stop offset=".875" stop-color="#18ffdb"/><stop offset="1" stop-color="#00ffd7"/></linearGradient><linearGradient id="c351" gradientUnits="userSpaceOnUse" x1="1438.0" y1="521.9" x2="1365.2" y2="507.6"><stop offset="0" stop-color="#ffffff"/><stop offset=".25" stop-color="#affff3"/><stop offset=".625" stop-color="#4effe5"/><stop offset="1" stop-color="#00ffd9"/></linearGradient><linearGradient id="c352" gradientUnits="userSpaceOnUse" x1="1438.0" y1="521.9" x2="1364.9" y2="508.6"><stop offset="0" stop-color="#ffffff"/><stop offset=".25" stop-color="#affff4"/><stop offset=".625" stop-color="#4effe7"/><stop offset="1" stop-color="#00ffdc"/></linearGradient><linearGradient id="c353" gradientUnits="userSpaceOnUse" x1="1438.0" y1="521.9" x2="1364.5" y2="509.5"><stop offset="0" stop-color="#ffffff"/><stop offset=".25" stop-color="#b0fff5"/><stop offset=".5" stop-color="#6cffec"/><stop offset=".875" stop-color="#18ffe1"/><stop offset="1" stop-color="#00ffde"/></linearGradient><linearGradient id="c354" gradientUnits="userSpaceOnUse" x1="1438.0" y1="521.9" x2="1364.2" y2="510.5"><stop offset="0" stop-color="#ffffff"/><stop offset=".25" stop-color="#b0fff6"/><stop offset=".625" stop-color="#4fffea"/><stop offset="1" stop-color="#00ffe0"/></linearGradient><linearGradient id="c355" gradientUnits="userSpaceOnUse" x1="1438.0" y1="521.9" x2="1363.8" y2="511.5"><stop offset="0" stop-color="#ffffff"/><stop offset=".25" stop-color="#b0fff6"/><stop offset=".625" stop-color="#4fffec"/><stop offset="1" stop-color="#00ffe3"/></linearGradient><linearGradient id="c356" gradientUnits="userSpaceOnUse" x1="1438.0" y1="521.9" x2="1363.5" y2="512.4"><stop offset="0" stop-color="#ffffff"/><stop offset=".25" stop-color="#b0fff7"/><stop offset=".625" stop-color="#4fffed"/><stop offset="1" stop-color="#00ffe5"/></linearGradient><linearGradient id="c357" gradientUnits="userSpaceOnUse" x1="1438.0" y1="521.9" x2="1363.1" y2="513.4"><stop offset="0" stop-color="#ffffff"/><stop offset=".25" stop-color="#b1fff8"/><stop offset=".5" stop-color="#6dfff2"/><stop offset="1" stop-color="#00ffe8"/></linearGradient><linearGradient id="c358" gradientUnits="userSpaceOnUse" x1="1438.0" y1="521.9" x2="1362.8" y2="514.4"><stop offset="0" stop-color="#ffffff"/><stop offset=".25" stop-color="#b1fff9"/><stop offset=".75" stop-color="#33ffee"/><stop offset="1" stop-color="#00ffea"/></linearGradient><linearGradient id="c359" gradientUnits="userSpaceOnUse" x1="1438.0" y1="521.9" x2="1362.4" y2="515.4"><stop offset="0" stop-color="#ffffff"/><stop offset=".25" stop-color="#b1fff9"/><stop offset=".625" stop-color="#50fff3"/><stop offset="1" stop-color="#00ffed"/></linearGradient><linearGradient id="c360" gradientUnits="userSpaceOnUse" x1="1438.0" y1="521.9" x2="1362.0" y2="516.4"><stop offset="0" stop-color="#ffffff"/><stop offset=".375" stop-color="#8ffff8"/><stop offset=".875" stop-color="#19fff1"/><stop offset="1" stop-color="#00ffef"/></linearGradient><linearGradient id="c361" gradientUnits="userSpaceOnUse" x1="1438.0" y1="521.9" x2="1361.7" y2="517.4"><stop offset="0" stop-color="#ffffff"/><stop offset=".375" stop-color="#8ffff9"/><stop offset=".875" stop-color="#19fff3"/><stop offset="1" stop-color="#00fff2"/></linearGradient><linearGradient id="c362" gradientUnits="userSpaceOnUse" x1="1438.0" y1="521.9" x2="1361.3" y2="518.4"><stop offset="0" stop-color="#ffffff"/><stop offset=".25" stop-color="#b2fffc"/><stop offset=".75" stop-color="#34fff7"/><stop offset="1" stop-color="#00fff5"/></linearGradient><linearGradient id="c363" gradientUnits="userSpaceOnUse" x1="1438.0" y1="521.9" x2="1360.9" y2="519.4"><stop offset="0" stop-color="#ffffff"/><stop offset=".25" stop-color="#b2fffd"/><stop offset=".75" stop-color="#34fff9"/><stop offset="1" stop-color="#00fff7"/></linearGradient><linearGradient id="c364" gradientUnits="userSpaceOnUse" x1="1438.0" y1="521.9" x2="1360.6" y2="520.4"><stop offset="0" stop-color="#ffffff"/><stop offset=".375" stop-color="#90fffd"/><stop offset=".875" stop-color="#1afffb"/><stop offset="1" stop-color="#00fffa"/></linearGradient><linearGradient id="c365" gradientUnits="userSpaceOnUse" x1="1438.0" y1="521.9" x2="1360.2" y2="521.4"><stop offset="0" stop-color="#ffffff"/><stop offset=".25" stop-color="#b3fffe"/><stop offset=".75" stop-color="#35fffd"/><stop offset="1" stop-color="#00fffd"/></linearGradient><clipPath id="tri"><path d="M1728.3 521.2L1426.8 339.5L1293.7 703.0Z"/></clipPath><clipPath id="plotclip"><rect x="1162.0" y="178.5" width="745.0" height="565.5"/></clipPath><linearGradient id="n0" gradientUnits="userSpaceOnUse" x1="-410.0" y1="844.5" x2="301.3" y2="223.1"><stop offset="0" stop-color="#ffffff"/><stop offset=".167" stop-color="#ffe4b2"/><stop offset=".375" stop-color="#ffcc6f"/><stop offset=".917" stop-color="#ffa80a"/><stop offset="1" stop-color="#ffa500"/></linearGradient><linearGradient id="n1" gradientUnits="userSpaceOnUse" x1="-410.0" y1="844.5" x2="297.7" y2="220.7"><stop offset="0" stop-color="#ffffff"/><stop offset=".125" stop-color="#ffeac3"/><stop offset=".333" stop-color="#ffd17b"/><stop offset=".75" stop-color="#ffb222"/><stop offset="1" stop-color="#ffa600"/></linearGradient><linearGradient id="n2" gradientUnits="userSpaceOnUse" x1="-410.0" y1="844.5" x2="294.2" y2="218.4"><stop offset="0" stop-color="#ffffff"/><stop offset=".208" stop-color="#ffe0a3"/><stop offset=".458" stop-color="#ffc75b"/><stop offset="1" stop-color="#ffa700"/></linearGradient><linearGradient id="n3" gradientUnits="userSpaceOnUse" x1="-410.0" y1="844.5" x2="290.7" y2="216.0"><stop offset="0" stop-color="#ffffff"/><stop offset=".167" stop-color="#ffe5b3"/><stop offset=".417" stop-color="#ffcb65"/><stop offset="1" stop-color="#ffa900"/></linearGradient><linearGradient id="n4" gradientUnits="userSpaceOnUse" x1="-410.0" y1="844.5" x2="287.2" y2="213.7"><stop offset="0" stop-color="#ffffff"/><stop offset=".167" stop-color="#ffe6b3"/><stop offset=".5" stop-color="#ffc652"/><stop offset="1" stop-color="#ffaa00"/></linearGradient><linearGradient id="n5" gradientUnits="userSpaceOnUse" x1="-410.0" y1="844.5" x2="283.7" y2="211.3"><stop offset="0" stop-color="#ffffff"/><stop offset=".125" stop-color="#ffecc4"/><stop offset=".333" stop-color="#ffd47c"/><stop offset=".875" stop-color="#ffb110"/><stop offset="1" stop-color="#ffac00"/></linearGradient><linearGradient id="n6" gradientUnits="userSpaceOnUse" x1="-410.0" y1="844.5" x2="280.2" y2="209.0"><stop offset="0" stop-color="#ffffff"/><stop offset=".125" stop-color="#ffecc4"/><stop offset=".417" stop-color="#ffce66"/><stop offset=".875" stop-color="#ffb210"/><stop offset="1" stop-color="#ffad00"/></linearGradient><linearGradient id="n7" gradientUnits="userSpaceOnUse" x1="-410.0" y1="844.5" x2="276.7" y2="206.7"><stop offset="0" stop-color="#ffffff"/><stop offset=".167" stop-color="#ffe7b4"/><stop offset=".375" stop-color="#ffd271"/><stop offset=".875" stop-color="#ffb410"/><stop offset="1" stop-color="#ffaf00"/></linearGradient><linearGradient id="n8" gradientUnits="userSpaceOnUse" x1="-410.0" y1="844.5" x2="273.2" y2="204.3"><stop offset="0" stop-color="#ffffff"/><stop offset=".167" stop-color="#ffe8b4"/><stop offset=".5" stop-color="#ffca53"/><stop offset="1" stop-color="#ffb000"/></linearGradient><linearGradient id="n9" gradientUnits="userSpaceOnUse" x1="-410.0" y1="844.5" x2="269.7" y2="202.0"><stop offset="0" stop-color="#ffffff"/><stop offset=".208" stop-color="#ffe4a5"/><stop offset=".542" stop-color="#ffc84a"/><stop offset="1" stop-color="#ffb200"/></linearGradient><linearGradient id="n10" gradientUnits="userSpaceOnUse" x1="-410.0" y1="844.5" x2="266.2" y2="199.7"><stop offset="0" stop-color="#ffffff"/><stop offset=".167" stop-color="#ffe9b5"/><stop offset=".417" stop-color="#ffd267"/><stop offset="1" stop-color="#ffb300"/></linearGradient><linearGradient id="n11" gradientUnits="userSpaceOnUse" x1="-410.0" y1="844.5" x2="262.7" y2="197.3"><stop offset="0" stop-color="#ffffff"/><stop offset=".167" stop-color="#ffe9b5"/><stop offset=".5" stop-color="#ffcd54"/><stop offset="1" stop-color="#ffb500"/></linearGradient><linearGradient id="n12" gradientUnits="userSpaceOnUse" x1="-410.0" y1="844.5" x2="259.2" y2="195.0"><stop offset="0" stop-color="#ffffff"/><stop offset=".167" stop-color="#ffeab5"/><stop offset=".5" stop-color="#ffce54"/><stop offset="1" stop-color="#ffb600"/></linearGradient><linearGradient id="n13" gradientUnits="userSpaceOnUse" x1="-410.0" y1="844.5" x2="255.7" y2="192.7"><stop offset="0" stop-color="#ffffff"/><stop offset=".208" stop-color="#ffe6a6"/><stop offset=".542" stop-color="#ffcd4b"/><stop offset="1" stop-color="#ffb800"/></linearGradient><linearGradient id="n14" gradientUnits="userSpaceOnUse" x1="-410.0" y1="844.5" x2="252.2" y2="190.3"><stop offset="0" stop-color="#ffffff"/><stop offset=".167" stop-color="#ffebb6"/><stop offset=".458" stop-color="#ffd35e"/><stop offset="1" stop-color="#ffb900"/></linearGradient><linearGradient id="n15" gradientUnits="userSpaceOnUse" x1="-410.0" y1="844.5" x2="248.7" y2="188.0"><stop offset="0" stop-color="#ffffff"/><stop offset=".167" stop-color="#ffecb6"/><stop offset=".5" stop-color="#ffd155"/><stop offset="1" stop-color="#ffbb00"/></linearGradient><linearGradient id="n16" gradientUnits="userSpaceOnUse" x1="-410.0" y1="844.5" x2="245.2" y2="185.7"><stop offset="0" stop-color="#ffffff"/><stop offset=".167" stop-color="#ffecb6"/><stop offset=".5" stop-color="#ffd355"/><stop offset="1" stop-color="#ffbc00"/></linearGradient><linearGradient id="n17" gradientUnits="userSpaceOnUse" x1="-410.0" y1="844.5" x2="241.7" y2="183.3"><stop offset="0" stop-color="#ffffff"/><stop offset=".208" stop-color="#ffe9a8"/><stop offset=".458" stop-color="#ffd65f"/><stop offset="1" stop-color="#ffbe00"/></linearGradient><linearGradient id="n18" gradientUnits="userSpaceOnUse" x1="-410.0" y1="844.5" x2="238.2" y2="181.0"><stop offset="0" stop-color="#ffffff"/><stop offset=".208" stop-color="#ffe9a8"/><stop offset=".583" stop-color="#ffd044"/><stop offset="1" stop-color="#ffbf00"/></linearGradient><linearGradient id="n19" gradientUnits="userSpaceOnUse" x1="-410.0" y1="844.5" x2="234.7" y2="178.7"><stop offset="0" stop-color="#ffffff"/><stop offset=".208" stop-color="#ffeaa8"/><stop offset=".583" stop-color="#ffd244"/><stop offset="1" stop-color="#ffc100"/></linearGradient><linearGradient id="n20" gradientUnits="userSpaceOnUse" x1="-410.0" y1="844.5" x2="231.2" y2="176.3"><stop offset="0" stop-color="#ffffff"/><stop offset=".208" stop-color="#ffeba8"/><stop offset=".583" stop-color="#ffd344"/><stop offset="1" stop-color="#ffc300"/></linearGradient><linearGradient id="n21" gradientUnits="userSpaceOnUse" x1="-410.0" y1="844.5" x2="227.7" y2="174.0"><stop offset="0" stop-color="#ffffff"/><stop offset=".208" stop-color="#ffeba9"/><stop offset=".458" stop-color="#ffdb60"/><stop offset="1" stop-color="#ffc400"/></linearGradient><linearGradient id="n22" gradientUnits="userSpaceOnUse" x1="-410.0" y1="844.5" x2="224.2" y2="171.7"><stop offset="0" stop-color="#ffffff"/><stop offset=".208" stop-color="#ffeca9"/><stop offset=".625" stop-color="#ffd43c"/><stop offset="1" stop-color="#ffc600"/></linearGradient><linearGradient id="n23" gradientUnits="userSpaceOnUse" x1="-410.0" y1="844.5" x2="220.7" y2="169.4"><stop offset="0" stop-color="#ffffff"/><stop offset=".208" stop-color="#ffeca9"/><stop offset=".583" stop-color="#ffd745"/><stop offset="1" stop-color="#ffc800"/></linearGradient><linearGradient id="n24" gradientUnits="userSpaceOnUse" x1="-410.0" y1="844.5" x2="217.2" y2="167.0"><stop offset="0" stop-color="#ffffff"/><stop offset=".167" stop-color="#fff0b8"/><stop offset=".458" stop-color="#ffde61"/><stop offset="1" stop-color="#ffc900"/></linearGradient><linearGradient id="n25" gradientUnits="userSpaceOnUse" x1="-410.0" y1="844.5" x2="213.8" y2="164.7"><stop offset="0" stop-color="#ffffff"/><stop offset=".25" stop-color="#ffeb9c"/><stop offset=".542" stop-color="#ffdb4e"/><stop offset="1" stop-color="#ffcb00"/></linearGradient><linearGradient id="n26" gradientUnits="userSpaceOnUse" x1="-410.0" y1="844.5" x2="210.3" y2="162.4"><stop offset="0" stop-color="#ffffff"/><stop offset=".25" stop-color="#ffec9c"/><stop offset=".667" stop-color="#ffd735"/><stop offset="1" stop-color="#ffcd00"/></linearGradient><linearGradient id="n27" gradientUnits="userSpaceOnUse" x1="-410.0" y1="844.5" x2="206.8" y2="160.0"><stop offset="0" stop-color="#ffffff"/><stop offset=".208" stop-color="#ffefaa"/><stop offset=".583" stop-color="#ffdc46"/><stop offset="1" stop-color="#ffcf00"/></linearGradient><linearGradient id="n28" gradientUnits="userSpaceOnUse" x1="-410.0" y1="844.5" x2="203.3" y2="157.7"><stop offset="0" stop-color="#ffffff"/><stop offset=".167" stop-color="#fff2b9"/><stop offset=".542" stop-color="#ffdf4f"/><stop offset="1" stop-color="#ffd000"/></linearGradient><linearGradient id="n29" gradientUnits="userSpaceOnUse" x1="-410.0" y1="844.5" x2="199.8" y2="155.4"><stop offset="0" stop-color="#ffffff"/><stop offset=".25" stop-color="#ffee9d"/><stop offset=".708" stop-color="#ffda2e"/><stop offset="1" stop-color="#ffd200"/></linearGradient><linearGradient id="n30" gradientUnits="userSpaceOnUse" x1="-410.0" y1="844.5" x2="196.3" y2="153.1"><stop offset="0" stop-color="#ffffff"/><stop offset=".208" stop-color="#fff1ab"/><stop offset=".625" stop-color="#ffdf3e"/><stop offset="1" stop-color="#ffd400"/></linearGradient><linearGradient id="n31" gradientUnits="userSpaceOnUse" x1="-410.0" y1="844.5" x2="192.8" y2="150.7"><stop offset="0" stop-color="#ffffff"/><stop offset=".167" stop-color="#fff4ba"/><stop offset=".542" stop-color="#ffe350"/><stop offset="1" stop-color="#ffd600"/></linearGradient><linearGradient id="n32" gradientUnits="userSpaceOnUse" x1="-410.0" y1="844.5" x2="189.3" y2="148.4"><stop offset="0" stop-color="#ffffff"/><stop offset=".25" stop-color="#fff09e"/><stop offset=".583" stop-color="#ffe347"/><stop offset="1" stop-color="#ffd800"/></linearGradient><linearGradient id="n33" gradientUnits="userSpaceOnUse" x1="-410.0" y1="844.5" x2="185.8" y2="146.1"><stop offset="0" stop-color="#ffffff"/><stop offset=".25" stop-color="#fff19e"/><stop offset=".75" stop-color="#ffdf27"/><stop offset="1" stop-color="#ffda00"/></linearGradient><linearGradient id="n34" gradientUnits="userSpaceOnUse" x1="-410.0" y1="844.5" x2="182.3" y2="143.7"><stop offset="0" stop-color="#ffffff"/><stop offset=".25" stop-color="#fff29f"/><stop offset=".708" stop-color="#ffe22f"/><stop offset="1" stop-color="#ffdc00"/></linearGradient><linearGradient id="n35" gradientUnits="userSpaceOnUse" x1="-410.0" y1="844.5" x2="178.8" y2="141.4"><stop offset="0" stop-color="#ffffff"/><stop offset=".25" stop-color="#fff29f"/><stop offset=".583" stop-color="#ffe748"/><stop offset="1" stop-color="#ffdd00"/></linearGradient><linearGradient id="n36" gradientUnits="userSpaceOnUse" x1="-410.0" y1="844.5" x2="175.3" y2="139.0"><stop offset="0" stop-color="#ffffff"/><stop offset=".25" stop-color="#fff39f"/><stop offset=".75" stop-color="#ffe428"/><stop offset="1" stop-color="#ffdf00"/></linearGradient><linearGradient id="n37" gradientUnits="userSpaceOnUse" x1="-410.0" y1="844.5" x2="171.8" y2="136.7"><stop offset="0" stop-color="#ffffff"/><stop offset=".208" stop-color="#fff6ad"/><stop offset=".625" stop-color="#ffe940"/><stop offset="1" stop-color="#ffe100"/></linearGradient><linearGradient id="n38" gradientUnits="userSpaceOnUse" x1="-410.0" y1="844.5" x2="168.3" y2="134.4"><stop offset="0" stop-color="#ffffff"/><stop offset=".292" stop-color="#fff393"/><stop offset=".917" stop-color="#ffe50c"/><stop offset="1" stop-color="#ffe300"/></linearGradient><linearGradient id="n39" gradientUnits="userSpaceOnUse" x1="-410.0" y1="844.5" x2="164.8" y2="132.0"><stop offset="0" stop-color="#ffffff"/><stop offset=".25" stop-color="#fff6a0"/><stop offset=".583" stop-color="#ffed49"/><stop offset="1" stop-color="#ffe500"/></linearGradient><linearGradient id="n40" gradientUnits="userSpaceOnUse" x1="-410.0" y1="844.5" x2="161.3" y2="129.7"><stop offset="0" stop-color="#ffffff"/><stop offset=".208" stop-color="#fff8ae"/><stop offset=".667" stop-color="#ffed38"/><stop offset="1" stop-color="#ffe700"/></linearGradient><linearGradient id="n41" gradientUnits="userSpaceOnUse" x1="-410.0" y1="844.5" x2="157.7" y2="127.3"><stop offset="0" stop-color="#ffffff"/><stop offset=".292" stop-color="#fff694"/><stop offset=".875" stop-color="#ffeb13"/><stop offset="1" stop-color="#ffe900"/></linearGradient><linearGradient id="n42" gradientUnits="userSpaceOnUse" x1="-410.0" y1="844.5" x2="154.2" y2="125.0"><stop offset="0" stop-color="#ffffff"/><stop offset=".25" stop-color="#fff8a1"/><stop offset=".75" stop-color="#ffef29"/><stop offset="1" stop-color="#ffec00"/></linearGradient><linearGradient id="n43" gradientUnits="userSpaceOnUse" x1="-410.0" y1="844.5" x2="150.7" y2="122.6"><stop offset="0" stop-color="#ffffff"/><stop offset=".292" stop-color="#fff895"/><stop offset=".75" stop-color="#fff029"/><stop offset="1" stop-color="#ffee00"/></linearGradient><linearGradient id="n44" gradientUnits="userSpaceOnUse" x1="-410.0" y1="844.5" x2="147.2" y2="120.3"><stop offset="0" stop-color="#ffffff"/><stop offset=".292" stop-color="#fff995"/><stop offset=".75" stop-color="#fff229"/><stop offset="1" stop-color="#fff000"/></linearGradient><linearGradient id="n45" gradientUnits="userSpaceOnUse" x1="-410.0" y1="844.5" x2="143.7" y2="117.9"><stop offset="0" stop-color="#ffffff"/><stop offset=".25" stop-color="#fffaa2"/><stop offset=".792" stop-color="#fff422"/><stop offset="1" stop-color="#fff200"/></linearGradient><linearGradient id="n46" gradientUnits="userSpaceOnUse" x1="-410.0" y1="844.5" x2="140.1" y2="115.6"><stop offset="0" stop-color="#ffffff"/><stop offset=".292" stop-color="#fffb96"/><stop offset=".958" stop-color="#fff406"/><stop offset="1" stop-color="#fff400"/></linearGradient><linearGradient id="n47" gradientUnits="userSpaceOnUse" x1="-410.0" y1="844.5" x2="136.6" y2="113.2"><stop offset="0" stop-color="#ffffff"/><stop offset=".292" stop-color="#fffb96"/><stop offset=".958" stop-color="#fff706"/><stop offset="1" stop-color="#fff600"/></linearGradient><linearGradient id="n48" gradientUnits="userSpaceOnUse" x1="-410.0" y1="844.5" x2="133.1" y2="110.9"><stop offset="0" stop-color="#ffffff"/><stop offset=".25" stop-color="#fffda3"/><stop offset=".75" stop-color="#fffa2a"/><stop offset="1" stop-color="#fff900"/></linearGradient><linearGradient id="n49" gradientUnits="userSpaceOnUse" x1="-410.0" y1="844.5" x2="129.5" y2="108.5"><stop offset="0" stop-color="#ffffff"/><stop offset=".375" stop-color="#fffd7f"/><stop offset=".917" stop-color="#fffb0d"/><stop offset="1" stop-color="#fffb00"/></linearGradient><linearGradient id="n50" gradientUnits="userSpaceOnUse" x1="-410.0" y1="844.5" x2="126.0" y2="106.1"><stop offset="0" stop-color="#ffffff"/><stop offset=".333" stop-color="#fffe8b"/><stop offset=".917" stop-color="#fffd0d"/><stop offset="1" stop-color="#fffd00"/></linearGradient><linearGradient id="n51" gradientUnits="userSpaceOnUse" x1="-410.0" y1="844.5" x2="123.6" y2="104.5"><stop offset="0" stop-color="#ffffff"/><stop offset=".25" stop-color="#ffffa4"/><stop offset=".792" stop-color="#ffff23"/><stop offset="1" stop-color="#ffff00"/></linearGradient><linearGradient id="n52" gradientUnits="userSpaceOnUse" x1="-410.0" y1="844.5" x2="121.8" y2="103.4"><stop offset="0" stop-color="#ffffff"/><stop offset=".25" stop-color="#ffffa4"/><stop offset=".792" stop-color="#feff23"/><stop offset="1" stop-color="#feff00"/></linearGradient><linearGradient id="n53" gradientUnits="userSpaceOnUse" x1="-410.0" y1="844.5" x2="118.9" y2="101.4"><stop offset="0" stop-color="#ffffff"/><stop offset=".333" stop-color="#feff8b"/><stop offset=".917" stop-color="#fcff0d"/><stop offset="1" stop-color="#fcff00"/></linearGradient><linearGradient id="n54" gradientUnits="userSpaceOnUse" x1="-410.0" y1="844.5" x2="115.3" y2="99.0"><stop offset="0" stop-color="#ffffff"/><stop offset=".333" stop-color="#fdff8b"/><stop offset=".917" stop-color="#faff0d"/><stop offset="1" stop-color="#faff00"/></linearGradient><linearGradient id="n55" gradientUnits="userSpaceOnUse" x1="-410.0" y1="844.5" x2="111.8" y2="96.7"><stop offset="0" stop-color="#ffffff"/><stop offset=".375" stop-color="#fbff7f"/><stop offset=".917" stop-color="#f8ff0d"/><stop offset="1" stop-color="#f8ff00"/></linearGradient><linearGradient id="n56" gradientUnits="userSpaceOnUse" x1="-410.0" y1="844.5" x2="108.2" y2="94.3"><stop offset="0" stop-color="#ffffff"/><stop offset=".375" stop-color="#faff7f"/><stop offset=".917" stop-color="#f6ff0d"/><stop offset="1" stop-color="#f5ff00"/></linearGradient><linearGradient id="n57" gradientUnits="userSpaceOnUse" x1="-410.0" y1="844.5" x2="104.6" y2="91.9"><stop offset="0" stop-color="#ffffff"/><stop offset=".25" stop-color="#fbffa3"/><stop offset=".75" stop-color="#f5ff2a"/><stop offset="1" stop-color="#f3ff00"/></linearGradient><linearGradient id="n58" gradientUnits="userSpaceOnUse" x1="-410.0" y1="844.5" x2="101.1" y2="89.5"><stop offset="0" stop-color="#ffffff"/><stop offset=".292" stop-color="#f9ff96"/><stop offset=".958" stop-color="#f1ff06"/><stop offset="1" stop-color="#f1ff00"/></linearGradient><linearGradient id="n59" gradientUnits="userSpaceOnUse" x1="-410.0" y1="844.5" x2="97.5" y2="87.1"><stop offset="0" stop-color="#ffffff"/><stop offset=".292" stop-color="#f8ff96"/><stop offset=".958" stop-color="#efff06"/><stop offset="1" stop-color="#efff00"/></linearGradient><linearGradient id="n60" gradientUnits="userSpaceOnUse" x1="-410.0" y1="844.5" x2="93.9" y2="84.8"><stop offset="0" stop-color="#ffffff"/><stop offset=".292" stop-color="#f7ff96"/><stop offset=".958" stop-color="#edff06"/><stop offset="1" stop-color="#ecff00"/></linearGradient><linearGradient id="n61" gradientUnits="userSpaceOnUse" x1="-410.0" y1="844.5" x2="90.3" y2="82.4"><stop offset="0" stop-color="#ffffff"/><stop offset=".292" stop-color="#f6ff96"/><stop offset=".958" stop-color="#ebff06"/><stop offset="1" stop-color="#eaff00"/></linearGradient><linearGradient id="n62" gradientUnits="userSpaceOnUse" x1="-410.0" y1="844.5" x2="86.7" y2="80.0"><stop offset="0" stop-color="#ffffff"/><stop offset=".25" stop-color="#f7ffa2"/><stop offset=".792" stop-color="#ebff22"/><stop offset="1" stop-color="#e8ff00"/></linearGradient><linearGradient id="n63" gradientUnits="userSpaceOnUse" x1="-410.0" y1="844.5" x2="83.1" y2="77.6"><stop offset="0" stop-color="#ffffff"/><stop offset=".292" stop-color="#f4ff95"/><stop offset=".708" stop-color="#ebff31"/><stop offset="1" stop-color="#e6ff00"/></linearGradient><linearGradient id="n64" gradientUnits="userSpaceOnUse" x1="-410.0" y1="844.5" x2="79.5" y2="75.2"><stop offset="0" stop-color="#ffffff"/><stop offset=".292" stop-color="#f4ff95"/><stop offset=".75" stop-color="#e8ff29"/><stop offset="1" stop-color="#e3ff00"/></linearGradient><linearGradient id="n65" gradientUnits="userSpaceOnUse" x1="-410.0" y1="844.5" x2="75.9" y2="72.8"><stop offset="0" stop-color="#ffffff"/><stop offset=".292" stop-color="#f3ff95"/><stop offset=".75" stop-color="#e6ff29"/><stop offset="1" stop-color="#e1ff00"/></linearGradient><linearGradient id="n66" gradientUnits="userSpaceOnUse" x1="-410.0" y1="844.5" x2="72.3" y2="70.3"><stop offset="0" stop-color="#ffffff"/><stop offset=".292" stop-color="#f2ff95"/><stop offset=".75" stop-color="#e4ff29"/><stop offset="1" stop-color="#dfff00"/></linearGradient><linearGradient id="n67" gradientUnits="userSpaceOnUse" x1="-410.0" y1="844.5" x2="68.7" y2="67.9"><stop offset="0" stop-color="#ffffff"/><stop offset=".292" stop-color="#f1ff95"/><stop offset=".75" stop-color="#e2ff29"/><stop offset="1" stop-color="#ddff00"/></linearGradient><linearGradient id="n68" gradientUnits="userSpaceOnUse" x1="-410.0" y1="844.5" x2="65.0" y2="65.5"><stop offset="0" stop-color="#ffffff"/><stop offset=".25" stop-color="#f2ffa1"/><stop offset=".75" stop-color="#e1ff29"/><stop offset="1" stop-color="#dbff00"/></linearGradient><linearGradient id="n69" gradientUnits="userSpaceOnUse" x1="-410.0" y1="844.5" x2="61.4" y2="63.1"><stop offset="0" stop-color="#ffffff"/><stop offset=".292" stop-color="#efff94"/><stop offset=".875" stop-color="#dbff13"/><stop offset="1" stop-color="#d9ff00"/></linearGradient><linearGradient id="n70" gradientUnits="userSpaceOnUse" x1="-410.0" y1="844.5" x2="57.8" y2="60.7"><stop offset="0" stop-color="#ffffff"/><stop offset=".292" stop-color="#eeff94"/><stop offset=".875" stop-color="#d9ff13"/><stop offset="1" stop-color="#d6ff00"/></linearGradient><linearGradient id="n71" gradientUnits="userSpaceOnUse" x1="-410.0" y1="844.5" x2="54.1" y2="58.2"><stop offset="0" stop-color="#ffffff"/><stop offset=".208" stop-color="#f1ffae"/><stop offset=".625" stop-color="#dfff41"/><stop offset="1" stop-color="#d4ff00"/></linearGradient><linearGradient id="n72" gradientUnits="userSpaceOnUse" x1="-410.0" y1="844.5" x2="50.5" y2="55.8"><stop offset="0" stop-color="#ffffff"/><stop offset=".208" stop-color="#f1ffae"/><stop offset=".667" stop-color="#dcff38"/><stop offset="1" stop-color="#d2ff00"/></linearGradient><linearGradient id="n73" gradientUnits="userSpaceOnUse" x1="-410.0" y1="844.5" x2="46.8" y2="53.3"><stop offset="0" stop-color="#ffffff"/><stop offset=".25" stop-color="#eeffa0"/><stop offset=".583" stop-color="#deff49"/><stop offset="1" stop-color="#d0ff00"/></linearGradient><linearGradient id="n74" gradientUnits="userSpaceOnUse" x1="-410.0" y1="844.5" x2="43.1" y2="50.9"><stop offset="0" stop-color="#ffffff"/><stop offset=".292" stop-color="#eaff93"/><stop offset=".875" stop-color="#d2ff13"/><stop offset="1" stop-color="#ceff00"/></linearGradient><linearGradient id="n75" gradientUnits="userSpaceOnUse" x1="-410.0" y1="844.5" x2="39.5" y2="48.4"><stop offset="0" stop-color="#ffffff"/><stop offset=".292" stop-color="#e9ff93"/><stop offset=".917" stop-color="#ceff0c"/><stop offset="1" stop-color="#ccff00"/></linearGradient><linearGradient id="n76" gradientUnits="userSpaceOnUse" x1="-410.0" y1="844.5" x2="35.8" y2="46.0"><stop offset="0" stop-color="#ffffff"/><stop offset=".292" stop-color="#e8ff93"/><stop offset=".917" stop-color="#ccff0c"/><stop offset="1" stop-color="#caff00"/></linearGradient><linearGradient id="n77" gradientUnits="userSpaceOnUse" x1="-410.0" y1="844.5" x2="32.1" y2="43.5"><stop offset="0" stop-color="#ffffff"/><stop offset=".208" stop-color="#edffad"/><stop offset=".625" stop-color="#d6ff40"/><stop offset="1" stop-color="#c8ff00"/></linearGradient><linearGradient id="n78" gradientUnits="userSpaceOnUse" x1="-410.0" y1="844.5" x2="28.4" y2="41.1"><stop offset="0" stop-color="#ffffff"/><stop offset=".208" stop-color="#edffad"/><stop offset=".625" stop-color="#d4ff40"/><stop offset="1" stop-color="#c6ff00"/></linearGradient><linearGradient id="n79" gradientUnits="userSpaceOnUse" x1="-410.0" y1="844.5" x2="24.7" y2="38.6"><stop offset="0" stop-color="#ffffff"/><stop offset=".25" stop-color="#e9ff9f"/><stop offset=".583" stop-color="#d4ff48"/><stop offset="1" stop-color="#c4ff00"/></linearGradient><linearGradient id="n80" gradientUnits="userSpaceOnUse" x1="-410.0" y1="844.5" x2="21.0" y2="36.1"><stop offset="0" stop-color="#ffffff"/><stop offset=".25" stop-color="#e8ff9f"/><stop offset=".583" stop-color="#d3ff48"/><stop offset="1" stop-color="#c1ff00"/></linearGradient><linearGradient id="n81" gradientUnits="userSpaceOnUse" x1="-410.0" y1="844.5" x2="17.3" y2="33.6"><stop offset="0" stop-color="#ffffff"/><stop offset=".25" stop-color="#e7ff9f"/><stop offset=".708" stop-color="#cbff2f"/><stop offset="1" stop-color="#bfff00"/></linearGradient><linearGradient id="n82" gradientUnits="userSpaceOnUse" x1="-410.0" y1="844.5" x2="13.5" y2="31.1"><stop offset="0" stop-color="#ffffff"/><stop offset=".208" stop-color="#eaffac"/><stop offset=".458" stop-color="#d7ff64"/><stop offset="1" stop-color="#bdff00"/></linearGradient><linearGradient id="n83" gradientUnits="userSpaceOnUse" x1="-410.0" y1="844.5" x2="9.8" y2="28.6"><stop offset="0" stop-color="#ffffff"/><stop offset=".208" stop-color="#e9ffac"/><stop offset=".625" stop-color="#ccff3f"/><stop offset="1" stop-color="#bbff00"/></linearGradient><linearGradient id="n84" gradientUnits="userSpaceOnUse" x1="-410.0" y1="844.5" x2="6.0" y2="26.1"><stop offset="0" stop-color="#ffffff"/><stop offset=".25" stop-color="#e5ff9e"/><stop offset=".75" stop-color="#c4ff27"/><stop offset="1" stop-color="#b9ff00"/></linearGradient><linearGradient id="n85" gradientUnits="userSpaceOnUse" x1="-410.0" y1="844.5" x2="2.3" y2="23.6"><stop offset="0" stop-color="#ffffff"/><stop offset=".25" stop-color="#e4ff9e"/><stop offset=".583" stop-color="#cbff47"/><stop offset="1" stop-color="#b7ff00"/></linearGradient><linearGradient id="n86" gradientUnits="userSpaceOnUse" x1="-410.0" y1="844.5" x2="-1.5" y2="21.1"><stop offset="0" stop-color="#ffffff"/><stop offset=".167" stop-color="#ebffba"/><stop offset=".542" stop-color="#ccff50"/><stop offset="1" stop-color="#b5ff00"/></linearGradient><linearGradient id="n87" gradientUnits="userSpaceOnUse" x1="-410.0" y1="844.5" x2="-5.3" y2="18.6"><stop offset="0" stop-color="#ffffff"/><stop offset=".167" stop-color="#ebffba"/><stop offset=".542" stop-color="#cbff50"/><stop offset="1" stop-color="#b3ff00"/></linearGradient><linearGradient id="n88" gradientUnits="userSpaceOnUse" x1="-410.0" y1="844.5" x2="-9.1" y2="16.1"><stop offset="0" stop-color="#ffffff"/><stop offset=".208" stop-color="#e5ffab"/><stop offset=".625" stop-color="#c4ff3e"/><stop offset="1" stop-color="#b1ff00"/></linearGradient><linearGradient id="n89" gradientUnits="userSpaceOnUse" x1="-410.0" y1="844.5" x2="-12.8" y2="13.5"><stop offset="0" stop-color="#ffffff"/><stop offset=".25" stop-color="#e0ff9d"/><stop offset=".708" stop-color="#beff2e"/><stop offset="1" stop-color="#afff00"/></linearGradient><linearGradient id="n90" gradientUnits="userSpaceOnUse" x1="-410.0" y1="844.5" x2="-16.7" y2="11.0"><stop offset="0" stop-color="#ffffff"/><stop offset=".25" stop-color="#e0ff9d"/><stop offset=".708" stop-color="#bcff2e"/><stop offset="1" stop-color="#adff00"/></linearGradient><linearGradient id="n91" gradientUnits="userSpaceOnUse" x1="-410.0" y1="844.5" x2="-20.5" y2="8.5"><stop offset="0" stop-color="#ffffff"/><stop offset=".25" stop-color="#dfff9d"/><stop offset=".542" stop-color="#c5ff4f"/><stop offset="1" stop-color="#abff00"/></linearGradient><linearGradient id="n92" gradientUnits="userSpaceOnUse" x1="-410.0" y1="844.5" x2="-24.3" y2="5.9"><stop offset="0" stop-color="#ffffff"/><stop offset=".167" stop-color="#e8ffb9"/><stop offset=".542" stop-color="#c4ff4f"/><stop offset="1" stop-color="#a9ff00"/></linearGradient><linearGradient id="n93" gradientUnits="userSpaceOnUse" x1="-410.0" y1="844.5" x2="-28.1" y2="3.3"><stop offset="0" stop-color="#ffffff"/><stop offset=".167" stop-color="#e7ffb9"/><stop offset=".458" stop-color="#c9ff62"/><stop offset="1" stop-color="#a7ff00"/></linearGradient><linearGradient id="n94" gradientUnits="userSpaceOnUse" x1="-410.0" y1="844.5" x2="-32.0" y2="0.8"><stop offset="0" stop-color="#ffffff"/><stop offset=".208" stop-color="#e1ffaa"/><stop offset=".583" stop-color="#beff46"/><stop offset="1" stop-color="#a5ff00"/></linearGradient><linearGradient id="n95" gradientUnits="userSpaceOnUse" x1="-410.0" y1="844.5" x2="-35.8" y2="-1.8"><stop offset="0" stop-color="#ffffff"/><stop offset=".25" stop-color="#dcff9c"/><stop offset=".667" stop-color="#b7ff35"/><stop offset="1" stop-color="#a4ff00"/></linearGradient><linearGradient id="n96" gradientUnits="userSpaceOnUse" x1="-410.0" y1="844.5" x2="-39.7" y2="-4.4"><stop offset="0" stop-color="#ffffff"/><stop offset=".25" stop-color="#dbff9c"/><stop offset=".667" stop-color="#b5ff35"/><stop offset="1" stop-color="#a2ff00"/></linearGradient><linearGradient id="n97" gradientUnits="userSpaceOnUse" x1="-410.0" y1="844.5" x2="-43.6" y2="-7.0"><stop offset="0" stop-color="#ffffff"/><stop offset=".25" stop-color="#daff9c"/><stop offset=".542" stop-color="#bdff4e"/><stop offset="1" stop-color="#a0ff00"/></linearGradient><linearGradient id="n98" gradientUnits="userSpaceOnUse" x1="-410.0" y1="844.5" x2="-47.5" y2="-9.6"><stop offset="0" stop-color="#ffffff"/><stop offset=".25" stop-color="#d9ff9c"/><stop offset=".583" stop-color="#b8ff45"/><stop offset="1" stop-color="#9eff00"/></linearGradient><linearGradient id="n99" gradientUnits="userSpaceOnUse" x1="-410.0" y1="844.5" x2="-51.4" y2="-12.2"><stop offset="0" stop-color="#ffffff"/><stop offset=".167" stop-color="#e3ffb8"/><stop offset=".5" stop-color="#beff57"/><stop offset="1" stop-color="#9cff00"/></linearGradient><linearGradient id="n100" gradientUnits="userSpaceOnUse" x1="-410.0" y1="844.5" x2="-55.3" y2="-14.8"><stop offset="0" stop-color="#ffffff"/><stop offset=".208" stop-color="#ddffa9"/><stop offset=".583" stop-color="#b5ff45"/><stop offset="1" stop-color="#9aff00"/></linearGradient><clipPath id="tri2"><path d="M1226.5 840.3L-473.5 -293.7L-1223.5 1974.3Z"/></clipPath><linearGradient id="b34" x1="0" y1="0" x2="0" y2="1"><stop offset="0" stop-color="#ff5a5a"/><stop offset="1" stop-color="#ff5050"/></linearGradient><linearGradient id="b35" x1="0" y1="0" x2="0" y2="1"><stop offset="0" stop-color="#62b462"/><stop offset="1" stop-color="#3a9e3a"/></linearGradient><linearGradient id="b36" x1="0" y1="0" x2="0" y2="1"><stop offset="0" stop-color="#5e5eff"/><stop offset="1" stop-color="#5050ff"/></linearGradient><linearGradient id="th" x1="0" y1="0" x2="0" y2="1"><stop offset="0" stop-color="#3c3c3c"/><stop offset=".5" stop-color="#343434"/><stop offset=".51" stop-color="#222"/><stop offset="1" stop-color="#131313"/></linearGradient><linearGradient id="tr0" x1="0" y1="0" x2="0" y2="1"><stop offset="0" stop-color="#474747"/><stop offset="1" stop-color="#3a3a3a"/></linearGradient><linearGradient id="tr1" x1="0" y1="0" x2="0" y2="1"><stop offset="0" stop-color="#858585"/><stop offset="1" stop-color="#777"/></linearGradient></defs><text x="28.0" y="194.5" font-size="46" text-anchor="start" fill="#f2f2f2" textLength="374.0" lengthAdjust="spacingAndGlyphs">Saturation Sweeps</text><text x="209.0" y="252.0" font-size="16" text-anchor="middle" fill="#e4e4e4" textLength="91.0" lengthAdjust="spacingAndGlyphs">DeltaE 2000</text><rect x="51.00" y="258.00" width="358.00" height="475.00" fill="#252525"/><path d="M98.30 258.00L98.30 733.00" stroke="#8c8c8c" stroke-width="1.6"/><path d="M146.30 258.00L146.30 733.00" stroke="#8c8c8c" stroke-width="1.6"/><path d="M193.30 258.00L193.30 733.00" stroke="#8c8c8c" stroke-width="1.6"/><path d="M241.30 258.00L241.30 733.00" stroke="#8c8c8c" stroke-width="1.6"/><path d="M336.30 258.00L336.30 733.00" stroke="#8c8c8c" stroke-width="1.6"/><path d="M383.30 258.00L383.30 733.00" stroke="#8c8c8c" stroke-width="1.6"/><rect x="51.50" y="265.90" width="46.98" height="7.40" fill="url(#b1)" stroke="#0a0a0a" stroke-width="1.3"/><rect x="51.50" y="275.30" width="11.13" height="7.40" fill="url(#b2)" stroke="#0a0a0a" stroke-width="1.3"/><rect x="51.50" y="284.70" width="19.44" height="7.40" fill="url(#b3)" stroke="#0a0a0a" stroke-width="1.3"/><rect x="51.50" y="294.10" width="11.13" height="7.40" fill="url(#b4)" stroke="#0a0a0a" stroke-width="1.3"/><rect x="51.50" y="303.50" width="36.06" height="7.40" fill="url(#b5)" stroke="#0a0a0a" stroke-width="1.3"/><rect x="51.50" y="312.90" width="45.56" height="7.40" fill="url(#b6)" stroke="#0a0a0a" stroke-width="1.3"/><rect x="51.50" y="345.07" width="37.72" height="7.40" fill="url(#b7)" stroke="#0a0a0a" stroke-width="1.3"/><rect x="51.50" y="354.47" width="3.77" height="7.40" fill="url(#b8)" stroke="#0a0a0a" stroke-width="1.3"/><rect x="51.50" y="363.87" width="18.97" height="7.40" fill="url(#b9)" stroke="#0a0a0a" stroke-width="1.3"/><rect x="51.50" y="373.27" width="17.07" height="7.40" fill="url(#b10)" stroke="#0a0a0a" stroke-width="1.3"/><rect x="51.50" y="382.67" width="40.57" height="7.40" fill="url(#b11)" stroke="#0a0a0a" stroke-width="1.3"/><rect x="51.50" y="392.07" width="51.49" height="7.40" fill="url(#b12)" stroke="#0a0a0a" stroke-width="1.3"/><rect x="51.50" y="424.23" width="36.06" height="7.40" fill="url(#b13)" stroke="#0a0a0a" stroke-width="1.3"/><rect x="51.50" y="433.63" width="13.74" height="7.40" fill="url(#b14)" stroke="#0a0a0a" stroke-width="1.3"/><rect x="51.50" y="443.03" width="22.05" height="7.40" fill="url(#b15)" stroke="#0a0a0a" stroke-width="1.3"/><rect x="51.50" y="452.43" width="22.53" height="7.40" fill="url(#b16)" stroke="#0a0a0a" stroke-width="1.3"/><rect x="51.50" y="461.83" width="40.57" height="7.40" fill="url(#b17)" stroke="#0a0a0a" stroke-width="1.3"/><rect x="51.50" y="471.23" width="56.24" height="7.40" fill="url(#b18)" stroke="#0a0a0a" stroke-width="1.3"/><rect x="51.50" y="503.40" width="35.82" height="7.40" fill="url(#b19)" stroke="#0a0a0a" stroke-width="1.3"/><rect x="51.50" y="512.80" width="18.49" height="7.40" fill="url(#b20)" stroke="#0a0a0a" stroke-width="1.3"/><rect x="51.50" y="522.20" width="37.48" height="7.40" fill="url(#b21)" stroke="#0a0a0a" stroke-width="1.3"/><rect x="51.50" y="531.60" width="41.99" height="7.40" fill="url(#b22)" stroke="#0a0a0a" stroke-width="1.3"/><rect x="51.50" y="541.00" width="44.13" height="7.40" fill="url(#b23)" stroke="#0a0a0a" stroke-width="1.3"/><rect x="51.50" y="550.40" width="62.41" height="7.40" fill="url(#b24)" stroke="#0a0a0a" stroke-width="1.3"/><rect x="51.50" y="582.57" width="48.17" height="7.40" fill="url(#b25)" stroke="#0a0a0a" stroke-width="1.3"/><rect x="51.50" y="591.97" width="40.57" height="7.40" fill="url(#b26)" stroke="#0a0a0a" stroke-width="1.3"/><rect x="51.50" y="601.37" width="65.97" height="7.40" fill="url(#b27)" stroke="#0a0a0a" stroke-width="1.3"/><rect x="51.50" y="610.77" width="68.11" height="7.40" fill="url(#b28)" stroke="#0a0a0a" stroke-width="1.3"/><rect x="51.50" y="620.17" width="64.55" height="7.40" fill="url(#b29)" stroke="#0a0a0a" stroke-width="1.3"/><rect x="51.50" y="629.57" width="83.06" height="7.40" fill="url(#b30)" stroke="#0a0a0a" stroke-width="1.3"/><rect x="51.50" y="718.13" width="104.91" height="7.40" fill="url(#b31)" stroke="#0a0a0a" stroke-width="1.3"/><path d="M74.74 258.00L74.74 733.00" stroke="#048204" stroke-width="1.8"/><path d="M122.22 258.00L122.22 733.00" stroke="#f2f200" stroke-width="2"/><path d="M290.10 258.00L290.10 733.00" stroke="#f40c0c" stroke-width="2.3"/><path d="M51.0 258.0H409.0V733.0" fill="none" stroke="#a2a2a2" stroke-width="1.8"/><path d="M51.0 257.0V733.0H410.0" fill="none" stroke="#c4c4c4" stroke-width="2"/><path d="M44.00 258.00L51.00 258.00" stroke="#c4c4c4" stroke-width="2"/><path d="M44.00 337.17L51.00 337.17" stroke="#c4c4c4" stroke-width="2"/><path d="M44.00 416.33L51.00 416.33" stroke="#c4c4c4" stroke-width="2"/><path d="M44.00 495.50L51.00 495.50" stroke="#c4c4c4" stroke-width="2"/><path d="M44.00 574.67L51.00 574.67" stroke="#c4c4c4" stroke-width="2"/><path d="M44.00 653.83L51.00 653.83" stroke="#c4c4c4" stroke-width="2"/><path d="M44.00 733.00L51.00 733.00" stroke="#c4c4c4" stroke-width="2"/><path d="M51.00 733.00L51.00 740.00" stroke="#c4c4c4" stroke-width="2"/><text x="51.6" y="758.0" font-size="15.8" text-anchor="middle" fill="#e4e4e4">0</text><path d="M98.00 733.00L98.00 740.00" stroke="#c4c4c4" stroke-width="2"/><text x="99.1" y="758.0" font-size="15.8" text-anchor="middle" fill="#e4e4e4">2</text><path d="M146.00 733.00L146.00 740.00" stroke="#c4c4c4" stroke-width="2"/><text x="146.6" y="758.0" font-size="15.8" text-anchor="middle" fill="#e4e4e4">4</text><path d="M193.00 733.00L193.00 740.00" stroke="#c4c4c4" stroke-width="2"/><text x="194.0" y="758.0" font-size="15.8" text-anchor="middle" fill="#e4e4e4">6</text><path d="M241.00 733.00L241.00 740.00" stroke="#c4c4c4" stroke-width="2"/><text x="241.5" y="758.0" font-size="15.8" text-anchor="middle" fill="#e4e4e4">8</text><path d="M288.00 733.00L288.00 740.00" stroke="#c4c4c4" stroke-width="2"/><text x="289.0" y="758.0" font-size="15.8" text-anchor="middle" fill="#e4e4e4" textLength="17.6" lengthAdjust="spacingAndGlyphs">10</text><path d="M336.00 733.00L336.00 740.00" stroke="#c4c4c4" stroke-width="2"/><text x="336.5" y="758.0" font-size="15.8" text-anchor="middle" fill="#e4e4e4" textLength="17.6" lengthAdjust="spacingAndGlyphs">12</text><path d="M383.00 733.00L383.00 740.00" stroke="#c4c4c4" stroke-width="2"/><text x="384.0" y="758.0" font-size="15.8" text-anchor="middle" fill="#e4e4e4" textLength="17.6" lengthAdjust="spacingAndGlyphs">14</text><text x="49.2" y="304.8" font-size="15.8" text-anchor="end" fill="#e4e4e4">100%</text><text x="49.2" y="383.9" font-size="15.8" text-anchor="end" fill="#e4e4e4">80%</text><text x="49.2" y="463.1" font-size="15.8" text-anchor="end" fill="#e4e4e4">60%</text><text x="49.2" y="542.3" font-size="15.8" text-anchor="end" fill="#e4e4e4">40%</text><text x="49.2" y="621.5" font-size="15.8" text-anchor="end" fill="#e4e4e4">20%</text><text x="49.2" y="700.6" font-size="15.8" text-anchor="end" fill="#e4e4e4">100</text><rect x="470.00" y="181.00" width="166.00" height="364.00" fill="#252525"/><path d="M470.00 242.00L636.00 242.00" stroke="#8e8e8e" stroke-width="2"/><path d="M470.00 302.00L636.00 302.00" stroke="#8e8e8e" stroke-width="2"/><path d="M470.00 363.00L636.00 363.00" stroke="#8e8e8e" stroke-width="2"/><path d="M470.00 424.00L636.00 424.00" stroke="#8e8e8e" stroke-width="2"/><path d="M470.00 484.00L636.00 484.00" stroke="#8e8e8e" stroke-width="2"/><rect x="487.00" y="361.80" width="132.00" height="2.40" fill="#0a0a0a"/><path d="M470.0 551.0V181.0H636.0V551.0" fill="none" stroke="#9c9c9c" stroke-width="2"/><path d="M469.00 180.00L637.00 180.00" stroke="#8a8a8a" stroke-width="3.4"/><path d="M469.00 545.00L637.00 545.00" stroke="#a8a8a8" stroke-width="2"/><path d="M463.00 181.00L470.00 181.00" stroke="#c4c4c4" stroke-width="2"/><text x="462.5" y="187.3" font-size="15.8" text-anchor="end" fill="#e4e4e4">15</text><path d="M463.00 242.00L470.00 242.00" stroke="#c4c4c4" stroke-width="2"/><text x="462.5" y="248.3" font-size="15.8" text-anchor="end" fill="#e4e4e4">10</text><path d="M463.00 302.00L470.00 302.00" stroke="#c4c4c4" stroke-width="2"/><text x="462.5" y="308.3" font-size="15.8" text-anchor="end" fill="#e4e4e4">5</text><path d="M463.00 363.00L470.00 363.00" stroke="#c4c4c4" stroke-width="2"/><text x="462.5" y="369.3" font-size="15.8" text-anchor="end" fill="#e4e4e4">0</text><path d="M463.00 424.00L470.00 424.00" stroke="#c4c4c4" stroke-width="2"/><text x="462.5" y="430.3" font-size="15.8" text-anchor="end" fill="#e4e4e4">-5</text><path d="M463.00 484.00L470.00 484.00" stroke="#c4c4c4" stroke-width="2"/><text x="462.5" y="490.3" font-size="15.8" text-anchor="end" fill="#e4e4e4">-10</text><path d="M463.00 545.00L470.00 545.00" stroke="#c4c4c4" stroke-width="2"/><text x="462.5" y="551.3" font-size="15.8" text-anchor="end" fill="#e4e4e4">-15</text><text x="552.5" y="561.5" font-size="15.8" text-anchor="middle" fill="#e4e4e4">100%</text><text x="537.0" y="173.0" font-size="16" text-anchor="middle" fill="#e4e4e4">Delta L</text><rect x="697.00" y="181.00" width="166.00" height="364.00" fill="#252525"/><path d="M697.00 242.00L863.00 242.00" stroke="#8e8e8e" stroke-width="2"/><path d="M697.00 302.00L863.00 302.00" stroke="#8e8e8e" stroke-width="2"/><path d="M697.00 363.00L863.00 363.00" stroke="#8e8e8e" stroke-width="2"/><path d="M697.00 424.00L863.00 424.00" stroke="#8e8e8e" stroke-width="2"/><path d="M697.00 484.00L863.00 484.00" stroke="#8e8e8e" stroke-width="2"/><rect x="714.00" y="344.19" width="132.00" height="18.81" fill="url(#b32)" stroke="#0a0a0a" stroke-width="1.3"/><path d="M697.0 551.0V181.0H863.0V551.0" fill="none" stroke="#9c9c9c" stroke-width="2"/><path d="M696.00 180.00L864.00 180.00" stroke="#8a8a8a" stroke-width="3.4"/><path d="M696.00 545.00L864.00 545.00" stroke="#a8a8a8" stroke-width="2"/><path d="M690.00 181.00L697.00 181.00" stroke="#c4c4c4" stroke-width="2"/><text x="689.5" y="187.3" font-size="15.8" text-anchor="end" fill="#e4e4e4">15</text><path d="M690.00 242.00L697.00 242.00" stroke="#c4c4c4" stroke-width="2"/><text x="689.5" y="248.3" font-size="15.8" text-anchor="end" fill="#e4e4e4">10</text><path d="M690.00 302.00L697.00 302.00" stroke="#c4c4c4" stroke-width="2"/><text x="689.5" y="308.3" font-size="15.8" text-anchor="end" fill="#e4e4e4">5</text><path d="M690.00 363.00L697.00 363.00" stroke="#c4c4c4" stroke-width="2"/><text x="689.5" y="369.3" font-size="15.8" text-anchor="end" fill="#e4e4e4">0</text><path d="M690.00 424.00L697.00 424.00" stroke="#c4c4c4" stroke-width="2"/><text x="689.5" y="430.3" font-size="15.8" text-anchor="end" fill="#e4e4e4">-5</text><path d="M690.00 484.00L697.00 484.00" stroke="#c4c4c4" stroke-width="2"/><text x="689.5" y="490.3" font-size="15.8" text-anchor="end" fill="#e4e4e4">-10</text><path d="M690.00 545.00L697.00 545.00" stroke="#c4c4c4" stroke-width="2"/><text x="689.5" y="551.3" font-size="15.8" text-anchor="end" fill="#e4e4e4">-15</text><text x="779.5" y="561.5" font-size="15.8" text-anchor="middle" fill="#e4e4e4">100%</text><text x="764.0" y="173.0" font-size="16" text-anchor="middle" fill="#e4e4e4">Delta C</text><rect x="924.00" y="181.00" width="166.00" height="364.00" fill="#252525"/><path d="M924.00 242.00L1090.00 242.00" stroke="#8e8e8e" stroke-width="2"/><path d="M924.00 302.00L1090.00 302.00" stroke="#8e8e8e" stroke-width="2"/><path d="M924.00 363.00L1090.00 363.00" stroke="#8e8e8e" stroke-width="2"/><path d="M924.00 424.00L1090.00 424.00" stroke="#8e8e8e" stroke-width="2"/><path d="M924.00 484.00L1090.00 484.00" stroke="#8e8e8e" stroke-width="2"/><rect x="941.00" y="317.50" width="132.00" height="45.50" fill="url(#b33)" stroke="#0a0a0a" stroke-width="1.3"/><path d="M924.0 551.0V181.0H1090.0V551.0" fill="none" stroke="#9c9c9c" stroke-width="2"/><path d="M923.00 180.00L1091.00 180.00" stroke="#8a8a8a" stroke-width="3.4"/><path d="M923.00 545.00L1091.00 545.00" stroke="#a8a8a8" stroke-width="2"/><path d="M917.00 181.00L924.00 181.00" stroke="#c4c4c4" stroke-width="2"/><text x="916.5" y="187.3" font-size="15.8" text-anchor="end" fill="#e4e4e4">15</text><path d="M917.00 242.00L924.00 242.00" stroke="#c4c4c4" stroke-width="2"/><text x="916.5" y="248.3" font-size="15.8" text-anchor="end" fill="#e4e4e4">10</text><path d="M917.00 302.00L924.00 302.00" stroke="#c4c4c4" stroke-width="2"/><text x="916.5" y="308.3" font-size="15.8" text-anchor="end" fill="#e4e4e4">5</text><path d="M917.00 363.00L924.00 363.00" stroke="#c4c4c4" stroke-width="2"/><text x="916.5" y="369.3" font-size="15.8" text-anchor="end" fill="#e4e4e4">0</text><path d="M917.00 424.00L924.00 424.00" stroke="#c4c4c4" stroke-width="2"/><text x="916.5" y="430.3" font-size="15.8" text-anchor="end" fill="#e4e4e4">-5</text><path d="M917.00 484.00L924.00 484.00" stroke="#c4c4c4" stroke-width="2"/><text x="916.5" y="490.3" font-size="15.8" text-anchor="end" fill="#e4e4e4">-10</text><path d="M917.00 545.00L924.00 545.00" stroke="#c4c4c4" stroke-width="2"/><text x="916.5" y="551.3" font-size="15.8" text-anchor="end" fill="#e4e4e4">-15</text><text x="1006.5" y="561.5" font-size="15.8" text-anchor="middle" fill="#e4e4e4">100%</text><text x="991.0" y="173.0" font-size="16" text-anchor="middle" fill="#e4e4e4">Delta H</text><rect x="432.00" y="582.00" width="680.50" height="187.00" fill="#000"/><rect x="455.50" y="590.00" width="114.80" height="77.00" fill="#b8c2a5"/><rect x="455.50" y="667.00" width="114.80" height="75.70" fill="#c0c0a2"/><rect x="456.0" y="590.5" width="113.8" height="152" fill="none" stroke="#f0f0e8" stroke-width="1.2"/><text x="512.9" y="759.5" font-size="13.6" text-anchor="middle" fill="#fff">20%</text><rect x="588.60" y="590.00" width="114.80" height="77.00" fill="#b9c389"/><rect x="588.60" y="667.00" width="114.80" height="75.70" fill="#c1c088"/><rect x="589.1" y="590.5" width="113.8" height="152" fill="none" stroke="#f0f0e8" stroke-width="1.2"/><text x="646.0" y="759.5" font-size="13.6" text-anchor="middle" fill="#fff">40%</text><rect x="721.80" y="590.00" width="114.00" height="77.00" fill="#b8c270"/><rect x="721.80" y="667.00" width="114.00" height="75.70" fill="#c1c06f"/><rect x="722.3" y="590.5" width="113.0" height="152" fill="none" stroke="#f0f0e8" stroke-width="1.2"/><text x="778.8" y="759.5" font-size="13.6" text-anchor="middle" fill="#fff">60%</text><rect x="854.90" y="590.00" width="114.00" height="77.00" fill="#b9c050"/><rect x="854.90" y="667.00" width="114.00" height="75.70" fill="#c2be4e"/><rect x="855.4" y="590.5" width="113.0" height="152" fill="none" stroke="#f0f0e8" stroke-width="1.2"/><text x="911.9" y="759.5" font-size="13.6" text-anchor="middle" fill="#fff">80%</text><rect x="987.30" y="590.00" width="114.40" height="77.00" fill="#bcc200"/><rect x="987.30" y="667.00" width="114.40" height="75.70" fill="#c4c20c"/><rect x="987.8" y="590.5" width="113.4" height="152" fill="none" stroke="#f0f0e8" stroke-width="1.2"/><text x="1044.5" y="759.5" font-size="13.6" text-anchor="middle" fill="#fff">100%</text><text transform="translate(446 623.5) rotate(-90)" font-size="14.4" text-anchor="middle" fill="#fff">Actual</text><text transform="translate(446 708.5) rotate(-90)" font-size="14.4" text-anchor="middle" fill="#fff">Target</text><rect x="1120.00" y="143.00" width="798.00" height="641.50" fill="#1e1e1e"/><rect x="1128.00" y="150.60" width="782.00" height="626.70" fill="#333"/><text x="1519.0" y="172.5" font-size="16" text-anchor="middle" fill="#e4e4e4" textLength="88.0" lengthAdjust="spacingAndGlyphs">CIE 1931 xy</text><rect x="1162.00" y="178.50" width="745.00" height="565.50" fill="#252525"/><g clip-path="url(#plotclip)"><g shape-rendering="crispEdges"><path d="M1728.32 521.24L2813.88 1175.59L3292.81 -133.11Z" fill="#990000"/><path d="M1426.77 339.48L341.20 -314.87L1905.70 -969.22Z" fill="#009900"/><path d="M1293.74 703.01L-270.76 1357.36L814.81 2011.71Z" fill="#000099"/><path d="M1293.74 703.01L2225.87 313.14L2222.29 308.25Z" fill="#990000"/><path d="M1293.74 703.01L2222.29 308.25L2218.67 303.38Z" fill="#990100"/><path d="M1293.74 703.01L2218.67 303.38L2215.00 298.53Z" fill="#990200"/><path d="M1293.74 703.01L2215.00 298.53L2211.29 293.70Z" fill="#990300"/><path d="M1293.74 703.01L2211.29 293.70L2207.54 288.89Z" fill="#990400"/><path d="M1293.74 703.01L2207.54 288.89L2203.74 284.09Z" fill="#990500"/><path d="M1293.74 703.01L2203.74 284.09L2199.89 279.32Z" fill="#990500"/><path d="M1293.74 703.01L2199.89 279.32L2196.01 274.57Z" fill="#990600"/><path d="M1293.74 703.01L2196.01 274.57L2192.08 269.84Z" fill="#990700"/><path d="M1293.74 703.01L2192.08 269.84L2188.11 265.13Z" fill="#990800"/><path d="M1293.74 703.01L2188.11 265.13L2184.09 260.44Z" fill="#990900"/><path d="M1293.74 703.01L2184.09 260.44L2180.03 255.77Z" fill="#990a00"/><path d="M1293.74 703.01L2180.03 255.77L2175.93 251.12Z" fill="#990b00"/><path d="M1293.74 703.01L2175.93 251.12L2171.79 246.50Z" fill="#990c00"/><path d="M1293.74 703.01L2171.79 246.50L2167.60 241.89Z" fill="#990d00"/><path d="M1293.74 703.01L2167.60 241.89L2163.38 237.31Z" fill="#990e00"/><path d="M1293.74 703.01L2163.38 237.31L2159.11 232.75Z" fill="#990f00"/><path d="M1293.74 703.01L2159.11 232.75L2154.80 228.21Z" fill="#991000"/><path d="M1293.74 703.01L2154.80 228.21L2150.45 223.70Z" fill="#991100"/><path d="M1293.74 703.01L2150.45 223.70L2146.05 219.21Z" fill="#991200"/><path d="M1293.74 703.01L2146.05 219.21L2141.62 214.74Z" fill="#991300"/><path d="M1293.74 703.01L2141.62 214.74L2137.15 210.30Z" fill="#991400"/><path d="M1293.74 703.01L2137.15 210.30L2132.63 205.88Z" fill="#991500"/><path d="M1293.74 703.01L2132.63 205.88L2128.08 201.48Z" fill="#991700"/><path d="M1293.74 703.01L2128.08 201.48L2123.48 197.11Z" fill="#991800"/><path d="M1293.74 703.01L2123.48 197.11L2118.85 192.76Z" fill="#991900"/><path d="M1293.74 703.01L2118.85 192.76L2114.17 188.44Z" fill="#991a00"/><path d="M1293.74 703.01L2114.17 188.44L2109.46 184.14Z" fill="#991b00"/><path d="M1293.74 703.01L2109.46 184.14L2104.71 179.86Z" fill="#991d00"/><path d="M1293.74 703.01L2104.71 179.86L2099.92 175.61Z" fill="#991e00"/><path d="M1293.74 703.01L2099.92 175.61L2095.09 171.39Z" fill="#991f00"/><path d="M1293.74 703.01L2095.09 171.39L2090.22 167.19Z" fill="#992100"/><path d="M1293.74 703.01L2090.22 167.19L2085.31 163.02Z" fill="#992200"/><path d="M1293.74 703.01L2085.31 163.02L2080.37 158.87Z" fill="#992400"/><path d="M1293.74 703.01L2080.37 158.87L2075.38 154.75Z" fill="#992500"/><path d="M1293.74 703.01L2075.38 154.75L2070.37 150.65Z" fill="#992600"/><path d="M1293.74 703.01L2070.37 150.65L2065.31 146.59Z" fill="#992800"/><path d="M1293.74 703.01L2065.31 146.59L2060.21 142.54Z" fill="#992900"/><path d="M1293.74 703.01L2060.21 142.54L2055.08 138.53Z" fill="#992b00"/><path d="M1293.74 703.01L2055.08 138.53L2049.92 134.54Z" fill="#992d00"/><path d="M1293.74 703.01L2049.92 134.54L2044.71 130.58Z" fill="#992e00"/><path d="M1293.74 703.01L2044.71 130.58L2039.47 126.65Z" fill="#993000"/><path d="M1293.74 703.01L2039.47 126.65L2034.20 122.74Z" fill="#993200"/><path d="M1293.74 703.01L2034.20 122.74L2028.89 118.87Z" fill="#993400"/><path d="M1293.74 703.01L2028.89 118.87L2023.54 115.02Z" fill="#993500"/><path d="M1293.74 703.01L2023.54 115.02L2018.16 111.19Z" fill="#993700"/><path d="M1293.74 703.01L2018.16 111.19L2012.75 107.40Z" fill="#993900"/><path d="M1293.74 703.01L2012.75 107.40L2007.30 103.64Z" fill="#993b00"/><path d="M1293.74 703.01L2007.30 103.64L2001.81 99.90Z" fill="#993d00"/><path d="M1293.74 703.01L2001.81 99.90L1996.29 96.19Z" fill="#993f00"/><path d="M1293.74 703.01L1996.29 96.19L1990.74 92.52Z" fill="#994200"/><path d="M1293.74 703.01L1990.74 92.52L1985.16 88.87Z" fill="#994400"/><path d="M1293.74 703.01L1985.16 88.87L1979.54 85.25Z" fill="#994600"/><path d="M1293.74 703.01L1979.54 85.25L1973.89 81.66Z" fill="#994800"/><path d="M1293.74 703.01L1973.89 81.66L1968.20 78.10Z" fill="#994b00"/><path d="M1293.74 703.01L1968.20 78.10L1962.49 74.57Z" fill="#994d00"/><path d="M1293.74 703.01L1962.49 74.57L1956.74 71.07Z" fill="#995000"/><path d="M1293.74 703.01L1956.74 71.07L1950.96 67.60Z" fill="#995300"/><path d="M1293.74 703.01L1950.96 67.60L1945.15 64.16Z" fill="#995500"/><path d="M1293.74 703.01L1945.15 64.16L1939.30 60.76Z" fill="#995800"/><path d="M1293.74 703.01L1939.30 60.76L1933.43 57.38Z" fill="#995b00"/><path d="M1293.74 703.01L1933.43 57.38L1927.53 54.03Z" fill="#995e00"/><path d="M1293.74 703.01L1927.53 54.03L1921.59 50.72Z" fill="#996100"/><path d="M1293.74 703.01L1921.59 50.72L1915.63 47.43Z" fill="#996500"/><path d="M1293.74 703.01L1915.63 47.43L1909.63 44.18Z" fill="#996800"/><path d="M1293.74 703.01L1909.63 44.18L1903.61 40.96Z" fill="#996c00"/><path d="M1293.74 703.01L1903.61 40.96L1897.55 37.77Z" fill="#996f00"/><path d="M1293.74 703.01L1897.55 37.77L1891.47 34.61Z" fill="#997300"/><path d="M1293.74 703.01L1891.47 34.61L1885.36 31.49Z" fill="#997700"/><path d="M1293.74 703.01L1885.36 31.49L1879.22 28.39Z" fill="#997b00"/><path d="M1293.74 703.01L1879.22 28.39L1873.05 25.33Z" fill="#998000"/><path d="M1293.74 703.01L1873.05 25.33L1866.86 22.31Z" fill="#998400"/><path d="M1293.74 703.01L1866.86 22.31L1860.64 19.31Z" fill="#998900"/><path d="M1293.74 703.01L1860.64 19.31L1854.39 16.35Z" fill="#998e00"/><path d="M1293.74 703.01L1854.39 16.35L1848.11 13.42Z" fill="#999300"/><path d="M1293.74 703.01L1848.11 13.42L1841.81 10.52Z" fill="#999900"/><path d="M1293.74 703.01L1841.81 10.52L1835.48 7.66Z" fill="#949900"/><path d="M1293.74 703.01L1835.48 7.66L1829.12 4.83Z" fill="#8e9900"/><path d="M1293.74 703.01L1829.12 4.83L1822.74 2.03Z" fill="#899900"/><path d="M1293.74 703.01L1822.74 2.03L1816.33 -0.73Z" fill="#849900"/><path d="M1293.74 703.01L1816.33 -0.73L1809.90 -3.46Z" fill="#7f9900"/><path d="M1293.74 703.01L1809.90 -3.46L1803.44 -6.16Z" fill="#7a9900"/><path d="M1293.74 703.01L1803.44 -6.16L1796.96 -8.82Z" fill="#759900"/><path d="M1293.74 703.01L1796.96 -8.82L1790.46 -11.45Z" fill="#709900"/><path d="M1293.74 703.01L1790.46 -11.45L1783.93 -14.04Z" fill="#6c9900"/><path d="M1293.74 703.01L1783.93 -14.04L1777.38 -16.60Z" fill="#679900"/><path d="M1293.74 703.01L1777.38 -16.60L1770.80 -19.13Z" fill="#639900"/><path d="M1293.74 703.01L1770.80 -19.13L1764.20 -21.62Z" fill="#5e9900"/><path d="M1293.74 703.01L1764.20 -21.62L1757.58 -24.07Z" fill="#5a9900"/><path d="M1293.74 703.01L1757.58 -24.07L1750.94 -26.49Z" fill="#569900"/><path d="M1293.74 703.01L1750.94 -26.49L1744.27 -28.88Z" fill="#529900"/><path d="M1293.74 703.01L1744.27 -28.88L1737.59 -31.23Z" fill="#4e9900"/><path d="M1293.74 703.01L1737.59 -31.23L1730.88 -33.54Z" fill="#4a9900"/><path d="M1293.74 703.01L1730.88 -33.54L1724.15 -35.82Z" fill="#469900"/><path d="M1293.74 703.01L1724.15 -35.82L1717.40 -38.07Z" fill="#429900"/><path d="M1293.74 703.01L1717.40 -38.07L1710.63 -40.27Z" fill="#3e9900"/><path d="M1293.74 703.01L1710.63 -40.27L1703.84 -42.45Z" fill="#3a9900"/><path d="M1293.74 703.01L1703.84 -42.45L1697.03 -44.58Z" fill="#379900"/><path d="M1293.74 703.01L1697.03 -44.58L1690.20 -46.69Z" fill="#339900"/><path d="M1293.74 703.01L1690.20 -46.69L1683.36 -48.75Z" fill="#309900"/><path d="M1293.74 703.01L1683.36 -48.75L1676.49 -50.78Z" fill="#2c9900"/><path d="M1293.74 703.01L1676.49 -50.78L1669.60 -52.77Z" fill="#299900"/><path d="M1293.74 703.01L1669.60 -52.77L1662.70 -54.73Z" fill="#269900"/><path d="M1293.74 703.01L1662.70 -54.73L1655.78 -56.65Z" fill="#229900"/><path d="M1293.74 703.01L1655.78 -56.65L1648.84 -58.54Z" fill="#1f9900"/><path d="M1293.74 703.01L1648.84 -58.54L1641.89 -60.39Z" fill="#1c9900"/><path d="M1293.74 703.01L1641.89 -60.39L1634.92 -62.20Z" fill="#199900"/><path d="M1293.74 703.01L1634.92 -62.20L1627.93 -63.97Z" fill="#169900"/><path d="M1293.74 703.01L1627.93 -63.97L1620.92 -65.71Z" fill="#139900"/><path d="M1293.74 703.01L1620.92 -65.71L1613.90 -67.41Z" fill="#109900"/><path d="M1293.74 703.01L1613.90 -67.41L1606.87 -69.07Z" fill="#0d9900"/><path d="M1293.74 703.01L1606.87 -69.07L1599.82 -70.70Z" fill="#0a9900"/><path d="M1293.74 703.01L1599.82 -70.70L1592.76 -72.29Z" fill="#079900"/><path d="M1293.74 703.01L1592.76 -72.29L1585.68 -73.84Z" fill="#049900"/><path d="M1293.74 703.01L1585.68 -73.84L1578.58 -75.36Z" fill="#019900"/><path d="M1728.32 521.24L894.87 18.86L890.29 23.27Z" fill="#009900"/><path d="M1728.32 521.24L890.29 23.27L885.75 27.71Z" fill="#009901"/><path d="M1728.32 521.24L885.75 27.71L881.25 32.16Z" fill="#009902"/><path d="M1728.32 521.24L881.25 32.16L876.79 36.65Z" fill="#009903"/><path d="M1728.32 521.24L876.79 36.65L872.37 41.15Z" fill="#009904"/><path d="M1728.32 521.24L872.37 41.15L867.99 45.68Z" fill="#009905"/><path d="M1728.32 521.24L867.99 45.68L863.66 50.23Z" fill="#009906"/><path d="M1728.32 521.24L863.66 50.23L859.37 54.80Z" fill="#009907"/><path d="M1728.32 521.24L859.37 54.80L855.12 59.40Z" fill="#009908"/><path d="M1728.32 521.24L855.12 59.40L850.91 64.02Z" fill="#009909"/><path d="M1728.32 521.24L850.91 64.02L846.74 68.66Z" fill="#00990a"/><path d="M1728.32 521.24L846.74 68.66L842.62 73.32Z" fill="#00990b"/><path d="M1728.32 521.24L842.62 73.32L838.54 78.00Z" fill="#00990c"/><path d="M1728.32 521.24L838.54 78.00L834.50 82.71Z" fill="#00990c"/><path d="M1728.32 521.24L834.50 82.71L830.51 87.44Z" fill="#00990d"/><path d="M1728.32 521.24L830.51 87.44L826.56 92.18Z" fill="#00990e"/><path d="M1728.32 521.24L826.56 92.18L822.65 96.95Z" fill="#00990f"/><path d="M1728.32 521.24L822.65 96.95L818.78 101.74Z" fill="#009910"/><path d="M1728.32 521.24L818.78 101.74L814.96 106.55Z" fill="#009911"/><path d="M1728.32 521.24L814.96 106.55L811.19 111.38Z" fill="#009912"/><path d="M1728.32 521.24L811.19 111.38L807.46 116.23Z" fill="#009913"/><path d="M1728.32 521.24L807.46 116.23L803.77 121.10Z" fill="#009914"/><path d="M1728.32 521.24L803.77 121.10L800.13 125.98Z" fill="#009916"/><path d="M1728.32 521.24L800.13 125.98L796.53 130.89Z" fill="#009917"/><path d="M1728.32 521.24L796.53 130.89L792.98 135.82Z" fill="#009918"/><path d="M1728.32 521.24L792.98 135.82L789.47 140.76Z" fill="#009919"/><path d="M1728.32 521.24L789.47 140.76L786.01 145.72Z" fill="#00991a"/><path d="M1728.32 521.24L786.01 145.72L782.59 150.71Z" fill="#00991b"/><path d="M1728.32 521.24L782.59 150.71L779.22 155.70Z" fill="#00991c"/><path d="M1728.32 521.24L779.22 155.70L775.90 160.72Z" fill="#00991d"/><path d="M1728.32 521.24L775.90 160.72L772.62 165.75Z" fill="#00991e"/><path d="M1728.32 521.24L772.62 165.75L769.39 170.81Z" fill="#00991f"/><path d="M1728.32 521.24L769.39 170.81L766.20 175.87Z" fill="#009920"/><path d="M1728.32 521.24L766.20 175.87L763.06 180.96Z" fill="#009922"/><path d="M1728.32 521.24L763.06 180.96L759.97 186.06Z" fill="#009923"/><path d="M1728.32 521.24L759.97 186.06L756.92 191.18Z" fill="#009924"/><path d="M1728.32 521.24L756.92 191.18L753.92 196.31Z" fill="#009925"/><path d="M1728.32 521.24L753.92 196.31L750.97 201.46Z" fill="#009926"/><path d="M1728.32 521.24L750.97 201.46L748.07 206.62Z" fill="#009927"/><path d="M1728.32 521.24L748.07 206.62L745.21 211.80Z" fill="#009929"/><path d="M1728.32 521.24L745.21 211.80L742.40 217.00Z" fill="#00992a"/><path d="M1728.32 521.24L742.40 217.00L739.64 222.21Z" fill="#00992b"/><path d="M1728.32 521.24L739.64 222.21L736.92 227.43Z" fill="#00992c"/><path d="M1728.32 521.24L736.92 227.43L734.26 232.67Z" fill="#00992e"/><path d="M1728.32 521.24L734.26 232.67L731.64 237.92Z" fill="#00992f"/><path d="M1728.32 521.24L731.64 237.92L729.07 243.19Z" fill="#009930"/><path d="M1728.32 521.24L729.07 243.19L726.54 248.47Z" fill="#009932"/><path d="M1728.32 521.24L726.54 248.47L724.07 253.76Z" fill="#009933"/><path d="M1728.32 521.24L724.07 253.76L721.64 259.06Z" fill="#009934"/><path d="M1728.32 521.24L721.64 259.06L719.27 264.38Z" fill="#009936"/><path d="M1728.32 521.24L719.27 264.38L716.94 269.71Z" fill="#009937"/><path d="M1728.32 521.24L716.94 269.71L714.66 275.05Z" fill="#009939"/><path d="M1728.32 521.24L714.66 275.05L712.43 280.41Z" fill="#00993a"/><path d="M1728.32 521.24L712.43 280.41L710.25 285.77Z" fill="#00993b"/><path d="M1728.32 521.24L710.25 285.77L708.12 291.15Z" fill="#00993d"/><path d="M1728.32 521.24L708.12 291.15L706.04 296.54Z" fill="#00993e"/><path d="M1728.32 521.24L706.04 296.54L704.00 301.94Z" fill="#009940"/><path d="M1728.32 521.24L704.00 301.94L702.02 307.35Z" fill="#009941"/><path d="M1728.32 521.24L702.02 307.35L700.09 312.77Z" fill="#009943"/><path d="M1728.32 521.24L700.09 312.77L698.20 318.20Z" fill="#009945"/><path d="M1728.32 521.24L698.20 318.20L696.37 323.64Z" fill="#009946"/><path d="M1728.32 521.24L696.37 323.64L694.58 329.09Z" fill="#009948"/><path d="M1728.32 521.24L694.58 329.09L692.85 334.55Z" fill="#009949"/><path d="M1728.32 521.24L692.85 334.55L691.16 340.02Z" fill="#00994b"/><path d="M1728.32 521.24L691.16 340.02L689.53 345.49Z" fill="#00994d"/><path d="M1728.32 521.24L689.53 345.49L687.94 350.98Z" fill="#00994e"/><path d="M1728.32 521.24L687.94 350.98L686.41 356.47Z" fill="#009950"/><path d="M1728.32 521.24L686.41 356.47L684.93 361.97Z" fill="#009952"/><path d="M1728.32 521.24L684.93 361.97L683.49 367.48Z" fill="#009954"/><path d="M1728.32 521.24L683.49 367.48L682.11 373.00Z" fill="#009956"/><path d="M1728.32 521.24L682.11 373.00L680.78 378.52Z" fill="#009958"/><path d="M1728.32 521.24L680.78 378.52L679.50 384.05Z" fill="#009959"/><path d="M1728.32 521.24L679.50 384.05L678.26 389.59Z" fill="#00995b"/><path d="M1728.32 521.24L678.26 389.59L677.08 395.14Z" fill="#00995d"/><path d="M1728.32 521.24L677.08 395.14L675.95 400.68Z" fill="#00995f"/><path d="M1728.32 521.24L675.95 400.68L674.88 406.24Z" fill="#009961"/><path d="M1728.32 521.24L674.88 406.24L673.85 411.80Z" fill="#009963"/><path d="M1728.32 521.24L673.85 411.80L672.87 417.37Z" fill="#009966"/><path d="M1728.32 521.24L672.87 417.37L671.95 422.94Z" fill="#009968"/><path d="M1728.32 521.24L671.95 422.94L671.07 428.52Z" fill="#00996a"/><path d="M1728.32 521.24L671.07 428.52L670.25 434.10Z" fill="#00996c"/><path d="M1728.32 521.24L670.25 434.10L669.47 439.68Z" fill="#00996e"/><path d="M1728.32 521.24L669.47 439.68L668.75 445.27Z" fill="#009971"/><path d="M1728.32 521.24L668.75 445.27L668.08 450.86Z" fill="#009973"/><path d="M1728.32 521.24L668.08 450.86L667.46 456.46Z" fill="#009976"/><path d="M1728.32 521.24L667.46 456.46L666.90 462.06Z" fill="#009978"/><path d="M1728.32 521.24L666.90 462.06L666.38 467.66Z" fill="#00997b"/><path d="M1728.32 521.24L666.38 467.66L665.91 473.26Z" fill="#00997d"/><path d="M1728.32 521.24L665.91 473.26L665.50 478.87Z" fill="#009980"/><path d="M1728.32 521.24L665.50 478.87L665.14 484.48Z" fill="#009983"/><path d="M1728.32 521.24L665.14 484.48L664.83 490.09Z" fill="#009985"/><path d="M1728.32 521.24L664.83 490.09L664.57 495.70Z" fill="#009988"/><path d="M1728.32 521.24L664.57 495.70L664.36 501.31Z" fill="#00998b"/><path d="M1728.32 521.24L664.36 501.31L664.20 506.93Z" fill="#00998e"/><path d="M1728.32 521.24L664.20 506.93L664.10 512.54Z" fill="#009991"/><path d="M1728.32 521.24L664.10 512.54L664.04 518.16Z" fill="#009994"/><path d="M1728.32 521.24L664.04 518.16L664.04 523.77Z" fill="#009997"/><path d="M1728.32 521.24L664.04 523.77L664.09 529.39Z" fill="#009799"/><path d="M1728.32 521.24L664.09 529.39L664.19 535.00Z" fill="#009499"/><path d="M1728.32 521.24L664.19 535.00L664.34 540.62Z" fill="#009199"/><path d="M1728.32 521.24L664.34 540.62L664.55 546.23Z" fill="#008e99"/><path d="M1728.32 521.24L664.55 546.23L664.80 551.84Z" fill="#008b99"/><path d="M1728.32 521.24L664.80 551.84L665.11 557.46Z" fill="#008899"/><path d="M1728.32 521.24L665.11 557.46L665.46 563.06Z" fill="#008599"/><path d="M1728.32 521.24L665.46 563.06L665.87 568.67Z" fill="#008299"/><path d="M1728.32 521.24L665.87 568.67L666.33 574.28Z" fill="#007f99"/><path d="M1728.32 521.24L666.33 574.28L666.84 579.88Z" fill="#007c99"/><path d="M1728.32 521.24L666.84 579.88L667.41 585.48Z" fill="#007999"/><path d="M1728.32 521.24L667.41 585.48L668.02 591.07Z" fill="#007799"/><path d="M1728.32 521.24L668.02 591.07L668.68 596.67Z" fill="#007499"/><path d="M1728.32 521.24L668.68 596.67L669.40 602.26Z" fill="#007199"/><path d="M1728.32 521.24L669.40 602.26L670.17 607.84Z" fill="#006f99"/><path d="M1728.32 521.24L670.17 607.84L670.99 613.42Z" fill="#006c99"/><path d="M1728.32 521.24L670.99 613.42L671.86 619.00Z" fill="#006a99"/><path d="M1728.32 521.24L671.86 619.00L672.78 624.57Z" fill="#006799"/><path d="M1728.32 521.24L672.78 624.57L673.75 630.14Z" fill="#006599"/><path d="M1728.32 521.24L673.75 630.14L674.77 635.70Z" fill="#006299"/><path d="M1728.32 521.24L674.77 635.70L675.85 641.26Z" fill="#006099"/><path d="M1728.32 521.24L675.85 641.26L676.97 646.81Z" fill="#005d99"/><path d="M1728.32 521.24L676.97 646.81L678.15 652.35Z" fill="#005b99"/><path d="M1728.32 521.24L678.15 652.35L679.37 657.89Z" fill="#005999"/><path d="M1728.32 521.24L679.37 657.89L680.65 663.42Z" fill="#005699"/><path d="M1728.32 521.24L680.65 663.42L681.98 668.94Z" fill="#005499"/><path d="M1728.32 521.24L681.98 668.94L683.35 674.46Z" fill="#005299"/><path d="M1728.32 521.24L683.35 674.46L684.78 679.97Z" fill="#005099"/><path d="M1728.32 521.24L684.78 679.97L686.26 685.47Z" fill="#004d99"/><path d="M1728.32 521.24L686.26 685.47L687.79 690.97Z" fill="#004b99"/><path d="M1728.32 521.24L687.79 690.97L689.37 696.45Z" fill="#004999"/><path d="M1728.32 521.24L689.37 696.45L691.00 701.93Z" fill="#004799"/><path d="M1728.32 521.24L691.00 701.93L692.68 707.40Z" fill="#004599"/><path d="M1728.32 521.24L692.68 707.40L694.41 712.86Z" fill="#004399"/><path d="M1728.32 521.24L694.41 712.86L696.19 718.31Z" fill="#004199"/><path d="M1728.32 521.24L696.19 718.31L698.02 723.75Z" fill="#003f99"/><path d="M1728.32 521.24L698.02 723.75L699.90 729.18Z" fill="#003d99"/><path d="M1728.32 521.24L699.90 729.18L701.83 734.60Z" fill="#003b99"/><path d="M1728.32 521.24L701.83 734.60L703.80 740.01Z" fill="#003999"/><path d="M1728.32 521.24L703.80 740.01L705.83 745.41Z" fill="#003799"/><path d="M1728.32 521.24L705.83 745.41L707.91 750.80Z" fill="#003599"/><path d="M1728.32 521.24L707.91 750.80L710.04 756.18Z" fill="#003399"/><path d="M1728.32 521.24L710.04 756.18L712.21 761.55Z" fill="#003199"/><path d="M1728.32 521.24L712.21 761.55L714.44 766.91Z" fill="#002f99"/><path d="M1728.32 521.24L714.44 766.91L716.71 772.25Z" fill="#002d99"/><path d="M1728.32 521.24L716.71 772.25L719.04 777.58Z" fill="#002c99"/><path d="M1728.32 521.24L719.04 777.58L721.41 782.90Z" fill="#002a99"/><path d="M1728.32 521.24L721.41 782.90L723.83 788.21Z" fill="#002899"/><path d="M1728.32 521.24L723.83 788.21L726.30 793.50Z" fill="#002699"/><path d="M1728.32 521.24L726.30 793.50L728.82 798.78Z" fill="#002499"/><path d="M1728.32 521.24L728.82 798.78L731.38 804.05Z" fill="#002399"/><path d="M1728.32 521.24L731.38 804.05L733.99 809.30Z" fill="#002199"/><path d="M1728.32 521.24L733.99 809.30L736.66 814.54Z" fill="#001f99"/><path d="M1728.32 521.24L736.66 814.54L739.37 819.76Z" fill="#001d99"/><path d="M1728.32 521.24L739.37 819.76L742.12 824.98Z" fill="#001c99"/><path d="M1728.32 521.24L742.12 824.98L744.93 830.17Z" fill="#001a99"/><path d="M1728.32 521.24L744.93 830.17L747.78 835.35Z" fill="#001899"/><path d="M1728.32 521.24L747.78 835.35L750.68 840.52Z" fill="#001799"/><path d="M1728.32 521.24L750.68 840.52L753.63 845.67Z" fill="#001599"/><path d="M1728.32 521.24L753.63 845.67L756.63 850.80Z" fill="#001399"/><path d="M1728.32 521.24L756.63 850.80L759.67 855.92Z" fill="#001299"/><path d="M1728.32 521.24L759.67 855.92L762.76 861.03Z" fill="#001099"/><path d="M1728.32 521.24L762.76 861.03L765.89 866.11Z" fill="#000f99"/><path d="M1728.32 521.24L765.89 866.11L769.07 871.18Z" fill="#000d99"/><path d="M1728.32 521.24L769.07 871.18L772.30 876.24Z" fill="#000c99"/><path d="M1728.32 521.24L772.30 876.24L775.57 881.27Z" fill="#000a99"/><path d="M1728.32 521.24L775.57 881.27L778.89 886.29Z" fill="#000899"/><path d="M1728.32 521.24L778.89 886.29L782.26 891.29Z" fill="#000799"/><path d="M1728.32 521.24L782.26 891.29L785.67 896.27Z" fill="#000599"/><path d="M1728.32 521.24L785.67 896.27L789.13 901.24Z" fill="#000499"/><path d="M1728.32 521.24L789.13 901.24L792.63 906.18Z" fill="#000299"/><path d="M1728.32 521.24L792.63 906.18L796.18 911.11Z" fill="#000199"/><path d="M1426.77 339.48L1141.92 1117.85L1149.07 1119.34Z" fill="#010099"/><path d="M1426.77 339.48L1149.07 1119.34L1156.24 1120.79Z" fill="#040099"/><path d="M1426.77 339.48L1156.24 1120.79L1163.42 1122.20Z" fill="#070099"/><path d="M1426.77 339.48L1163.42 1122.20L1170.61 1123.57Z" fill="#0a0099"/><path d="M1426.77 339.48L1170.61 1123.57L1177.81 1124.91Z" fill="#0d0099"/><path d="M1426.77 339.48L1177.81 1124.91L1185.03 1126.20Z" fill="#100099"/><path d="M1426.77 339.48L1185.03 1126.20L1192.26 1127.46Z" fill="#120099"/><path d="M1426.77 339.48L1192.26 1127.46L1199.50 1128.69Z" fill="#150099"/><path d="M1426.77 339.48L1199.50 1128.69L1206.75 1129.87Z" fill="#180099"/><path d="M1426.77 339.48L1206.75 1129.87L1214.01 1131.01Z" fill="#1b0099"/><path d="M1426.77 339.48L1214.01 1131.01L1221.28 1132.12Z" fill="#1e0099"/><path d="M1426.77 339.48L1221.28 1132.12L1228.56 1133.19Z" fill="#210099"/><path d="M1426.77 339.48L1228.56 1133.19L1235.85 1134.22Z" fill="#240099"/><path d="M1426.77 339.48L1235.85 1134.22L1243.15 1135.21Z" fill="#270099"/><path d="M1426.77 339.48L1243.15 1135.21L1250.46 1136.16Z" fill="#2a0099"/><path d="M1426.77 339.48L1250.46 1136.16L1257.78 1137.07Z" fill="#2d0099"/><path d="M1426.77 339.48L1257.78 1137.07L1265.10 1137.95Z" fill="#310099"/><path d="M1426.77 339.48L1265.10 1137.95L1272.44 1138.78Z" fill="#340099"/><path d="M1426.77 339.48L1272.44 1138.78L1279.78 1139.58Z" fill="#370099"/><path d="M1426.77 339.48L1279.78 1139.58L1287.13 1140.34Z" fill="#3a0099"/><path d="M1426.77 339.48L1287.13 1140.34L1294.48 1141.05Z" fill="#3d0099"/><path d="M1426.77 339.48L1294.48 1141.05L1301.84 1141.74Z" fill="#410099"/><path d="M1426.77 339.48L1301.84 1141.74L1309.21 1142.38Z" fill="#440099"/><path d="M1426.77 339.48L1309.21 1142.38L1316.58 1142.98Z" fill="#470099"/><path d="M1426.77 339.48L1316.58 1142.98L1323.96 1143.54Z" fill="#4a0099"/><path d="M1426.77 339.48L1323.96 1143.54L1331.34 1144.07Z" fill="#4e0099"/><path d="M1426.77 339.48L1331.34 1144.07L1338.73 1144.55Z" fill="#510099"/><path d="M1426.77 339.48L1338.73 1144.55L1346.12 1145.00Z" fill="#550099"/><path d="M1426.77 339.48L1346.12 1145.00L1353.52 1145.40Z" fill="#580099"/><path d="M1426.77 339.48L1353.52 1145.40L1360.92 1145.77Z" fill="#5c0099"/><path d="M1426.77 339.48L1360.92 1145.77L1368.32 1146.10Z" fill="#5f0099"/><path d="M1426.77 339.48L1368.32 1146.10L1375.73 1146.39Z" fill="#630099"/><path d="M1426.77 339.48L1375.73 1146.39L1383.14 1146.64Z" fill="#660099"/><path d="M1426.77 339.48L1383.14 1146.64L1390.55 1146.85Z" fill="#6a0099"/><path d="M1426.77 339.48L1390.55 1146.85L1397.96 1147.02Z" fill="#6d0099"/><path d="M1426.77 339.48L1397.96 1147.02L1405.38 1147.16Z" fill="#710099"/><path d="M1426.77 339.48L1405.38 1147.16L1412.79 1147.25Z" fill="#750099"/><path d="M1426.77 339.48L1412.79 1147.25L1420.21 1147.30Z" fill="#790099"/><path d="M1426.77 339.48L1420.21 1147.30L1427.62 1147.32Z" fill="#7d0099"/><path d="M1426.77 339.48L1427.62 1147.32L1435.04 1147.30Z" fill="#800099"/><path d="M1426.77 339.48L1435.04 1147.30L1442.45 1147.23Z" fill="#840099"/><path d="M1426.77 339.48L1442.45 1147.23L1449.87 1147.13Z" fill="#880099"/><path d="M1426.77 339.48L1449.87 1147.13L1457.28 1146.99Z" fill="#8c0099"/><path d="M1426.77 339.48L1457.28 1146.99L1464.69 1146.81Z" fill="#900099"/><path d="M1426.77 339.48L1464.69 1146.81L1472.10 1146.59Z" fill="#940099"/><path d="M1426.77 339.48L1472.10 1146.59L1479.51 1146.33Z" fill="#990099"/><path d="M1426.77 339.48L1479.51 1146.33L1486.91 1146.03Z" fill="#990095"/><path d="M1426.77 339.48L1486.91 1146.03L1494.32 1145.69Z" fill="#990091"/><path d="M1426.77 339.48L1494.32 1145.69L1501.72 1145.31Z" fill="#99008e"/><path d="M1426.77 339.48L1501.72 1145.31L1509.11 1144.90Z" fill="#99008a"/><path d="M1426.77 339.48L1509.11 1144.90L1516.50 1144.44Z" fill="#990087"/><path d="M1426.77 339.48L1516.50 1144.44L1523.89 1143.95Z" fill="#990083"/><path d="M1426.77 339.48L1523.89 1143.95L1531.27 1143.42Z" fill="#990080"/><path d="M1426.77 339.48L1531.27 1143.42L1538.65 1142.84Z" fill="#99007d"/><path d="M1426.77 339.48L1538.65 1142.84L1546.02 1142.23Z" fill="#99007a"/><path d="M1426.77 339.48L1546.02 1142.23L1553.39 1141.58Z" fill="#990077"/><path d="M1426.77 339.48L1553.39 1141.58L1560.75 1140.89Z" fill="#990074"/><path d="M1426.77 339.48L1560.75 1140.89L1568.10 1140.17Z" fill="#990071"/><path d="M1426.77 339.48L1568.10 1140.17L1575.45 1139.40Z" fill="#99006f"/><path d="M1426.77 339.48L1575.45 1139.40L1582.79 1138.59Z" fill="#99006c"/><path d="M1426.77 339.48L1582.79 1138.59L1590.12 1137.75Z" fill="#99006a"/><path d="M1426.77 339.48L1590.12 1137.75L1597.44 1136.86Z" fill="#990067"/><path d="M1426.77 339.48L1597.44 1136.86L1604.76 1135.94Z" fill="#990065"/><path d="M1426.77 339.48L1604.76 1135.94L1612.07 1134.98Z" fill="#990063"/><path d="M1426.77 339.48L1612.07 1134.98L1619.36 1133.98Z" fill="#990060"/><path d="M1426.77 339.48L1619.36 1133.98L1626.65 1132.94Z" fill="#99005e"/><path d="M1426.77 339.48L1626.65 1132.94L1633.93 1131.87Z" fill="#99005c"/><path d="M1426.77 339.48L1633.93 1131.87L1641.20 1130.75Z" fill="#99005a"/><path d="M1426.77 339.48L1641.20 1130.75L1648.46 1129.60Z" fill="#990058"/><path d="M1426.77 339.48L1648.46 1129.60L1655.71 1128.41Z" fill="#990056"/><path d="M1426.77 339.48L1655.71 1128.41L1662.94 1127.18Z" fill="#990055"/><path d="M1426.77 339.48L1662.94 1127.18L1670.17 1125.91Z" fill="#990053"/><path d="M1426.77 339.48L1670.17 1125.91L1677.38 1124.60Z" fill="#990051"/><path d="M1426.77 339.48L1677.38 1124.60L1684.58 1123.26Z" fill="#99004f"/><path d="M1426.77 339.48L1684.58 1123.26L1691.77 1121.88Z" fill="#99004e"/><path d="M1426.77 339.48L1691.77 1121.88L1698.95 1120.46Z" fill="#99004c"/><path d="M1426.77 339.48L1698.95 1120.46L1706.11 1119.00Z" fill="#99004a"/><path d="M1426.77 339.48L1706.11 1119.00L1713.26 1117.50Z" fill="#990049"/><path d="M1426.77 339.48L1713.26 1117.50L1720.39 1115.97Z" fill="#990047"/><path d="M1426.77 339.48L1720.39 1115.97L1727.51 1114.40Z" fill="#990046"/><path d="M1426.77 339.48L1727.51 1114.40L1734.62 1112.79Z" fill="#990044"/><path d="M1426.77 339.48L1734.62 1112.79L1741.71 1111.14Z" fill="#990043"/><path d="M1426.77 339.48L1741.71 1111.14L1748.79 1109.45Z" fill="#990042"/><path d="M1426.77 339.48L1748.79 1109.45L1755.85 1107.73Z" fill="#990040"/><path d="M1426.77 339.48L1755.85 1107.73L1762.89 1105.97Z" fill="#99003f"/><path d="M1426.77 339.48L1762.89 1105.97L1769.92 1104.18Z" fill="#99003e"/><path d="M1426.77 339.48L1769.92 1104.18L1776.93 1102.34Z" fill="#99003c"/><path d="M1426.77 339.48L1776.93 1102.34L1783.92 1100.47Z" fill="#99003b"/><path d="M1426.77 339.48L1783.92 1100.47L1790.90 1098.57Z" fill="#99003a"/><path d="M1426.77 339.48L1790.90 1098.57L1797.86 1096.62Z" fill="#990039"/><path d="M1426.77 339.48L1797.86 1096.62L1804.80 1094.64Z" fill="#990037"/><path d="M1426.77 339.48L1804.80 1094.64L1811.72 1092.62Z" fill="#990036"/><path d="M1426.77 339.48L1811.72 1092.62L1818.63 1090.57Z" fill="#990035"/><path d="M1426.77 339.48L1818.63 1090.57L1825.51 1088.48Z" fill="#990034"/><path d="M1426.77 339.48L1825.51 1088.48L1832.38 1086.35Z" fill="#990033"/><path d="M1426.77 339.48L1832.38 1086.35L1839.23 1084.19Z" fill="#990032"/><path d="M1426.77 339.48L1839.23 1084.19L1846.05 1081.99Z" fill="#990031"/><path d="M1426.77 339.48L1846.05 1081.99L1852.86 1079.75Z" fill="#990030"/><path d="M1426.77 339.48L1852.86 1079.75L1859.64 1077.48Z" fill="#99002f"/><path d="M1426.77 339.48L1859.64 1077.48L1866.41 1075.17Z" fill="#99002e"/><path d="M1426.77 339.48L1866.41 1075.17L1873.15 1072.83Z" fill="#99002d"/><path d="M1426.77 339.48L1873.15 1072.83L1879.87 1070.45Z" fill="#99002c"/><path d="M1426.77 339.48L1879.87 1070.45L1886.57 1068.04Z" fill="#99002b"/><path d="M1426.77 339.48L1886.57 1068.04L1893.25 1065.59Z" fill="#99002a"/><path d="M1426.77 339.48L1893.25 1065.59L1899.90 1063.10Z" fill="#990029"/><path d="M1426.77 339.48L1899.90 1063.10L1906.53 1060.58Z" fill="#990028"/><path d="M1426.77 339.48L1906.53 1060.58L1913.14 1058.03Z" fill="#990027"/><path d="M1426.77 339.48L1913.14 1058.03L1919.72 1055.44Z" fill="#990026"/><path d="M1426.77 339.48L1919.72 1055.44L1926.28 1052.81Z" fill="#990025"/><path d="M1426.77 339.48L1926.28 1052.81L1932.82 1050.16Z" fill="#990024"/><path d="M1426.77 339.48L1932.82 1050.16L1939.33 1047.46Z" fill="#990024"/><path d="M1426.77 339.48L1939.33 1047.46L1945.82 1044.73Z" fill="#990023"/><path d="M1426.77 339.48L1945.82 1044.73L1952.28 1041.97Z" fill="#990022"/><path d="M1426.77 339.48L1952.28 1041.97L1958.72 1039.17Z" fill="#990021"/><path d="M1426.77 339.48L1958.72 1039.17L1965.13 1036.34Z" fill="#990020"/><path d="M1426.77 339.48L1965.13 1036.34L1971.51 1033.48Z" fill="#990020"/><path d="M1426.77 339.48L1971.51 1033.48L1977.87 1030.58Z" fill="#99001f"/><path d="M1426.77 339.48L1977.87 1030.58L1984.20 1027.65Z" fill="#99001e"/><path d="M1426.77 339.48L1984.20 1027.65L1990.50 1024.69Z" fill="#99001d"/><path d="M1426.77 339.48L1990.50 1024.69L1996.78 1021.69Z" fill="#99001c"/><path d="M1426.77 339.48L1996.78 1021.69L2003.03 1018.66Z" fill="#99001c"/><path d="M1426.77 339.48L2003.03 1018.66L2009.25 1015.59Z" fill="#99001b"/><path d="M1426.77 339.48L2009.25 1015.59L2015.44 1012.50Z" fill="#99001a"/><path d="M1426.77 339.48L2015.44 1012.50L2021.60 1009.37Z" fill="#99001a"/><path d="M1426.77 339.48L2021.60 1009.37L2027.74 1006.20Z" fill="#990019"/><path d="M1426.77 339.48L2027.74 1006.20L2033.84 1003.01Z" fill="#990018"/><path d="M1426.77 339.48L2033.84 1003.01L2039.92 999.78Z" fill="#990017"/><path d="M1426.77 339.48L2039.92 999.78L2045.97 996.52Z" fill="#990017"/><path d="M1426.77 339.48L2045.97 996.52L2051.98 993.23Z" fill="#990016"/><path d="M1426.77 339.48L2051.98 993.23L2057.97 989.91Z" fill="#990015"/><path d="M1426.77 339.48L2057.97 989.91L2063.92 986.56Z" fill="#990015"/><path d="M1426.77 339.48L2063.92 986.56L2069.85 983.17Z" fill="#990014"/><path d="M1426.77 339.48L2069.85 983.17L2075.74 979.75Z" fill="#990013"/><path d="M1426.77 339.48L2075.74 979.75L2081.60 976.31Z" fill="#990013"/><path d="M1426.77 339.48L2081.60 976.31L2087.43 972.83Z" fill="#990012"/><path d="M1426.77 339.48L2087.43 972.83L2093.23 969.32Z" fill="#990012"/><path d="M1426.77 339.48L2093.23 969.32L2099.00 965.78Z" fill="#990011"/><path d="M1426.77 339.48L2099.00 965.78L2104.73 962.21Z" fill="#990010"/><path d="M1426.77 339.48L2104.73 962.21L2110.43 958.61Z" fill="#990010"/><path d="M1426.77 339.48L2110.43 958.61L2116.10 954.97Z" fill="#99000f"/><path d="M1426.77 339.48L2116.10 954.97L2121.73 951.31Z" fill="#99000f"/><path d="M1426.77 339.48L2121.73 951.31L2127.33 947.62Z" fill="#99000e"/><path d="M1426.77 339.48L2127.33 947.62L2132.90 943.90Z" fill="#99000d"/><path d="M1426.77 339.48L2132.90 943.90L2138.43 940.15Z" fill="#99000d"/><path d="M1426.77 339.48L2138.43 940.15L2143.92 936.38Z" fill="#99000c"/><path d="M1426.77 339.48L2143.92 936.38L2149.38 932.57Z" fill="#99000c"/><path d="M1426.77 339.48L2149.38 932.57L2154.81 928.73Z" fill="#99000b"/><path d="M1426.77 339.48L2154.81 928.73L2160.20 924.87Z" fill="#99000b"/><path d="M1426.77 339.48L2160.20 924.87L2165.56 920.97Z" fill="#99000a"/><path d="M1426.77 339.48L2165.56 920.97L2170.88 917.05Z" fill="#990009"/><path d="M1426.77 339.48L2170.88 917.05L2176.16 913.10Z" fill="#990009"/><path d="M1426.77 339.48L2176.16 913.10L2181.41 909.13Z" fill="#990008"/><path d="M1426.77 339.48L2181.41 909.13L2186.62 905.12Z" fill="#990008"/><path d="M1426.77 339.48L2186.62 905.12L2191.80 901.09Z" fill="#990007"/><path d="M1426.77 339.48L2191.80 901.09L2196.93 897.03Z" fill="#990007"/><path d="M1426.77 339.48L2196.93 897.03L2202.03 892.94Z" fill="#990006"/><path d="M1426.77 339.48L2202.03 892.94L2207.09 888.83Z" fill="#990006"/><path d="M1426.77 339.48L2207.09 888.83L2212.12 884.69Z" fill="#990005"/><path d="M1426.77 339.48L2212.12 884.69L2217.10 880.52Z" fill="#990005"/><path d="M1426.77 339.48L2217.10 880.52L2222.05 876.33Z" fill="#990004"/><path d="M1426.77 339.48L2222.05 876.33L2226.96 872.11Z" fill="#990004"/><path d="M1426.77 339.48L2226.96 872.11L2231.83 867.86Z" fill="#990003"/><path d="M1426.77 339.48L2231.83 867.86L2236.66 863.59Z" fill="#990003"/><path d="M1426.77 339.48L2236.66 863.59L2241.45 859.30Z" fill="#990002"/><path d="M1426.77 339.48L2241.45 859.30L2246.20 854.97Z" fill="#990002"/><path d="M1426.77 339.48L2246.20 854.97L2250.92 850.63Z" fill="#990001"/><path d="M1426.77 339.48L2250.92 850.63L2255.59 846.26Z" fill="#990001"/><path d="M1426.77 339.48L2255.59 846.26L2260.22 841.86Z" fill="#990000"/><g clip-path="url(#tri)"><path d="M1438.03 521.92L1109.88 521.92L1109.88 522.77Z" fill="url(#c0)"/><path d="M1438.03 521.92L1109.88 522.77L1109.93 526.26Z" fill="url(#c1)"/><path d="M1438.03 521.92L1109.93 526.26L1110.08 530.61Z" fill="url(#c2)"/><path d="M1438.03 521.92L1110.08 530.61L1110.33 534.95Z" fill="url(#c3)"/><path d="M1438.03 521.92L1110.33 534.95L1110.68 539.29Z" fill="url(#c4)"/><path d="M1438.03 521.92L1110.68 539.29L1111.13 543.63Z" fill="url(#c5)"/><path d="M1438.03 521.92L1111.13 543.63L1111.68 547.95Z" fill="url(#c6)"/><path d="M1438.03 521.92L1111.68 547.95L1112.33 552.27Z" fill="url(#c7)"/><path d="M1438.03 521.92L1112.33 552.27L1113.07 556.58Z" fill="url(#c8)"/><path d="M1438.03 521.92L1113.07 556.58L1113.92 560.88Z" fill="url(#c9)"/><path d="M1438.03 521.92L1113.92 560.88L1114.87 565.17Z" fill="url(#c10)"/><path d="M1438.03 521.92L1114.87 565.17L1115.91 569.44Z" fill="url(#c11)"/><path d="M1438.03 521.92L1115.91 569.44L1117.05 573.70Z" fill="url(#c12)"/><path d="M1438.03 521.92L1117.05 573.70L1118.29 577.95Z" fill="url(#c13)"/><path d="M1438.03 521.92L1118.29 577.95L1119.63 582.18Z" fill="url(#c14)"/><path d="M1438.03 521.92L1119.63 582.18L1121.06 586.38Z" fill="url(#c15)"/><path d="M1438.03 521.92L1121.06 586.38L1122.59 590.57Z" fill="url(#c16)"/><path d="M1438.03 521.92L1122.59 590.57L1124.22 594.74Z" fill="url(#c17)"/><path d="M1438.03 521.92L1124.22 594.74L1125.94 598.89Z" fill="url(#c18)"/><path d="M1438.03 521.92L1125.94 598.89L1127.76 603.01Z" fill="url(#c19)"/><path d="M1438.03 521.92L1127.76 603.01L1129.67 607.11Z" fill="url(#c20)"/><path d="M1438.03 521.92L1129.67 607.11L1131.68 611.18Z" fill="url(#c21)"/><path d="M1438.03 521.92L1131.68 611.18L1133.78 615.23Z" fill="url(#c22)"/><path d="M1438.03 521.92L1133.78 615.23L1135.97 619.24Z" fill="url(#c23)"/><path d="M1438.03 521.92L1135.97 619.24L1138.25 623.23Z" fill="url(#c24)"/><path d="M1438.03 521.92L1138.25 623.23L1140.63 627.18Z" fill="url(#c25)"/><path d="M1438.03 521.92L1140.63 627.18L1143.09 631.11Z" fill="url(#c26)"/><path d="M1438.03 521.92L1143.09 631.11L1145.65 635.00Z" fill="url(#c27)"/><path d="M1438.03 521.92L1145.65 635.00L1148.29 638.86Z" fill="url(#c28)"/><path d="M1438.03 521.92L1148.29 638.86L1151.02 642.68Z" fill="url(#c29)"/><path d="M1438.03 521.92L1151.02 642.68L1153.84 646.46Z" fill="url(#c30)"/><path d="M1438.03 521.92L1153.84 646.46L1156.75 650.20Z" fill="url(#c31)"/><path d="M1438.03 521.92L1156.75 650.20L1159.74 653.91Z" fill="url(#c32)"/><path d="M1438.03 521.92L1159.74 653.91L1162.82 657.58Z" fill="url(#c33)"/><path d="M1438.03 521.92L1162.82 657.58L1165.98 661.20Z" fill="url(#c34)"/><path d="M1438.03 521.92L1165.98 661.20L1169.23 664.79Z" fill="url(#c35)"/><path d="M1438.03 521.92L1169.23 664.79L1172.55 668.33Z" fill="url(#c36)"/><path d="M1438.03 521.92L1172.55 668.33L1175.96 671.82Z" fill="url(#c37)"/><path d="M1438.03 521.92L1175.96 671.82L1179.45 675.27Z" fill="url(#c38)"/><path d="M1438.03 521.92L1179.45 675.27L1183.01 678.67Z" fill="url(#c39)"/><path d="M1438.03 521.92L1183.01 678.67L1186.65 682.03Z" fill="url(#c40)"/><path d="M1438.03 521.92L1186.65 682.03L1190.37 685.33Z" fill="url(#c41)"/><path d="M1438.03 521.92L1190.37 685.33L1194.17 688.59Z" fill="url(#c42)"/><path d="M1438.03 521.92L1194.17 688.59L1198.04 691.79Z" fill="url(#c43)"/><path d="M1438.03 521.92L1198.04 691.79L1201.98 694.95Z" fill="url(#c44)"/><path d="M1438.03 521.92L1201.98 694.95L1205.99 698.05Z" fill="url(#c45)"/><path d="M1438.03 521.92L1205.99 698.05L1210.08 701.09Z" fill="url(#c46)"/><path d="M1438.03 521.92L1210.08 701.09L1214.23 704.09Z" fill="url(#c47)"/><path d="M1438.03 521.92L1214.23 704.09L1218.46 707.02Z" fill="url(#c48)"/><path d="M1438.03 521.92L1218.46 707.02L1222.75 709.90Z" fill="url(#c49)"/><path d="M1438.03 521.92L1222.75 709.90L1227.10 712.73Z" fill="url(#c50)"/><path d="M1438.03 521.92L1227.10 712.73L1231.52 715.49Z" fill="url(#c51)"/><path d="M1438.03 521.92L1231.52 715.49L1236.00 718.20Z" fill="url(#c52)"/><path d="M1438.03 521.92L1236.00 718.20L1240.55 720.84Z" fill="url(#c53)"/><path d="M1438.03 521.92L1240.55 720.84L1245.15 723.43Z" fill="url(#c54)"/><path d="M1438.03 521.92L1245.15 723.43L1249.81 725.95Z" fill="url(#c55)"/><path d="M1438.03 521.92L1249.81 725.95L1254.53 728.42Z" fill="url(#c56)"/><path d="M1438.03 521.92L1254.53 728.42L1259.31 730.82Z" fill="url(#c57)"/><path d="M1438.03 521.92L1259.31 730.82L1264.14 733.15Z" fill="url(#c58)"/><path d="M1438.03 521.92L1264.14 733.15L1268.20 735.05Z" fill="url(#c59)"/><path d="M1438.03 521.92L1268.20 735.05L1269.02 735.42Z" fill="url(#c60)"/><path d="M1438.03 521.92L1269.02 735.42L1273.96 737.63Z" fill="url(#c61)"/><path d="M1438.03 521.92L1273.96 737.63L1278.94 739.77Z" fill="url(#c62)"/><path d="M1438.03 521.92L1278.94 739.77L1283.98 741.85Z" fill="url(#c63)"/><path d="M1438.03 521.92L1283.98 741.85L1289.06 743.85Z" fill="url(#c64)"/><path d="M1438.03 521.92L1289.06 743.85L1294.18 745.79Z" fill="url(#c65)"/><path d="M1438.03 521.92L1294.18 745.79L1299.35 747.66Z" fill="url(#c66)"/><path d="M1438.03 521.92L1299.35 747.66L1304.56 749.47Z" fill="url(#c67)"/><path d="M1438.03 521.92L1304.56 749.47L1309.81 751.20Z" fill="url(#c68)"/><path d="M1438.03 521.92L1309.81 751.20L1315.11 752.86Z" fill="url(#c69)"/><path d="M1438.03 521.92L1315.11 752.86L1320.43 754.46Z" fill="url(#c70)"/><path d="M1438.03 521.92L1320.43 754.46L1325.80 755.98Z" fill="url(#c71)"/><path d="M1438.03 521.92L1325.80 755.98L1331.20 757.43Z" fill="url(#c72)"/><path d="M1438.03 521.92L1331.20 757.43L1336.63 758.81Z" fill="url(#c73)"/><path d="M1438.03 521.92L1336.63 758.81L1342.09 760.12Z" fill="url(#c74)"/><path d="M1438.03 521.92L1342.09 760.12L1347.58 761.35Z" fill="url(#c75)"/><path d="M1438.03 521.92L1347.58 761.35L1353.10 762.51Z" fill="url(#c76)"/><path d="M1438.03 521.92L1353.10 762.51L1358.65 763.60Z" fill="url(#c77)"/><path d="M1438.03 521.92L1358.65 763.60L1364.22 764.62Z" fill="url(#c78)"/><path d="M1438.03 521.92L1364.22 764.62L1369.81 765.56Z" fill="url(#c79)"/><path d="M1438.03 521.92L1369.81 765.56L1375.42 766.42Z" fill="url(#c80)"/><path d="M1438.03 521.92L1375.42 766.42L1381.05 767.22Z" fill="url(#c81)"/><path d="M1438.03 521.92L1381.05 767.22L1386.70 767.93Z" fill="url(#c82)"/><path d="M1438.03 521.92L1386.70 767.93L1392.36 768.58Z" fill="url(#c83)"/><path d="M1438.03 521.92L1392.36 768.58L1398.04 769.14Z" fill="url(#c84)"/><path d="M1438.03 521.92L1398.04 769.14L1403.73 769.64Z" fill="url(#c85)"/><path d="M1438.03 521.92L1403.73 769.64L1409.43 770.05Z" fill="url(#c86)"/><path d="M1438.03 521.92L1409.43 770.05L1415.14 770.39Z" fill="url(#c87)"/><path d="M1438.03 521.92L1415.14 770.39L1420.86 770.66Z" fill="url(#c88)"/><path d="M1438.03 521.92L1420.86 770.66L1426.58 770.85Z" fill="url(#c89)"/><path d="M1438.03 521.92L1426.58 770.85L1432.31 770.96Z" fill="url(#c90)"/><path d="M1438.03 521.92L1432.31 770.96L1438.03 771.00Z" fill="url(#c91)"/><path d="M1438.03 521.92L1438.03 771.00L1443.76 770.96Z" fill="url(#c92)"/><path d="M1438.03 521.92L1443.76 770.96L1449.49 770.85Z" fill="url(#c93)"/><path d="M1438.03 521.92L1449.49 770.85L1453.41 770.73Z" fill="url(#c94)"/><path d="M1438.03 521.92L1453.41 770.73L1455.21 770.66Z" fill="url(#c95)"/><path d="M1438.03 521.92L1455.21 770.66L1460.92 770.39Z" fill="url(#c96)"/><path d="M1438.03 521.92L1460.92 770.39L1466.63 770.05Z" fill="url(#c97)"/><path d="M1438.03 521.92L1466.63 770.05L1472.33 769.64Z" fill="url(#c98)"/><path d="M1438.03 521.92L1472.33 769.64L1478.03 769.14Z" fill="url(#c99)"/><path d="M1438.03 521.92L1478.03 769.14L1483.70 768.58Z" fill="url(#c100)"/><path d="M1438.03 521.92L1483.70 768.58L1489.37 767.93Z" fill="url(#c101)"/><path d="M1438.03 521.92L1489.37 767.93L1495.02 767.22Z" fill="url(#c102)"/><path d="M1438.03 521.92L1495.02 767.22L1500.65 766.42Z" fill="url(#c103)"/><path d="M1438.03 521.92L1500.65 766.42L1506.26 765.56Z" fill="url(#c104)"/><path d="M1438.03 521.92L1506.26 765.56L1511.85 764.62Z" fill="url(#c105)"/><path d="M1438.03 521.92L1511.85 764.62L1517.42 763.60Z" fill="url(#c106)"/><path d="M1438.03 521.92L1517.42 763.60L1522.97 762.51Z" fill="url(#c107)"/><path d="M1438.03 521.92L1522.97 762.51L1528.48 761.35Z" fill="url(#c108)"/><path d="M1438.03 521.92L1528.48 761.35L1533.98 760.12Z" fill="url(#c109)"/><path d="M1438.03 521.92L1533.98 760.12L1539.44 758.81Z" fill="url(#c110)"/><path d="M1438.03 521.92L1539.44 758.81L1544.87 757.43Z" fill="url(#c111)"/><path d="M1438.03 521.92L1544.87 757.43L1550.27 755.98Z" fill="url(#c112)"/><path d="M1438.03 521.92L1550.27 755.98L1555.63 754.46Z" fill="url(#c113)"/><path d="M1438.03 521.92L1555.63 754.46L1560.96 752.86Z" fill="url(#c114)"/><path d="M1438.03 521.92L1560.96 752.86L1566.25 751.20Z" fill="url(#c115)"/><path d="M1438.03 521.92L1566.25 751.20L1571.51 749.47Z" fill="url(#c116)"/><path d="M1438.03 521.92L1571.51 749.47L1576.72 747.66Z" fill="url(#c117)"/><path d="M1438.03 521.92L1576.72 747.66L1581.89 745.79Z" fill="url(#c118)"/><path d="M1438.03 521.92L1581.89 745.79L1587.01 743.85Z" fill="url(#c119)"/><path d="M1438.03 521.92L1587.01 743.85L1592.09 741.85Z" fill="url(#c120)"/><path d="M1438.03 521.92L1592.09 741.85L1597.13 739.77Z" fill="url(#c121)"/><path d="M1438.03 521.92L1597.13 739.77L1602.11 737.63Z" fill="url(#c122)"/><path d="M1438.03 521.92L1602.11 737.63L1607.04 735.42Z" fill="url(#c123)"/><path d="M1438.03 521.92L1607.04 735.42L1611.93 733.15Z" fill="url(#c124)"/><path d="M1438.03 521.92L1611.93 733.15L1616.76 730.82Z" fill="url(#c125)"/><path d="M1438.03 521.92L1616.76 730.82L1621.53 728.42Z" fill="url(#c126)"/><path d="M1438.03 521.92L1621.53 728.42L1626.25 725.95Z" fill="url(#c127)"/><path d="M1438.03 521.92L1626.25 725.95L1630.92 723.43Z" fill="url(#c128)"/><path d="M1438.03 521.92L1630.92 723.43L1635.52 720.84Z" fill="url(#c129)"/><path d="M1438.03 521.92L1635.52 720.84L1640.06 718.20Z" fill="url(#c130)"/><path d="M1438.03 521.92L1640.06 718.20L1644.55 715.49Z" fill="url(#c131)"/><path d="M1438.03 521.92L1644.55 715.49L1648.97 712.73Z" fill="url(#c132)"/><path d="M1438.03 521.92L1648.97 712.73L1653.32 709.90Z" fill="url(#c133)"/><path d="M1438.03 521.92L1653.32 709.90L1657.61 707.02Z" fill="url(#c134)"/><path d="M1438.03 521.92L1657.61 707.02L1661.83 704.09Z" fill="url(#c135)"/><path d="M1438.03 521.92L1661.83 704.09L1665.99 701.09Z" fill="url(#c136)"/><path d="M1438.03 521.92L1665.99 701.09L1670.07 698.05Z" fill="url(#c137)"/><path d="M1438.03 521.92L1670.07 698.05L1674.09 694.95Z" fill="url(#c138)"/><path d="M1438.03 521.92L1674.09 694.95L1678.03 691.79Z" fill="url(#c139)"/><path d="M1438.03 521.92L1678.03 691.79L1681.90 688.59Z" fill="url(#c140)"/><path d="M1438.03 521.92L1681.90 688.59L1685.69 685.33Z" fill="url(#c141)"/><path d="M1438.03 521.92L1685.69 685.33L1689.41 682.03Z" fill="url(#c142)"/><path d="M1438.03 521.92L1689.41 682.03L1693.06 678.67Z" fill="url(#c143)"/><path d="M1438.03 521.92L1693.06 678.67L1696.62 675.27Z" fill="url(#c144)"/><path d="M1438.03 521.92L1696.62 675.27L1700.11 671.82Z" fill="url(#c145)"/><path d="M1438.03 521.92L1700.11 671.82L1703.51 668.33Z" fill="url(#c146)"/><path d="M1438.03 521.92L1703.51 668.33L1706.84 664.79Z" fill="url(#c147)"/><path d="M1438.03 521.92L1706.84 664.79L1710.08 661.20Z" fill="url(#c148)"/><path d="M1438.03 521.92L1710.08 661.20L1713.25 657.58Z" fill="url(#c149)"/><path d="M1438.03 521.92L1713.25 657.58L1716.32 653.91Z" fill="url(#c150)"/><path d="M1438.03 521.92L1716.32 653.91L1719.32 650.20Z" fill="url(#c151)"/><path d="M1438.03 521.92L1719.32 650.20L1722.22 646.46Z" fill="url(#c152)"/><path d="M1438.03 521.92L1722.22 646.46L1725.04 642.68Z" fill="url(#c153)"/><path d="M1438.03 521.92L1725.04 642.68L1727.78 638.86Z" fill="url(#c154)"/><path d="M1438.03 521.92L1727.78 638.86L1730.42 635.00Z" fill="url(#c155)"/><path d="M1438.03 521.92L1730.42 635.00L1732.98 631.11Z" fill="url(#c156)"/><path d="M1438.03 521.92L1732.98 631.11L1735.44 627.18Z" fill="url(#c157)"/><path d="M1438.03 521.92L1735.44 627.18L1737.82 623.23Z" fill="url(#c158)"/><path d="M1438.03 521.92L1737.82 623.23L1740.10 619.24Z" fill="url(#c159)"/><path d="M1438.03 521.92L1740.10 619.24L1742.29 615.23Z" fill="url(#c160)"/><path d="M1438.03 521.92L1742.29 615.23L1744.39 611.18Z" fill="url(#c161)"/><path d="M1438.03 521.92L1744.39 611.18L1746.40 607.11Z" fill="url(#c162)"/><path d="M1438.03 521.92L1746.40 607.11L1748.31 603.01Z" fill="url(#c163)"/><path d="M1438.03 521.92L1748.31 603.01L1750.13 598.89Z" fill="url(#c164)"/><path d="M1438.03 521.92L1750.13 598.89L1751.85 594.74Z" fill="url(#c165)"/><path d="M1438.03 521.92L1751.85 594.74L1753.47 590.57Z" fill="url(#c166)"/><path d="M1438.03 521.92L1753.47 590.57L1755.01 586.38Z" fill="url(#c167)"/><path d="M1438.03 521.92L1755.01 586.38L1756.44 582.18Z" fill="url(#c168)"/><path d="M1438.03 521.92L1756.44 582.18L1757.78 577.95Z" fill="url(#c169)"/><path d="M1438.03 521.92L1757.78 577.95L1759.02 573.70Z" fill="url(#c170)"/><path d="M1438.03 521.92L1759.02 573.70L1760.16 569.44Z" fill="url(#c171)"/><path d="M1438.03 521.92L1760.16 569.44L1761.20 565.17Z" fill="url(#c172)"/><path d="M1438.03 521.92L1761.20 565.17L1762.15 560.88Z" fill="url(#c173)"/><path d="M1438.03 521.92L1762.15 560.88L1762.99 556.58Z" fill="url(#c174)"/><path d="M1438.03 521.92L1762.99 556.58L1763.74 552.27Z" fill="url(#c175)"/><path d="M1438.03 521.92L1763.74 552.27L1764.39 547.95Z" fill="url(#c176)"/><path d="M1438.03 521.92L1764.39 547.95L1764.94 543.63Z" fill="url(#c177)"/><path d="M1438.03 521.92L1764.94 543.63L1765.39 539.29Z" fill="url(#c178)"/><path d="M1438.03 521.92L1765.39 539.29L1765.74 534.95Z" fill="url(#c179)"/><path d="M1438.03 521.92L1765.74 534.95L1765.99 530.61Z" fill="url(#c180)"/><path d="M1438.03 521.92L1765.99 530.61L1766.14 526.26Z" fill="url(#c181)"/><path d="M1438.03 521.92L1766.14 526.26L1766.19 521.92Z" fill="url(#c182)"/><path d="M1438.03 521.92L1766.19 521.92L1766.19 521.16Z" fill="url(#c183)"/><path d="M1438.03 521.92L1766.19 521.16L1766.14 517.57Z" fill="url(#c184)"/><path d="M1438.03 521.92L1766.14 517.57L1765.99 513.22Z" fill="url(#c185)"/><path d="M1438.03 521.92L1765.99 513.22L1765.74 508.88Z" fill="url(#c186)"/><path d="M1438.03 521.92L1765.74 508.88L1765.39 504.54Z" fill="url(#c187)"/><path d="M1438.03 521.92L1765.39 504.54L1764.94 500.21Z" fill="url(#c188)"/><path d="M1438.03 521.92L1764.94 500.21L1764.39 495.88Z" fill="url(#c189)"/><path d="M1438.03 521.92L1764.39 495.88L1763.74 491.56Z" fill="url(#c190)"/><path d="M1438.03 521.92L1763.74 491.56L1762.99 487.25Z" fill="url(#c191)"/><path d="M1438.03 521.92L1762.99 487.25L1762.15 482.95Z" fill="url(#c192)"/><path d="M1438.03 521.92L1762.15 482.95L1761.20 478.66Z" fill="url(#c193)"/><path d="M1438.03 521.92L1761.20 478.66L1760.16 474.39Z" fill="url(#c194)"/><path d="M1438.03 521.92L1760.16 474.39L1759.02 470.13Z" fill="url(#c195)"/><path d="M1438.03 521.92L1759.02 470.13L1757.78 465.89Z" fill="url(#c196)"/><path d="M1438.03 521.92L1757.78 465.89L1756.44 461.66Z" fill="url(#c197)"/><path d="M1438.03 521.92L1756.44 461.66L1755.01 457.45Z" fill="url(#c198)"/><path d="M1438.03 521.92L1755.01 457.45L1753.47 453.26Z" fill="url(#c199)"/><path d="M1438.03 521.92L1753.47 453.26L1751.85 449.09Z" fill="url(#c200)"/><path d="M1438.03 521.92L1751.85 449.09L1750.13 444.95Z" fill="url(#c201)"/><path d="M1438.03 521.92L1750.13 444.95L1748.31 440.82Z" fill="url(#c202)"/><path d="M1438.03 521.92L1748.31 440.82L1746.40 436.73Z" fill="url(#c203)"/><path d="M1438.03 521.92L1746.40 436.73L1744.39 432.65Z" fill="url(#c204)"/><path d="M1438.03 521.92L1744.39 432.65L1742.29 428.61Z" fill="url(#c205)"/><path d="M1438.03 521.92L1742.29 428.61L1740.10 424.59Z" fill="url(#c206)"/><path d="M1438.03 521.92L1740.10 424.59L1737.82 420.61Z" fill="url(#c207)"/><path d="M1438.03 521.92L1737.82 420.61L1735.44 416.65Z" fill="url(#c208)"/><path d="M1438.03 521.92L1735.44 416.65L1732.98 412.73Z" fill="url(#c209)"/><path d="M1438.03 521.92L1732.98 412.73L1730.42 408.84Z" fill="url(#c210)"/><path d="M1438.03 521.92L1730.42 408.84L1727.78 404.98Z" fill="url(#c211)"/><path d="M1438.03 521.92L1727.78 404.98L1725.04 401.16Z" fill="url(#c212)"/><path d="M1438.03 521.92L1725.04 401.16L1722.22 397.38Z" fill="url(#c213)"/><path d="M1438.03 521.92L1722.22 397.38L1719.32 393.63Z" fill="url(#c214)"/><path d="M1438.03 521.92L1719.32 393.63L1716.32 389.92Z" fill="url(#c215)"/><path d="M1438.03 521.92L1716.32 389.92L1713.25 386.26Z" fill="url(#c216)"/><path d="M1438.03 521.92L1713.25 386.26L1710.08 382.63Z" fill="url(#c217)"/><path d="M1438.03 521.92L1710.08 382.63L1706.84 379.05Z" fill="url(#c218)"/><path d="M1438.03 521.92L1706.84 379.05L1703.51 375.51Z" fill="url(#c219)"/><path d="M1438.03 521.92L1703.51 375.51L1700.11 372.01Z" fill="url(#c220)"/><path d="M1438.03 521.92L1700.11 372.01L1696.62 368.57Z" fill="url(#c221)"/><path d="M1438.03 521.92L1696.62 368.57L1693.06 365.16Z" fill="url(#c222)"/><path d="M1438.03 521.92L1693.06 365.16L1689.41 361.81Z" fill="url(#c223)"/><path d="M1438.03 521.92L1689.41 361.81L1685.69 358.50Z" fill="url(#c224)"/><path d="M1438.03 521.92L1685.69 358.50L1681.90 355.25Z" fill="url(#c225)"/><path d="M1438.03 521.92L1681.90 355.25L1678.03 352.04Z" fill="url(#c226)"/><path d="M1438.03 521.92L1678.03 352.04L1674.09 348.89Z" fill="url(#c227)"/><path d="M1438.03 521.92L1674.09 348.89L1670.07 345.79Z" fill="url(#c228)"/><path d="M1438.03 521.92L1670.07 345.79L1665.99 342.74Z" fill="url(#c229)"/><path d="M1438.03 521.92L1665.99 342.74L1661.83 339.75Z" fill="url(#c230)"/><path d="M1438.03 521.92L1661.83 339.75L1657.61 336.81Z" fill="url(#c231)"/><path d="M1438.03 521.92L1657.61 336.81L1653.32 333.93Z" fill="url(#c232)"/><path d="M1438.03 521.92L1653.32 333.93L1648.97 331.11Z" fill="url(#c233)"/><path d="M1438.03 521.92L1648.97 331.11L1644.55 328.34Z" fill="url(#c234)"/><path d="M1438.03 521.92L1644.55 328.34L1640.06 325.64Z" fill="url(#c235)"/><path d="M1438.03 521.92L1640.06 325.64L1635.52 322.99Z" fill="url(#c236)"/><path d="M1438.03 521.92L1635.52 322.99L1630.92 320.40Z" fill="url(#c237)"/><path d="M1438.03 521.92L1630.92 320.40L1626.25 317.88Z" fill="url(#c238)"/><path d="M1438.03 521.92L1626.25 317.88L1621.53 315.42Z" fill="url(#c239)"/><path d="M1438.03 521.92L1621.53 315.42L1616.76 313.02Z" fill="url(#c240)"/><path d="M1438.03 521.92L1616.76 313.02L1611.93 310.68Z" fill="url(#c241)"/><path d="M1438.03 521.92L1611.93 310.68L1607.83 308.77Z" fill="url(#c242)"/><path d="M1438.03 521.92L1607.83 308.77L1607.04 308.41Z" fill="url(#c243)"/><path d="M1438.03 521.92L1607.04 308.41L1602.11 306.20Z" fill="url(#c244)"/><path d="M1438.03 521.92L1602.11 306.20L1597.13 304.06Z" fill="url(#c245)"/><path d="M1438.03 521.92L1597.13 304.06L1592.09 301.99Z" fill="url(#c246)"/><path d="M1438.03 521.92L1592.09 301.99L1587.01 299.98Z" fill="url(#c247)"/><path d="M1438.03 521.92L1587.01 299.98L1581.89 298.04Z" fill="url(#c248)"/><path d="M1438.03 521.92L1581.89 298.04L1576.72 296.17Z" fill="url(#c249)"/><path d="M1438.03 521.92L1576.72 296.17L1571.51 294.37Z" fill="url(#c250)"/><path d="M1438.03 521.92L1571.51 294.37L1566.25 292.63Z" fill="url(#c251)"/><path d="M1438.03 521.92L1566.25 292.63L1560.96 290.97Z" fill="url(#c252)"/><path d="M1438.03 521.92L1560.96 290.97L1555.63 289.38Z" fill="url(#c253)"/><path d="M1438.03 521.92L1555.63 289.38L1550.27 287.85Z" fill="url(#c254)"/><path d="M1438.03 521.92L1550.27 287.85L1544.87 286.40Z" fill="url(#c255)"/><path d="M1438.03 521.92L1544.87 286.40L1539.44 285.02Z" fill="url(#c256)"/><path d="M1438.03 521.92L1539.44 285.02L1533.98 283.72Z" fill="url(#c257)"/><path d="M1438.03 521.92L1533.98 283.72L1528.48 282.48Z" fill="url(#c258)"/><path d="M1438.03 521.92L1528.48 282.48L1522.97 281.32Z" fill="url(#c259)"/><path d="M1438.03 521.92L1522.97 281.32L1517.42 280.23Z" fill="url(#c260)"/><path d="M1438.03 521.92L1517.42 280.23L1511.85 279.22Z" fill="url(#c261)"/><path d="M1438.03 521.92L1511.85 279.22L1506.26 278.28Z" fill="url(#c262)"/><path d="M1438.03 521.92L1506.26 278.28L1500.65 277.41Z" fill="url(#c263)"/><path d="M1438.03 521.92L1500.65 277.41L1495.02 276.62Z" fill="url(#c264)"/><path d="M1438.03 521.92L1495.02 276.62L1489.37 275.90Z" fill="url(#c265)"/><path d="M1438.03 521.92L1489.37 275.90L1483.70 275.26Z" fill="url(#c266)"/><path d="M1438.03 521.92L1483.70 275.26L1478.03 274.69Z" fill="url(#c267)"/><path d="M1438.03 521.92L1478.03 274.69L1472.33 274.20Z" fill="url(#c268)"/><path d="M1438.03 521.92L1472.33 274.20L1466.63 273.78Z" fill="url(#c269)"/><path d="M1438.03 521.92L1466.63 273.78L1460.92 273.44Z" fill="url(#c270)"/><path d="M1438.03 521.92L1460.92 273.44L1455.21 273.17Z" fill="url(#c271)"/><path d="M1438.03 521.92L1455.21 273.17L1449.49 272.98Z" fill="url(#c272)"/><path d="M1438.03 521.92L1449.49 272.98L1443.76 272.87Z" fill="url(#c273)"/><path d="M1438.03 521.92L1443.76 272.87L1438.03 272.83Z" fill="url(#c274)"/><path d="M1438.03 521.92L1438.03 272.83L1432.31 272.87Z" fill="url(#c275)"/><path d="M1438.03 521.92L1432.31 272.87L1426.58 272.98Z" fill="url(#c276)"/><path d="M1438.03 521.92L1426.58 272.98L1422.67 273.11Z" fill="url(#c277)"/><path d="M1438.03 521.92L1422.67 273.11L1420.86 273.17Z" fill="url(#c278)"/><path d="M1438.03 521.92L1420.86 273.17L1415.14 273.44Z" fill="url(#c279)"/><path d="M1438.03 521.92L1415.14 273.44L1409.43 273.78Z" fill="url(#c280)"/><path d="M1438.03 521.92L1409.43 273.78L1403.73 274.20Z" fill="url(#c281)"/><path d="M1438.03 521.92L1403.73 274.20L1398.04 274.69Z" fill="url(#c282)"/><path d="M1438.03 521.92L1398.04 274.69L1392.36 275.26Z" fill="url(#c283)"/><path d="M1438.03 521.92L1392.36 275.26L1386.70 275.90Z" fill="url(#c284)"/><path d="M1438.03 521.92L1386.70 275.90L1381.05 276.62Z" fill="url(#c285)"/><path d="M1438.03 521.92L1381.05 276.62L1375.42 277.41Z" fill="url(#c286)"/><path d="M1438.03 521.92L1375.42 277.41L1369.81 278.28Z" fill="url(#c287)"/><path d="M1438.03 521.92L1369.81 278.28L1364.22 279.22Z" fill="url(#c288)"/><path d="M1438.03 521.92L1364.22 279.22L1358.65 280.23Z" fill="url(#c289)"/><path d="M1438.03 521.92L1358.65 280.23L1353.10 281.32Z" fill="url(#c290)"/><path d="M1438.03 521.92L1353.10 281.32L1347.58 282.48Z" fill="url(#c291)"/><path d="M1438.03 521.92L1347.58 282.48L1342.09 283.72Z" fill="url(#c292)"/><path d="M1438.03 521.92L1342.09 283.72L1336.63 285.02Z" fill="url(#c293)"/><path d="M1438.03 521.92L1336.63 285.02L1331.20 286.40Z" fill="url(#c294)"/><path d="M1438.03 521.92L1331.20 286.40L1325.80 287.85Z" fill="url(#c295)"/><path d="M1438.03 521.92L1325.80 287.85L1320.43 289.38Z" fill="url(#c296)"/><path d="M1438.03 521.92L1320.43 289.38L1315.11 290.97Z" fill="url(#c297)"/><path d="M1438.03 521.92L1315.11 290.97L1309.81 292.63Z" fill="url(#c298)"/><path d="M1438.03 521.92L1309.81 292.63L1304.56 294.37Z" fill="url(#c299)"/><path d="M1438.03 521.92L1304.56 294.37L1299.35 296.17Z" fill="url(#c300)"/><path d="M1438.03 521.92L1299.35 296.17L1294.18 298.04Z" fill="url(#c301)"/><path d="M1438.03 521.92L1294.18 298.04L1289.06 299.98Z" fill="url(#c302)"/><path d="M1438.03 521.92L1289.06 299.98L1283.98 301.99Z" fill="url(#c303)"/><path d="M1438.03 521.92L1283.98 301.99L1278.94 304.06Z" fill="url(#c304)"/><path d="M1438.03 521.92L1278.94 304.06L1273.96 306.20Z" fill="url(#c305)"/><path d="M1438.03 521.92L1273.96 306.20L1269.02 308.41Z" fill="url(#c306)"/><path d="M1438.03 521.92L1269.02 308.41L1264.14 310.68Z" fill="url(#c307)"/><path d="M1438.03 521.92L1264.14 310.68L1259.31 313.02Z" fill="url(#c308)"/><path d="M1438.03 521.92L1259.31 313.02L1254.53 315.42Z" fill="url(#c309)"/><path d="M1438.03 521.92L1254.53 315.42L1249.81 317.88Z" fill="url(#c310)"/><path d="M1438.03 521.92L1249.81 317.88L1245.15 320.40Z" fill="url(#c311)"/><path d="M1438.03 521.92L1245.15 320.40L1240.55 322.99Z" fill="url(#c312)"/><path d="M1438.03 521.92L1240.55 322.99L1236.00 325.64Z" fill="url(#c313)"/><path d="M1438.03 521.92L1236.00 325.64L1231.52 328.34Z" fill="url(#c314)"/><path d="M1438.03 521.92L1231.52 328.34L1227.10 331.11Z" fill="url(#c315)"/><path d="M1438.03 521.92L1227.10 331.11L1222.75 333.93Z" fill="url(#c316)"/><path d="M1438.03 521.92L1222.75 333.93L1218.46 336.81Z" fill="url(#c317)"/><path d="M1438.03 521.92L1218.46 336.81L1214.23 339.75Z" fill="url(#c318)"/><path d="M1438.03 521.92L1214.23 339.75L1210.08 342.74Z" fill="url(#c319)"/><path d="M1438.03 521.92L1210.08 342.74L1205.99 345.79Z" fill="url(#c320)"/><path d="M1438.03 521.92L1205.99 345.79L1201.98 348.89Z" fill="url(#c321)"/><path d="M1438.03 521.92L1201.98 348.89L1198.04 352.04Z" fill="url(#c322)"/><path d="M1438.03 521.92L1198.04 352.04L1194.17 355.25Z" fill="url(#c323)"/><path d="M1438.03 521.92L1194.17 355.25L1190.37 358.50Z" fill="url(#c324)"/><path d="M1438.03 521.92L1190.37 358.50L1186.65 361.81Z" fill="url(#c325)"/><path d="M1438.03 521.92L1186.65 361.81L1183.01 365.16Z" fill="url(#c326)"/><path d="M1438.03 521.92L1183.01 365.16L1179.45 368.57Z" fill="url(#c327)"/><path d="M1438.03 521.92L1179.45 368.57L1175.96 372.01Z" fill="url(#c328)"/><path d="M1438.03 521.92L1175.96 372.01L1172.55 375.51Z" fill="url(#c329)"/><path d="M1438.03 521.92L1172.55 375.51L1169.23 379.05Z" fill="url(#c330)"/><path d="M1438.03 521.92L1169.23 379.05L1165.98 382.63Z" fill="url(#c331)"/><path d="M1438.03 521.92L1165.98 382.63L1162.82 386.26Z" fill="url(#c332)"/><path d="M1438.03 521.92L1162.82 386.26L1159.74 389.92Z" fill="url(#c333)"/><path d="M1438.03 521.92L1159.74 389.92L1156.75 393.63Z" fill="url(#c334)"/><path d="M1438.03 521.92L1156.75 393.63L1153.84 397.38Z" fill="url(#c335)"/><path d="M1438.03 521.92L1153.84 397.38L1151.02 401.16Z" fill="url(#c336)"/><path d="M1438.03 521.92L1151.02 401.16L1148.29 404.98Z" fill="url(#c337)"/><path d="M1438.03 521.92L1148.29 404.98L1145.65 408.84Z" fill="url(#c338)"/><path d="M1438.03 521.92L1145.65 408.84L1143.09 412.73Z" fill="url(#c339)"/><path d="M1438.03 521.92L1143.09 412.73L1140.63 416.65Z" fill="url(#c340)"/><path d="M1438.03 521.92L1140.63 416.65L1138.25 420.61Z" fill="url(#c341)"/><path d="M1438.03 521.92L1138.25 420.61L1135.97 424.59Z" fill="url(#c342)"/><path d="M1438.03 521.92L1135.97 424.59L1133.78 428.61Z" fill="url(#c343)"/><path d="M1438.03 521.92L1133.78 428.61L1131.68 432.65Z" fill="url(#c344)"/><path d="M1438.03 521.92L1131.68 432.65L1129.67 436.73Z" fill="url(#c345)"/><path d="M1438.03 521.92L1129.67 436.73L1127.76 440.82Z" fill="url(#c346)"/><path d="M1438.03 521.92L1127.76 440.82L1125.94 444.95Z" fill="url(#c347)"/><path d="M1438.03 521.92L1125.94 444.95L1124.22 449.09Z" fill="url(#c348)"/><path d="M1438.03 521.92L1124.22 449.09L1122.59 453.26Z" fill="url(#c349)"/><path d="M1438.03 521.92L1122.59 453.26L1121.06 457.45Z" fill="url(#c350)"/><path d="M1438.03 521.92L1121.06 457.45L1119.63 461.66Z" fill="url(#c351)"/><path d="M1438.03 521.92L1119.63 461.66L1118.29 465.89Z" fill="url(#c352)"/><path d="M1438.03 521.92L1118.29 465.89L1117.05 470.13Z" fill="url(#c353)"/><path d="M1438.03 521.92L1117.05 470.13L1115.91 474.39Z" fill="url(#c354)"/><path d="M1438.03 521.92L1115.91 474.39L1114.87 478.66Z" fill="url(#c355)"/><path d="M1438.03 521.92L1114.87 478.66L1113.92 482.95Z" fill="url(#c356)"/><path d="M1438.03 521.92L1113.92 482.95L1113.07 487.25Z" fill="url(#c357)"/><path d="M1438.03 521.92L1113.07 487.25L1112.33 491.56Z" fill="url(#c358)"/><path d="M1438.03 521.92L1112.33 491.56L1111.68 495.88Z" fill="url(#c359)"/><path d="M1438.03 521.92L1111.68 495.88L1111.13 500.21Z" fill="url(#c360)"/><path d="M1438.03 521.92L1111.13 500.21L1110.68 504.54Z" fill="url(#c361)"/><path d="M1438.03 521.92L1110.68 504.54L1110.33 508.88Z" fill="url(#c362)"/><path d="M1438.03 521.92L1110.33 508.88L1110.08 513.22Z" fill="url(#c363)"/><path d="M1438.03 521.92L1110.08 513.22L1109.93 517.57Z" fill="url(#c364)"/><path d="M1438.03 521.92L1109.93 517.57L1109.88 521.92Z" fill="url(#c365)"/></g></g><path fill-rule="evenodd" fill="#252525" d="M1160.0 176.5H1909.0V746.0H1160.0ZM1316.2 738.9C1316.2 738.9 1316.1 738.9 1316.1 738.9C1316.0 739.0 1316.0 739.0 1315.9 739.0C1315.8 739.0 1315.8 739.0 1315.7 739.0C1315.7 739.0 1315.6 739.1 1315.5 739.1C1315.4 739.1 1315.3 739.1 1315.2 739.1C1315.1 739.1 1315.0 739.1 1314.8 739.1C1314.7 739.1 1314.6 739.1 1314.4 739.1C1314.2 739.0 1314.1 739.0 1313.8 738.9C1313.5 738.8 1313.2 738.6 1312.8 738.4C1312.5 738.2 1312.1 738.0 1311.6 737.7C1311.1 737.4 1310.5 737.0 1309.8 736.5C1309.2 736.1 1308.5 735.6 1307.6 735.0C1306.8 734.4 1305.9 733.8 1304.7 733.0C1303.6 732.3 1302.3 731.4 1300.8 730.4C1299.3 729.4 1297.7 728.4 1295.9 727.1C1294.0 725.7 1292.0 724.3 1289.7 722.4C1287.4 720.4 1285.1 718.7 1282.2 715.5C1279.3 712.4 1276.0 708.8 1272.2 703.5C1268.4 698.3 1264.3 692.4 1259.5 684.1C1254.7 675.7 1249.4 666.0 1243.4 653.3C1237.4 640.5 1230.2 625.8 1223.5 607.6C1216.8 589.5 1209.6 568.1 1203.0 544.4C1196.4 520.6 1189.2 492.6 1183.8 465.4C1178.3 438.2 1173.2 408.1 1170.3 381.0C1167.4 354.0 1165.7 326.6 1166.5 302.9C1167.4 279.2 1170.2 256.5 1175.3 238.9C1180.4 221.3 1188.5 206.8 1197.3 197.4C1206.2 188.1 1217.4 184.4 1228.4 182.8C1239.5 181.2 1251.7 184.8 1263.5 187.9C1275.3 191.0 1287.6 196.6 1299.1 201.5C1310.6 206.5 1321.7 212.1 1332.7 217.8C1343.7 223.6 1354.3 229.8 1365.0 236.2C1375.6 242.6 1386.2 249.4 1396.8 256.3C1407.3 263.2 1417.8 270.5 1428.3 277.8C1438.7 285.1 1449.2 292.6 1459.7 300.2C1470.1 307.8 1480.7 315.5 1491.1 323.3C1501.6 331.0 1512.0 338.9 1522.4 346.7C1532.8 354.5 1543.3 362.3 1553.6 370.1C1563.8 377.9 1574.0 385.6 1584.1 393.2C1594.1 400.9 1604.0 408.4 1613.7 415.8C1623.4 423.2 1632.9 430.4 1642.1 437.4C1651.3 444.4 1660.3 451.2 1668.8 457.7C1677.3 464.1 1685.6 470.5 1693.2 476.2C1700.8 482.0 1707.7 487.3 1714.4 492.4C1721.0 497.4 1727.3 502.2 1733.0 506.5C1738.7 510.8 1743.8 514.6 1748.5 518.2C1753.1 521.7 1757.3 524.9 1761.0 527.8C1764.8 530.7 1768.1 533.1 1771.1 535.4C1774.1 537.7 1776.7 539.6 1779.1 541.5C1781.5 543.3 1783.5 544.9 1785.5 546.4C1787.4 547.9 1789.2 549.2 1790.8 550.5C1792.5 551.7 1793.9 552.8 1795.2 553.8C1796.6 554.8 1797.7 555.7 1798.8 556.4C1799.8 557.2 1800.6 557.9 1801.4 558.4C1802.2 559.0 1802.8 559.5 1803.4 560.0C1804.0 560.4 1804.5 560.8 1804.9 561.1C1805.3 561.4 1805.6 561.6 1805.9 561.9C1806.2 562.1 1806.4 562.3 1806.7 562.5C1806.9 562.7 1807.1 562.8 1807.3 562.9C1807.5 563.1 1807.7 563.3 1807.9 563.4C1808.1 563.6 1808.3 563.7 1808.4 563.8C1808.6 563.9 1808.7 564.0 1808.8 564.1C1808.9 564.1 1808.9 564.2 1809.0 564.2C1809.0 564.3 1809.0 564.3 1809.0 564.3Z"/></g><rect x="1162.0" y="178.5" width="745.0" height="565.5" fill="none" stroke="#b4b4b4" stroke-width="2"/><path d="M1154.00 744.00L1162.00 744.00" stroke="#c4c4c4" stroke-width="2"/><path d="M1161.90 744.00L1161.90 751.00" stroke="#c4c4c4" stroke-width="2"/><text x="1154.5" y="751.3" font-size="14.6" text-anchor="end" fill="#e4e4e4">0</text><text x="1161.5" y="768.3" font-size="14.6" text-anchor="middle" fill="#e4e4e4">0</text><path d="M1154.00 676.68L1162.00 676.68" stroke="#c4c4c4" stroke-width="2"/><path d="M1250.59 744.00L1250.59 751.00" stroke="#c4c4c4" stroke-width="2"/><text x="1154.5" y="684.0" font-size="14.6" text-anchor="end" fill="#e4e4e4" textLength="23.0" lengthAdjust="spacingAndGlyphs">0,1</text><text x="1250.2" y="768.3" font-size="14.6" text-anchor="middle" fill="#e4e4e4" textLength="22.4" lengthAdjust="spacingAndGlyphs">0,1</text><path d="M1154.00 609.36L1162.00 609.36" stroke="#c4c4c4" stroke-width="2"/><path d="M1339.28 744.00L1339.28 751.00" stroke="#c4c4c4" stroke-width="2"/><text x="1154.5" y="616.7" font-size="14.6" text-anchor="end" fill="#e4e4e4" textLength="23.0" lengthAdjust="spacingAndGlyphs">0,2</text><text x="1338.9" y="768.3" font-size="14.6" text-anchor="middle" fill="#e4e4e4" textLength="22.4" lengthAdjust="spacingAndGlyphs">0,2</text><path d="M1154.00 542.04L1162.00 542.04" stroke="#c4c4c4" stroke-width="2"/><path d="M1427.97 744.00L1427.97 751.00" stroke="#c4c4c4" stroke-width="2"/><text x="1154.5" y="549.3" font-size="14.6" text-anchor="end" fill="#e4e4e4" textLength="23.0" lengthAdjust="spacingAndGlyphs">0,3</text><text x="1427.6" y="768.3" font-size="14.6" text-anchor="middle" fill="#e4e4e4" textLength="22.4" lengthAdjust="spacingAndGlyphs">0,3</text><path d="M1154.00 474.72L1162.00 474.72" stroke="#c4c4c4" stroke-width="2"/><path d="M1516.66 744.00L1516.66 751.00" stroke="#c4c4c4" stroke-width="2"/><text x="1154.5" y="482.0" font-size="14.6" text-anchor="end" fill="#e4e4e4" textLength="23.0" lengthAdjust="spacingAndGlyphs">0,4</text><text x="1516.3" y="768.3" font-size="14.6" text-anchor="middle" fill="#e4e4e4" textLength="22.4" lengthAdjust="spacingAndGlyphs">0,4</text><path d="M1154.00 407.40L1162.00 407.40" stroke="#c4c4c4" stroke-width="2"/><path d="M1605.35 744.00L1605.35 751.00" stroke="#c4c4c4" stroke-width="2"/><text x="1154.5" y="414.7" font-size="14.6" text-anchor="end" fill="#e4e4e4" textLength="23.0" lengthAdjust="spacingAndGlyphs">0,5</text><text x="1605.0" y="768.3" font-size="14.6" text-anchor="middle" fill="#e4e4e4" textLength="22.4" lengthAdjust="spacingAndGlyphs">0,5</text><path d="M1154.00 340.08L1162.00 340.08" stroke="#c4c4c4" stroke-width="2"/><path d="M1694.04 744.00L1694.04 751.00" stroke="#c4c4c4" stroke-width="2"/><text x="1154.5" y="347.4" font-size="14.6" text-anchor="end" fill="#e4e4e4" textLength="23.0" lengthAdjust="spacingAndGlyphs">0,6</text><text x="1693.6" y="768.3" font-size="14.6" text-anchor="middle" fill="#e4e4e4" textLength="22.4" lengthAdjust="spacingAndGlyphs">0,6</text><path d="M1154.00 272.76L1162.00 272.76" stroke="#c4c4c4" stroke-width="2"/><path d="M1782.73 744.00L1782.73 751.00" stroke="#c4c4c4" stroke-width="2"/><text x="1154.5" y="280.1" font-size="14.6" text-anchor="end" fill="#e4e4e4" textLength="23.0" lengthAdjust="spacingAndGlyphs">0,7</text><text x="1782.3" y="768.3" font-size="14.6" text-anchor="middle" fill="#e4e4e4" textLength="22.4" lengthAdjust="spacingAndGlyphs">0,7</text><path d="M1154.00 205.44L1162.00 205.44" stroke="#c4c4c4" stroke-width="2"/><path d="M1871.42 744.00L1871.42 751.00" stroke="#c4c4c4" stroke-width="2"/><text x="1154.5" y="212.7" font-size="14.6" text-anchor="end" fill="#e4e4e4" textLength="23.0" lengthAdjust="spacingAndGlyphs">0,8</text><text x="1871.0" y="768.3" font-size="14.6" text-anchor="middle" fill="#e4e4e4" textLength="22.4" lengthAdjust="spacingAndGlyphs">0,8</text><rect x="1428.5" y="477.0" width="15" height="15" fill="none" stroke="#fff" stroke-width="2"/><rect x="1427.0" y="441.0" width="15" height="15" fill="none" stroke="#fff" stroke-width="2"/><rect x="1423.8" y="406.7" width="15" height="15" fill="none" stroke="#fff" stroke-width="2"/><rect x="1422.2" y="370.6" width="15" height="15" fill="none" stroke="#fff" stroke-width="2"/><rect x="1418.9" y="331.7" width="15" height="15" fill="none" stroke="#fff" stroke-width="2"/><rect x="1450.3" y="489.5" width="15" height="15" fill="none" stroke="#fff" stroke-width="2"/><rect x="1469.2" y="464.9" width="15" height="15" fill="none" stroke="#fff" stroke-width="2"/><rect x="1487.9" y="442.7" width="15" height="15" fill="none" stroke="#fff" stroke-width="2"/><rect x="1505.0" y="421.0" width="15" height="15" fill="none" stroke="#fff" stroke-width="2"/><rect x="1525.3" y="395.8" width="15" height="15" fill="none" stroke="#fff" stroke-width="2"/><rect x="1415.7" y="514.7" width="15" height="15" fill="none" stroke="#fff" stroke-width="2"/><rect x="1399.9" y="514.7" width="15" height="15" fill="none" stroke="#fff" stroke-width="2"/><rect x="1384.3" y="514.7" width="15" height="15" fill="none" stroke="#fff" stroke-width="2"/><rect x="1368.2" y="514.7" width="15" height="15" fill="none" stroke="#fff" stroke-width="2"/><rect x="1353.4" y="514.7" width="15" height="15" fill="none" stroke="#fff" stroke-width="2"/><rect x="1488.0" y="513.1" width="15" height="15" fill="none" stroke="#fff" stroke-width="2"/><rect x="1547.3" y="513.1" width="15" height="15" fill="none" stroke="#fff" stroke-width="2"/><rect x="1600.6" y="513.1" width="15" height="15" fill="none" stroke="#fff" stroke-width="2"/><rect x="1656.7" y="513.1" width="15" height="15" fill="none" stroke="#fff" stroke-width="2"/><rect x="1721.2" y="513.2" width="15" height="15" fill="none" stroke="#fff" stroke-width="2"/><rect x="1433.1" y="538.2" width="15" height="15" fill="none" stroke="#fff" stroke-width="2"/><rect x="1434.7" y="563.5" width="15" height="15" fill="none" stroke="#fff" stroke-width="2"/><rect x="1434.7" y="583.9" width="15" height="15" fill="none" stroke="#fff" stroke-width="2"/><rect x="1436.0" y="607.4" width="15" height="15" fill="none" stroke="#fff" stroke-width="2"/><rect x="1437.7" y="632.1" width="15" height="15" fill="none" stroke="#fff" stroke-width="2"/><rect x="1401.7" y="550.7" width="15" height="15" fill="none" stroke="#fff" stroke-width="2"/><rect x="1373.5" y="586.8" width="15" height="15" fill="none" stroke="#fff" stroke-width="2"/><rect x="1345.7" y="621.1" width="15" height="15" fill="none" stroke="#fff" stroke-width="2"/><rect x="1317.0" y="655.5" width="15" height="15" fill="none" stroke="#fff" stroke-width="2"/><rect x="1286.1" y="694.7" width="15" height="15" fill="none" stroke="#fff" stroke-width="2"/><rect x="1431.8" y="515.0" width="14.4" height="14.4" fill="none" stroke="#0c0c0c" stroke-width="2.8"/><circle cx="1431.4" cy="484.6" r="4.6" fill="#a5bca5" stroke="#111" stroke-width="1.5"/><circle cx="1429.5" cy="448.6" r="4.6" fill="#8fbc8f" stroke="#111" stroke-width="1.5"/><circle cx="1428.0" cy="412.6" r="4.6" fill="#75bc75" stroke="#111" stroke-width="1.5"/><circle cx="1428.1" cy="376.6" r="4.6" fill="#53bc53" stroke="#111" stroke-width="1.5"/><circle cx="1426.3" cy="334.7" r="4.6" fill="#00bc00" stroke="#111" stroke-width="1.5"/><circle cx="1449.8" cy="497.0" r="4.6" fill="#bcbca5" stroke="#111" stroke-width="1.5"/><circle cx="1469.8" cy="470.4" r="4.6" fill="#bcbc8f" stroke="#111" stroke-width="1.5"/><circle cx="1487.5" cy="446.9" r="4.6" fill="#bcbc75" stroke="#111" stroke-width="1.5"/><circle cx="1505.7" cy="423.4" r="4.6" fill="#bcbc53" stroke="#111" stroke-width="1.5"/><circle cx="1526.9" cy="397.3" r="4.6" fill="#bcbc00" stroke="#111" stroke-width="1.5"/><circle cx="1415.5" cy="522.2" r="4.6" fill="#a5bcbc" stroke="#111" stroke-width="1.5"/><circle cx="1403.0" cy="520.7" r="4.6" fill="#8fbcbc" stroke="#111" stroke-width="1.5"/><circle cx="1387.0" cy="520.7" r="4.6" fill="#75bcbc" stroke="#111" stroke-width="1.5"/><circle cx="1375.0" cy="520.7" r="4.6" fill="#53bcbc" stroke="#111" stroke-width="1.5"/><circle cx="1359.4" cy="522.2" r="4.6" fill="#00bcbc" stroke="#111" stroke-width="1.5"/><circle cx="1485.6" cy="522.2" r="4.6" fill="#bca5a5" stroke="#111" stroke-width="1.5"/><circle cx="1545.3" cy="520.7" r="4.6" fill="#bc8f8f" stroke="#111" stroke-width="1.5"/><circle cx="1601.5" cy="520.6" r="4.6" fill="#bc7575" stroke="#111" stroke-width="1.5"/><circle cx="1665.8" cy="518.8" r="4.6" fill="#bc5353" stroke="#111" stroke-width="1.5"/><circle cx="1736.0" cy="520.6" r="4.6" fill="#bc0000" stroke="#111" stroke-width="1.5"/><circle cx="1433.0" cy="545.6" r="4.6" fill="#bca5bc" stroke="#111" stroke-width="1.5"/><circle cx="1433.0" cy="571.0" r="4.6" fill="#bc8fbc" stroke="#111" stroke-width="1.5"/><circle cx="1433.0" cy="592.6" r="4.6" fill="#bc75bc" stroke="#111" stroke-width="1.5"/><circle cx="1433.0" cy="617.6" r="4.6" fill="#bc53bc" stroke="#111" stroke-width="1.5"/><circle cx="1434.3" cy="644.5" r="4.6" fill="#bc00bc" stroke="#111" stroke-width="1.5"/><circle cx="1403.0" cy="558.3" r="4.6" fill="#a5a5bc" stroke="#111" stroke-width="1.5"/><circle cx="1376.2" cy="594.3" r="4.6" fill="#8f8fbc" stroke="#111" stroke-width="1.5"/><circle cx="1350.1" cy="630.3" r="4.6" fill="#7575bc" stroke="#111" stroke-width="1.5"/><circle cx="1320.1" cy="666.1" r="4.6" fill="#5353bc" stroke="#111" stroke-width="1.5"/><circle cx="1294.8" cy="701.0" r="4.6" fill="#0000bc" stroke="#111" stroke-width="1.5"/><circle cx="1433" cy="522.2" r="4.6" fill="#fff" stroke="#111" stroke-width="1.5"/><rect x="1645.00" y="183.50" width="257.50" height="217.50" fill="#222"/><svg x="1649" y="187" width="250" height="210" viewBox="0 0 250 210"><g shape-rendering="crispEdges"><path d="M-1223.50 1974.26L2303.21 -2103.19L2296.48 -2107.29Z" fill="#996500"/><path d="M-1223.50 1974.26L2296.48 -2107.29L2289.75 -2111.38Z" fill="#996500"/><path d="M-1223.50 1974.26L2289.75 -2111.38L2283.01 -2115.46Z" fill="#996600"/><path d="M-1223.50 1974.26L2283.01 -2115.46L2276.26 -2119.54Z" fill="#996700"/><path d="M-1223.50 1974.26L2276.26 -2119.54L2269.51 -2123.61Z" fill="#996700"/><path d="M-1223.50 1974.26L2269.51 -2123.61L2262.75 -2127.67Z" fill="#996800"/><path d="M-1223.50 1974.26L2262.75 -2127.67L2255.98 -2131.72Z" fill="#996900"/><path d="M-1223.50 1974.26L2255.98 -2131.72L2249.21 -2135.76Z" fill="#996900"/><path d="M-1223.50 1974.26L2249.21 -2135.76L2242.42 -2139.80Z" fill="#996a00"/><path d="M-1223.50 1974.26L2242.42 -2139.80L2235.64 -2143.83Z" fill="#996b00"/><path d="M-1223.50 1974.26L2235.64 -2143.83L2228.84 -2147.85Z" fill="#996c00"/><path d="M-1223.50 1974.26L2228.84 -2147.85L2222.04 -2151.86Z" fill="#996c00"/><path d="M-1223.50 1974.26L2222.04 -2151.86L2215.23 -2155.87Z" fill="#996d00"/><path d="M-1223.50 1974.26L2215.23 -2155.87L2208.42 -2159.86Z" fill="#996e00"/><path d="M-1223.50 1974.26L2208.42 -2159.86L2201.60 -2163.85Z" fill="#996f00"/><path d="M-1223.50 1974.26L2201.60 -2163.85L2194.77 -2167.84Z" fill="#996f00"/><path d="M-1223.50 1974.26L2194.77 -2167.84L2187.94 -2171.81Z" fill="#997000"/><path d="M-1223.50 1974.26L2187.94 -2171.81L2181.10 -2175.77Z" fill="#997100"/><path d="M-1223.50 1974.26L2181.10 -2175.77L2174.25 -2179.73Z" fill="#997200"/><path d="M-1223.50 1974.26L2174.25 -2179.73L2167.40 -2183.68Z" fill="#997200"/><path d="M-1223.50 1974.26L2167.40 -2183.68L2160.54 -2187.62Z" fill="#997300"/><path d="M-1223.50 1974.26L2160.54 -2187.62L2153.67 -2191.56Z" fill="#997400"/><path d="M-1223.50 1974.26L2153.67 -2191.56L2146.80 -2195.48Z" fill="#997500"/><path d="M-1223.50 1974.26L2146.80 -2195.48L2139.92 -2199.40Z" fill="#997600"/><path d="M-1223.50 1974.26L2139.92 -2199.40L2133.04 -2203.31Z" fill="#997600"/><path d="M-1223.50 1974.26L2133.04 -2203.31L2126.14 -2207.21Z" fill="#997700"/><path d="M-1223.50 1974.26L2126.14 -2207.21L2119.24 -2211.10Z" fill="#997800"/><path d="M-1223.50 1974.26L2119.24 -2211.10L2112.34 -2214.99Z" fill="#997900"/><path d="M-1223.50 1974.26L2112.34 -2214.99L2105.43 -2218.87Z" fill="#997a00"/><path d="M-1223.50 1974.26L2105.43 -2218.87L2098.51 -2222.74Z" fill="#997a00"/><path d="M-1223.50 1974.26L2098.51 -2222.74L2091.59 -2226.60Z" fill="#997b00"/><path d="M-1223.50 1974.26L2091.59 -2226.60L2084.66 -2230.45Z" fill="#997c00"/><path d="M-1223.50 1974.26L2084.66 -2230.45L2077.72 -2234.30Z" fill="#997d00"/><path d="M-1223.50 1974.26L2077.72 -2234.30L2070.78 -2238.13Z" fill="#997e00"/><path d="M-1223.50 1974.26L2070.78 -2238.13L2063.83 -2241.96Z" fill="#997f00"/><path d="M-1223.50 1974.26L2063.83 -2241.96L2056.87 -2245.78Z" fill="#998000"/><path d="M-1223.50 1974.26L2056.87 -2245.78L2049.91 -2249.60Z" fill="#998100"/><path d="M-1223.50 1974.26L2049.91 -2249.60L2042.94 -2253.40Z" fill="#998100"/><path d="M-1223.50 1974.26L2042.94 -2253.40L2035.97 -2257.20Z" fill="#998200"/><path d="M-1223.50 1974.26L2035.97 -2257.20L2028.98 -2260.99Z" fill="#998300"/><path d="M-1223.50 1974.26L2028.98 -2260.99L2022.00 -2264.77Z" fill="#998400"/><path d="M-1223.50 1974.26L2022.00 -2264.77L2015.00 -2268.54Z" fill="#998500"/><path d="M-1223.50 1974.26L2015.00 -2268.54L2008.00 -2272.30Z" fill="#998600"/><path d="M-1223.50 1974.26L2008.00 -2272.30L2001.00 -2276.06Z" fill="#998700"/><path d="M-1223.50 1974.26L2001.00 -2276.06L1993.99 -2279.81Z" fill="#998800"/><path d="M-1223.50 1974.26L1993.99 -2279.81L1986.97 -2283.55Z" fill="#998900"/><path d="M-1223.50 1974.26L1986.97 -2283.55L1979.94 -2287.28Z" fill="#998a00"/><path d="M-1223.50 1974.26L1979.94 -2287.28L1972.91 -2291.00Z" fill="#998b00"/><path d="M-1223.50 1974.26L1972.91 -2291.00L1965.88 -2294.72Z" fill="#998c00"/><path d="M-1223.50 1974.26L1965.88 -2294.72L1958.83 -2298.42Z" fill="#998d00"/><path d="M-1223.50 1974.26L1958.83 -2298.42L1951.79 -2302.12Z" fill="#998e00"/><path d="M-1223.50 1974.26L1951.79 -2302.12L1944.73 -2305.81Z" fill="#998f00"/><path d="M-1223.50 1974.26L1944.73 -2305.81L1937.67 -2309.49Z" fill="#999000"/><path d="M-1223.50 1974.26L1937.67 -2309.49L1930.60 -2313.17Z" fill="#999100"/><path d="M-1223.50 1974.26L1930.60 -2313.17L1923.53 -2316.83Z" fill="#999200"/><path d="M-1223.50 1974.26L1923.53 -2316.83L1916.45 -2320.49Z" fill="#999300"/><path d="M-1223.50 1974.26L1916.45 -2320.49L1909.37 -2324.14Z" fill="#999400"/><path d="M-1223.50 1974.26L1909.37 -2324.14L1902.27 -2327.78Z" fill="#999500"/><path d="M-1223.50 1974.26L1902.27 -2327.78L1895.18 -2331.41Z" fill="#999600"/><path d="M-1223.50 1974.26L1895.18 -2331.41L1888.07 -2335.04Z" fill="#999700"/><path d="M-1223.50 1974.26L1888.07 -2335.04L1880.96 -2338.66Z" fill="#999900"/><path d="M-1223.50 1974.26L1880.96 -2338.66L1873.85 -2342.26Z" fill="#989900"/><path d="M-1223.50 1974.26L1873.85 -2342.26L1866.73 -2345.86Z" fill="#979900"/><path d="M-1223.50 1974.26L1866.73 -2345.86L1859.60 -2349.45Z" fill="#969900"/><path d="M-1223.50 1974.26L1859.60 -2349.45L1852.47 -2353.04Z" fill="#959900"/><path d="M-1223.50 1974.26L1852.47 -2353.04L1845.33 -2356.61Z" fill="#949900"/><path d="M-1223.50 1974.26L1845.33 -2356.61L1838.19 -2360.18Z" fill="#939900"/><path d="M-1223.50 1974.26L1838.19 -2360.18L1831.03 -2363.74Z" fill="#929900"/><path d="M-1223.50 1974.26L1831.03 -2363.74L1823.88 -2367.29Z" fill="#919900"/><path d="M-1223.50 1974.26L1823.88 -2367.29L1816.72 -2370.83Z" fill="#8f9900"/><path d="M-1223.50 1974.26L1816.72 -2370.83L1809.55 -2374.36Z" fill="#8e9900"/><path d="M-1223.50 1974.26L1809.55 -2374.36L1802.37 -2377.89Z" fill="#8d9900"/><path d="M-1223.50 1974.26L1802.37 -2377.89L1795.19 -2381.40Z" fill="#8c9900"/><path d="M-1223.50 1974.26L1795.19 -2381.40L1788.01 -2384.91Z" fill="#8b9900"/><path d="M-1223.50 1974.26L1788.01 -2384.91L1780.82 -2388.41Z" fill="#8a9900"/><path d="M-1223.50 1974.26L1780.82 -2388.41L1773.62 -2391.90Z" fill="#899900"/><path d="M-1223.50 1974.26L1773.62 -2391.90L1766.42 -2395.39Z" fill="#889900"/><path d="M-1223.50 1974.26L1766.42 -2395.39L1759.21 -2398.86Z" fill="#879900"/><path d="M-1223.50 1974.26L1759.21 -2398.86L1751.99 -2402.33Z" fill="#869900"/><path d="M-1223.50 1974.26L1751.99 -2402.33L1744.77 -2405.79Z" fill="#859900"/><path d="M-1223.50 1974.26L1744.77 -2405.79L1737.55 -2409.24Z" fill="#849900"/><path d="M-1223.50 1974.26L1737.55 -2409.24L1730.32 -2412.68Z" fill="#839900"/><path d="M-1223.50 1974.26L1730.32 -2412.68L1723.08 -2416.11Z" fill="#829900"/><path d="M-1223.50 1974.26L1723.08 -2416.11L1715.84 -2419.53Z" fill="#819900"/><path d="M-1223.50 1974.26L1715.84 -2419.53L1708.59 -2422.95Z" fill="#809900"/><path d="M-1223.50 1974.26L1708.59 -2422.95L1701.34 -2426.36Z" fill="#7f9900"/><path d="M-1223.50 1974.26L1701.34 -2426.36L1694.08 -2429.76Z" fill="#7e9900"/><path d="M-1223.50 1974.26L1694.08 -2429.76L1686.81 -2433.15Z" fill="#7d9900"/><path d="M-1223.50 1974.26L1686.81 -2433.15L1679.54 -2436.53Z" fill="#7c9900"/><path d="M-1223.50 1974.26L1679.54 -2436.53L1672.26 -2439.90Z" fill="#7b9900"/><path d="M-1223.50 1974.26L1672.26 -2439.90L1664.98 -2443.27Z" fill="#7a9900"/><path d="M-1223.50 1974.26L1664.98 -2443.27L1657.70 -2446.62Z" fill="#799900"/><path d="M-1223.50 1974.26L1657.70 -2446.62L1650.40 -2449.97Z" fill="#789900"/><path d="M-1223.50 1974.26L1650.40 -2449.97L1643.10 -2453.31Z" fill="#779900"/><path d="M-1223.50 1974.26L1643.10 -2453.31L1635.80 -2456.64Z" fill="#769900"/><path d="M-1223.50 1974.26L1635.80 -2456.64L1628.49 -2459.97Z" fill="#759900"/><path d="M-1223.50 1974.26L1628.49 -2459.97L1621.18 -2463.28Z" fill="#749900"/><path d="M-1223.50 1974.26L1621.18 -2463.28L1613.86 -2466.59Z" fill="#739900"/><path d="M-1223.50 1974.26L1613.86 -2466.59L1606.53 -2469.88Z" fill="#729900"/><path d="M-1223.50 1974.26L1606.53 -2469.88L1599.20 -2473.17Z" fill="#719900"/><path d="M-1223.50 1974.26L1599.20 -2473.17L1591.86 -2476.45Z" fill="#709900"/><path d="M-1223.50 1974.26L1591.86 -2476.45L1584.52 -2479.72Z" fill="#6f9900"/><path d="M-1223.50 1974.26L1584.52 -2479.72L1577.17 -2482.99Z" fill="#6e9900"/><path d="M-1223.50 1974.26L1577.17 -2482.99L1569.82 -2486.24Z" fill="#6d9900"/><path d="M-1223.50 1974.26L1569.82 -2486.24L1562.46 -2489.49Z" fill="#6d9900"/><path d="M-1223.50 1974.26L1562.46 -2489.49L1555.10 -2492.72Z" fill="#6c9900"/><path d="M-1223.50 1974.26L1555.10 -2492.72L1547.73 -2495.95Z" fill="#6b9900"/><path d="M-1223.50 1974.26L1547.73 -2495.95L1540.35 -2499.17Z" fill="#6a9900"/><path d="M-1223.50 1974.26L1540.35 -2499.17L1532.98 -2502.38Z" fill="#699900"/><path d="M-1223.50 1974.26L1532.98 -2502.38L1525.59 -2505.59Z" fill="#689900"/><path d="M-1223.50 1974.26L1525.59 -2505.59L1518.20 -2508.78Z" fill="#679900"/><path d="M-1223.50 1974.26L1518.20 -2508.78L1510.81 -2511.97Z" fill="#669900"/><path d="M-1223.50 1974.26L1510.81 -2511.97L1503.40 -2515.14Z" fill="#659900"/><path d="M-1223.50 1974.26L1503.40 -2515.14L1496.00 -2518.31Z" fill="#649900"/><path d="M-1223.50 1974.26L1496.00 -2518.31L1488.59 -2521.47Z" fill="#649900"/><path d="M-1223.50 1974.26L1488.59 -2521.47L1481.17 -2524.62Z" fill="#639900"/><path d="M-1223.50 1974.26L1481.17 -2524.62L1473.75 -2527.77Z" fill="#629900"/><path d="M-1223.50 1974.26L1473.75 -2527.77L1466.32 -2530.90Z" fill="#619900"/><path d="M-1223.50 1974.26L1466.32 -2530.90L1458.89 -2534.03Z" fill="#609900"/><path d="M-1223.50 1974.26L1458.89 -2534.03L1451.46 -2537.14Z" fill="#5f9900"/><path d="M-1223.50 1974.26L1451.46 -2537.14L1444.01 -2540.25Z" fill="#5e9900"/><path d="M-1223.50 1974.26L1444.01 -2540.25L1436.57 -2543.35Z" fill="#5d9900"/><path d="M-1223.50 1974.26L1436.57 -2543.35L1429.11 -2546.44Z" fill="#5d9900"/><path d="M-1223.50 1974.26L1429.11 -2546.44L1421.66 -2549.52Z" fill="#5c9900"/><path d="M-1223.50 1974.26L1421.66 -2549.52L1414.19 -2552.60Z" fill="#5b9900"/><path d="M-1223.50 1974.26L1414.19 -2552.60L1406.73 -2555.66Z" fill="#5a9900"/><g clip-path="url(#tri2)"><path d="M-410.00 844.46L875.12 -273.39L869.30 -278.09Z" fill="url(#n0)"/><path d="M-410.00 844.46L869.30 -278.09L863.46 -282.77Z" fill="url(#n1)"/><path d="M-410.00 844.46L863.46 -282.77L857.59 -287.43Z" fill="url(#n2)"/><path d="M-410.00 844.46L857.59 -287.43L851.70 -292.06Z" fill="url(#n3)"/><path d="M-410.00 844.46L851.70 -292.06L845.78 -296.68Z" fill="url(#n4)"/><path d="M-410.00 844.46L845.78 -296.68L839.84 -301.27Z" fill="url(#n5)"/><path d="M-410.00 844.46L839.84 -301.27L833.88 -305.84Z" fill="url(#n6)"/><path d="M-410.00 844.46L833.88 -305.84L827.89 -310.39Z" fill="url(#n7)"/><path d="M-410.00 844.46L827.89 -310.39L821.88 -314.91Z" fill="url(#n8)"/><path d="M-410.00 844.46L821.88 -314.91L815.85 -319.42Z" fill="url(#n9)"/><path d="M-410.00 844.46L815.85 -319.42L809.79 -323.90Z" fill="url(#n10)"/><path d="M-410.00 844.46L809.79 -323.90L803.71 -328.36Z" fill="url(#n11)"/><path d="M-410.00 844.46L803.71 -328.36L797.61 -332.80Z" fill="url(#n12)"/><path d="M-410.00 844.46L797.61 -332.80L791.48 -337.21Z" fill="url(#n13)"/><path d="M-410.00 844.46L791.48 -337.21L785.33 -341.60Z" fill="url(#n14)"/><path d="M-410.00 844.46L785.33 -341.60L779.16 -345.97Z" fill="url(#n15)"/><path d="M-410.00 844.46L779.16 -345.97L772.96 -350.32Z" fill="url(#n16)"/><path d="M-410.00 844.46L772.96 -350.32L766.74 -354.64Z" fill="url(#n17)"/><path d="M-410.00 844.46L766.74 -354.64L760.50 -358.95Z" fill="url(#n18)"/><path d="M-410.00 844.46L760.50 -358.95L754.24 -363.22Z" fill="url(#n19)"/><path d="M-410.00 844.46L754.24 -363.22L747.96 -367.48Z" fill="url(#n20)"/><path d="M-410.00 844.46L747.96 -367.48L741.65 -371.71Z" fill="url(#n21)"/><path d="M-410.00 844.46L741.65 -371.71L735.32 -375.92Z" fill="url(#n22)"/><path d="M-410.00 844.46L735.32 -375.92L728.97 -380.11Z" fill="url(#n23)"/><path d="M-410.00 844.46L728.97 -380.11L722.60 -384.27Z" fill="url(#n24)"/><path d="M-410.00 844.46L722.60 -384.27L716.21 -388.41Z" fill="url(#n25)"/><path d="M-410.00 844.46L716.21 -388.41L709.79 -392.53Z" fill="url(#n26)"/><path d="M-410.00 844.46L709.79 -392.53L703.36 -396.62Z" fill="url(#n27)"/><path d="M-410.00 844.46L703.36 -396.62L696.90 -400.69Z" fill="url(#n28)"/><path d="M-410.00 844.46L696.90 -400.69L690.42 -404.73Z" fill="url(#n29)"/><path d="M-410.00 844.46L690.42 -404.73L683.92 -408.75Z" fill="url(#n30)"/><path d="M-410.00 844.46L683.92 -408.75L677.40 -412.75Z" fill="url(#n31)"/><path d="M-410.00 844.46L677.40 -412.75L670.86 -416.73Z" fill="url(#n32)"/><path d="M-410.00 844.46L670.86 -416.73L664.30 -420.68Z" fill="url(#n33)"/><path d="M-410.00 844.46L664.30 -420.68L657.72 -424.60Z" fill="url(#n34)"/><path d="M-410.00 844.46L657.72 -424.60L651.12 -428.50Z" fill="url(#n35)"/><path d="M-410.00 844.46L651.12 -428.50L644.49 -432.38Z" fill="url(#n36)"/><path d="M-410.00 844.46L644.49 -432.38L637.85 -436.23Z" fill="url(#n37)"/><path d="M-410.00 844.46L637.85 -436.23L631.19 -440.06Z" fill="url(#n38)"/><path d="M-410.00 844.46L631.19 -440.06L624.51 -443.86Z" fill="url(#n39)"/><path d="M-410.00 844.46L624.51 -443.86L617.80 -447.64Z" fill="url(#n40)"/><path d="M-410.00 844.46L617.80 -447.64L611.08 -451.40Z" fill="url(#n41)"/><path d="M-410.00 844.46L611.08 -451.40L604.34 -455.13Z" fill="url(#n42)"/><path d="M-410.00 844.46L604.34 -455.13L597.58 -458.83Z" fill="url(#n43)"/><path d="M-410.00 844.46L597.58 -458.83L590.80 -462.51Z" fill="url(#n44)"/><path d="M-410.00 844.46L590.80 -462.51L584.00 -466.17Z" fill="url(#n45)"/><path d="M-410.00 844.46L584.00 -466.17L577.19 -469.80Z" fill="url(#n46)"/><path d="M-410.00 844.46L577.19 -469.80L570.35 -473.41Z" fill="url(#n47)"/><path d="M-410.00 844.46L570.35 -473.41L563.50 -476.99Z" fill="url(#n48)"/><path d="M-410.00 844.46L563.50 -476.99L556.62 -480.54Z" fill="url(#n49)"/><path d="M-410.00 844.46L556.62 -480.54L549.73 -484.07Z" fill="url(#n50)"/><path d="M-410.00 844.46L549.73 -484.07L547.23 -485.35Z" fill="url(#n51)"/><path d="M-410.00 844.46L547.23 -485.35L542.82 -487.58Z" fill="url(#n52)"/><path d="M-410.00 844.46L542.82 -487.58L535.89 -491.06Z" fill="url(#n53)"/><path d="M-410.00 844.46L535.89 -491.06L528.95 -494.51Z" fill="url(#n54)"/><path d="M-410.00 844.46L528.95 -494.51L521.98 -497.94Z" fill="url(#n55)"/><path d="M-410.00 844.46L521.98 -497.94L515.00 -501.34Z" fill="url(#n56)"/><path d="M-410.00 844.46L515.00 -501.34L508.00 -504.72Z" fill="url(#n57)"/><path d="M-410.00 844.46L508.00 -504.72L500.98 -508.07Z" fill="url(#n58)"/><path d="M-410.00 844.46L500.98 -508.07L493.95 -511.40Z" fill="url(#n59)"/><path d="M-410.00 844.46L493.95 -511.40L486.90 -514.70Z" fill="url(#n60)"/><path d="M-410.00 844.46L486.90 -514.70L479.83 -517.97Z" fill="url(#n61)"/><path d="M-410.00 844.46L479.83 -517.97L472.74 -521.22Z" fill="url(#n62)"/><path d="M-410.00 844.46L472.74 -521.22L465.64 -524.44Z" fill="url(#n63)"/><path d="M-410.00 844.46L465.64 -524.44L458.52 -527.64Z" fill="url(#n64)"/><path d="M-410.00 844.46L458.52 -527.64L451.39 -530.81Z" fill="url(#n65)"/><path d="M-410.00 844.46L451.39 -530.81L444.23 -533.95Z" fill="url(#n66)"/><path d="M-410.00 844.46L444.23 -533.95L437.07 -537.07Z" fill="url(#n67)"/><path d="M-410.00 844.46L437.07 -537.07L429.88 -540.16Z" fill="url(#n68)"/><path d="M-410.00 844.46L429.88 -540.16L422.68 -543.23Z" fill="url(#n69)"/><path d="M-410.00 844.46L422.68 -543.23L415.47 -546.27Z" fill="url(#n70)"/><path d="M-410.00 844.46L415.47 -546.27L408.23 -549.28Z" fill="url(#n71)"/><path d="M-410.00 844.46L408.23 -549.28L400.99 -552.27Z" fill="url(#n72)"/><path d="M-410.00 844.46L400.99 -552.27L393.72 -555.23Z" fill="url(#n73)"/><path d="M-410.00 844.46L393.72 -555.23L386.45 -558.16Z" fill="url(#n74)"/><path d="M-410.00 844.46L386.45 -558.16L379.15 -561.06Z" fill="url(#n75)"/><path d="M-410.00 844.46L379.15 -561.06L371.84 -563.94Z" fill="url(#n76)"/><path d="M-410.00 844.46L371.84 -563.94L364.52 -566.79Z" fill="url(#n77)"/><path d="M-410.00 844.46L364.52 -566.79L357.18 -569.62Z" fill="url(#n78)"/><path d="M-410.00 844.46L357.18 -569.62L349.83 -572.42Z" fill="url(#n79)"/><path d="M-410.00 844.46L349.83 -572.42L342.46 -575.19Z" fill="url(#n80)"/><path d="M-410.00 844.46L342.46 -575.19L335.08 -577.93Z" fill="url(#n81)"/><path d="M-410.00 844.46L335.08 -577.93L327.69 -580.65Z" fill="url(#n82)"/><path d="M-410.00 844.46L327.69 -580.65L320.28 -583.34Z" fill="url(#n83)"/><path d="M-410.00 844.46L320.28 -583.34L312.85 -586.00Z" fill="url(#n84)"/><path d="M-410.00 844.46L312.85 -586.00L305.42 -588.64Z" fill="url(#n85)"/><path d="M-410.00 844.46L305.42 -588.64L297.96 -591.25Z" fill="url(#n86)"/><path d="M-410.00 844.46L297.96 -591.25L290.50 -593.83Z" fill="url(#n87)"/><path d="M-410.00 844.46L290.50 -593.83L283.02 -596.38Z" fill="url(#n88)"/><path d="M-410.00 844.46L283.02 -596.38L275.53 -598.91Z" fill="url(#n89)"/><path d="M-410.00 844.46L275.53 -598.91L268.03 -601.41Z" fill="url(#n90)"/><path d="M-410.00 844.46L268.03 -601.41L260.51 -603.88Z" fill="url(#n91)"/><path d="M-410.00 844.46L260.51 -603.88L252.98 -606.32Z" fill="url(#n92)"/><path d="M-410.00 844.46L252.98 -606.32L245.44 -608.74Z" fill="url(#n93)"/><path d="M-410.00 844.46L245.44 -608.74L237.88 -611.13Z" fill="url(#n94)"/><path d="M-410.00 844.46L237.88 -611.13L230.32 -613.49Z" fill="url(#n95)"/><path d="M-410.00 844.46L230.32 -613.49L222.74 -615.82Z" fill="url(#n96)"/><path d="M-410.00 844.46L222.74 -615.82L215.15 -618.13Z" fill="url(#n97)"/><path d="M-410.00 844.46L215.15 -618.13L207.54 -620.40Z" fill="url(#n98)"/><path d="M-410.00 844.46L207.54 -620.40L199.93 -622.65Z" fill="url(#n99)"/><path d="M-410.00 844.46L199.93 -622.65L192.30 -624.88Z" fill="url(#n100)"/></g></g><rect x="115.5" y="96.5" width="15" height="15" fill="none" stroke="#fff" stroke-width="2"/><circle cx="87.4" cy="71.5" r="4.6" fill="#c0bc10" stroke="#111" stroke-width="1.5"/></svg><rect x="1648.2" y="186.5" width="251.3" height="211.3" fill="none" stroke="#a4a4a4" stroke-width="1.8"/><text x="18.0" y="852.0" font-size="31.5" text-anchor="start" fill="#f2f2f2" textLength="251.5" lengthAdjust="spacingAndGlyphs">Current Reading</text><text x="18.0" y="901.2" font-size="27" text-anchor="start" fill="#f2f2f2" textLength="117.0" lengthAdjust="spacingAndGlyphs">x: 0,4121</text><text x="18.0" y="948.2" font-size="27" text-anchor="start" fill="#f2f2f2" textLength="118.0" lengthAdjust="spacingAndGlyphs">y: 0,5129</text><text x="18.0" y="995.6" font-size="27" text-anchor="start" fill="#f2f2f2" textLength="110.5" lengthAdjust="spacingAndGlyphs">fL: 84,98</text><text x="18.0" y="1042.6" font-size="27" text-anchor="start" fill="#f2f2f2" textLength="183.0" lengthAdjust="spacingAndGlyphs">cd/m²: 291,16</text><text x="537.0" y="823.7" font-size="16" text-anchor="middle" fill="#e4e4e4" textLength="96.0" lengthAdjust="spacingAndGlyphs">RGB Balance</text><rect x="411.00" y="829.00" width="287.00" height="208.50" fill="#252525"/><path d="M411.00 850.00L698.00 850.00" stroke="#8e8e8e" stroke-width="2"/><path d="M411.00 892.00L698.00 892.00" stroke="#8e8e8e" stroke-width="2"/><path d="M411.00 933.00L698.00 933.00" stroke="#8e8e8e" stroke-width="2"/><path d="M411.00 975.00L698.00 975.00" stroke="#8e8e8e" stroke-width="2"/><path d="M411.00 1017.00L698.00 1017.00" stroke="#8e8e8e" stroke-width="2"/><rect x="440.20" y="987.40" width="73.40" height="49.10" fill="url(#b34)" stroke="#0a0a0a" stroke-width="1.4"/><rect x="516.60" y="920.00" width="74.20" height="116.50" fill="url(#b35)" stroke="#0a0a0a" stroke-width="1.4"/><rect x="593.60" y="976.60" width="73.80" height="59.90" fill="url(#b36)" stroke="#0a0a0a" stroke-width="1.4"/><path d="M411.0 1043.5V829.0H698.0V1043.5" fill="none" stroke="#9c9c9c" stroke-width="2"/><path d="M410.00 1037.50L699.00 1037.50" stroke="#a8a8a8" stroke-width="2"/><path d="M404.00 850.00L411.00 850.00" stroke="#c4c4c4" stroke-width="2"/><text x="403.5" y="856.1" font-size="15.8" text-anchor="end" fill="#e4e4e4">104</text><path d="M404.00 892.00L411.00 892.00" stroke="#c4c4c4" stroke-width="2"/><text x="403.5" y="898.1" font-size="15.8" text-anchor="end" fill="#e4e4e4">102</text><path d="M404.00 933.00L411.00 933.00" stroke="#c4c4c4" stroke-width="2"/><text x="403.5" y="939.1" font-size="15.8" text-anchor="end" fill="#e4e4e4">100</text><path d="M404.00 975.00L411.00 975.00" stroke="#c4c4c4" stroke-width="2"/><text x="403.5" y="981.1" font-size="15.8" text-anchor="end" fill="#e4e4e4">98</text><path d="M404.00 1017.00L411.00 1017.00" stroke="#c4c4c4" stroke-width="2"/><text x="403.5" y="1023.1" font-size="15.8" text-anchor="end" fill="#e4e4e4">96</text><text x="555.0" y="1055.5" font-size="15.8" text-anchor="middle" fill="#e4e4e4">100%</text><rect x="721.50" y="800.20" width="839.20" height="235.00" fill="#131313"/><rect x="723.50" y="802.20" width="835.20" height="35.30" fill="url(#th)"/><text x="1008.2" y="827.8" font-size="17.8" text-anchor="middle" fill="#f4f4f4" textLength="46.0" lengthAdjust="spacingAndGlyphs">20%</text><text x="1130.5" y="827.8" font-size="17.8" text-anchor="middle" fill="#f4f4f4" textLength="46.0" lengthAdjust="spacingAndGlyphs">40%</text><text x="1252.9" y="827.8" font-size="17.8" text-anchor="middle" fill="#f4f4f4" textLength="46.0" lengthAdjust="spacingAndGlyphs">60%</text><text x="1375.2" y="827.8" font-size="17.8" text-anchor="middle" fill="#f4f4f4" textLength="46.0" lengthAdjust="spacingAndGlyphs">80%</text><text x="1497.6" y="827.8" font-size="17.8" text-anchor="middle" fill="#f4f4f4" textLength="59.5" lengthAdjust="spacingAndGlyphs">100%</text><rect x="723.50" y="837.50" width="835.20" height="32.75" fill="url(#tr0)"/><text x="744.6" y="861.5" font-size="19.5" text-anchor="start" fill="#f4f4f4" textLength="99.0" lengthAdjust="spacingAndGlyphs" font-weight="bold">x: CIE31</text><text x="954.2" y="861.5" font-size="19.5" text-anchor="start" fill="#f0f0f0" textLength="77.5" lengthAdjust="spacingAndGlyphs">0,3261</text><text x="1076.4" y="861.5" font-size="19.5" text-anchor="start" fill="#f0f0f0" textLength="77.5" lengthAdjust="spacingAndGlyphs">0,3486</text><text x="1198.6" y="861.5" font-size="19.5" text-anchor="start" fill="#f0f0f0" textLength="77.5" lengthAdjust="spacingAndGlyphs">0,3687</text><text x="1320.8" y="861.5" font-size="19.5" text-anchor="start" fill="#f0f0f0" textLength="77.5" lengthAdjust="spacingAndGlyphs">0,3889</text><text x="1443.0" y="861.5" font-size="19.5" text-anchor="start" fill="#f0f0f0" textLength="77.5" lengthAdjust="spacingAndGlyphs">0,4121</text><rect x="723.50" y="870.25" width="835.20" height="32.75" fill="url(#tr1)"/><text x="744.6" y="894.2" font-size="19.5" text-anchor="start" fill="#ececec" textLength="99.0" lengthAdjust="spacingAndGlyphs" font-weight="bold">y: CIE31</text><text x="954.2" y="894.2" font-size="19.5" text-anchor="start" fill="#e8e8e8" textLength="77.5" lengthAdjust="spacingAndGlyphs">0,3644</text><text x="1076.4" y="894.2" font-size="19.5" text-anchor="start" fill="#e8e8e8" textLength="77.5" lengthAdjust="spacingAndGlyphs">0,4036</text><text x="1198.6" y="894.2" font-size="19.5" text-anchor="start" fill="#e8e8e8" textLength="77.5" lengthAdjust="spacingAndGlyphs">0,4385</text><text x="1320.8" y="894.2" font-size="19.5" text-anchor="start" fill="#e8e8e8" textLength="77.5" lengthAdjust="spacingAndGlyphs">0,4734</text><text x="1443.0" y="894.2" font-size="19.5" text-anchor="start" fill="#e8e8e8" textLength="77.5" lengthAdjust="spacingAndGlyphs">0,5129</text><rect x="723.50" y="903.00" width="835.20" height="32.75" fill="url(#tr0)"/><text x="744.6" y="927.0" font-size="19.5" text-anchor="start" fill="#f4f4f4" textLength="15.0" lengthAdjust="spacingAndGlyphs" font-weight="bold">Y</text><text x="954.2" y="927.0" font-size="19.5" text-anchor="start" fill="#f0f0f0" textLength="107.5" lengthAdjust="spacingAndGlyphs">308,8122</text><text x="1076.4" y="927.0" font-size="19.5" text-anchor="start" fill="#f0f0f0" textLength="107.5" lengthAdjust="spacingAndGlyphs">302,5926</text><text x="1198.6" y="927.0" font-size="19.5" text-anchor="start" fill="#f0f0f0" textLength="107.5" lengthAdjust="spacingAndGlyphs">297,6283</text><text x="1320.8" y="927.0" font-size="19.5" text-anchor="start" fill="#f0f0f0" textLength="107.5" lengthAdjust="spacingAndGlyphs">294,0180</text><text x="1443.0" y="927.0" font-size="19.5" text-anchor="start" fill="#f0f0f0" textLength="107.5" lengthAdjust="spacingAndGlyphs">291,1614</text><rect x="723.50" y="935.75" width="835.20" height="32.75" fill="url(#tr1)"/><text x="744.6" y="959.8" font-size="19.5" text-anchor="start" fill="#ececec" textLength="180.0" lengthAdjust="spacingAndGlyphs" font-weight="bold">Target x:CIE31</text><text x="954.2" y="959.8" font-size="19.5" text-anchor="start" fill="#e8e8e8" textLength="77.5" lengthAdjust="spacingAndGlyphs">0,3344</text><text x="1076.4" y="959.8" font-size="19.5" text-anchor="start" fill="#e8e8e8" textLength="77.5" lengthAdjust="spacingAndGlyphs">0,3564</text><text x="1198.6" y="959.8" font-size="19.5" text-anchor="start" fill="#e8e8e8" textLength="77.5" lengthAdjust="spacingAndGlyphs">0,3773</text><text x="1320.8" y="959.8" font-size="19.5" text-anchor="start" fill="#e8e8e8" textLength="77.5" lengthAdjust="spacingAndGlyphs">0,3969</text><text x="1443.0" y="959.8" font-size="19.5" text-anchor="start" fill="#e8e8e8" textLength="77.5" lengthAdjust="spacingAndGlyphs">0,4193</text><rect x="723.50" y="968.50" width="835.20" height="32.75" fill="url(#tr0)"/><text x="744.6" y="992.5" font-size="19.5" text-anchor="start" fill="#f4f4f4" textLength="180.0" lengthAdjust="spacingAndGlyphs" font-weight="bold">Target y:CIE31</text><text x="954.2" y="992.5" font-size="19.5" text-anchor="start" fill="#f0f0f0" textLength="77.5" lengthAdjust="spacingAndGlyphs">0,3648</text><text x="1076.4" y="992.5" font-size="19.5" text-anchor="start" fill="#f0f0f0" textLength="77.5" lengthAdjust="spacingAndGlyphs">0,4013</text><text x="1198.6" y="992.5" font-size="19.5" text-anchor="start" fill="#f0f0f0" textLength="77.5" lengthAdjust="spacingAndGlyphs">0,4358</text><text x="1320.8" y="992.5" font-size="19.5" text-anchor="start" fill="#f0f0f0" textLength="77.5" lengthAdjust="spacingAndGlyphs">0,4682</text><text x="1443.0" y="992.5" font-size="19.5" text-anchor="start" fill="#f0f0f0" textLength="77.5" lengthAdjust="spacingAndGlyphs">0,5053</text><rect x="723.50" y="1001.25" width="835.20" height="32.30" fill="url(#tr1)"/><text x="744.6" y="1025.2" font-size="19.5" text-anchor="start" fill="#ececec" textLength="104.0" lengthAdjust="spacingAndGlyphs" font-weight="bold">Target Y</text><text x="954.2" y="1025.2" font-size="19.5" text-anchor="start" fill="#e8e8e8" textLength="107.5" lengthAdjust="spacingAndGlyphs">307,8970</text><text x="1076.4" y="1025.2" font-size="19.5" text-anchor="start" fill="#e8e8e8" textLength="107.5" lengthAdjust="spacingAndGlyphs">302,4925</text><text x="1198.6" y="1025.2" font-size="19.5" text-anchor="start" fill="#e8e8e8" textLength="107.5" lengthAdjust="spacingAndGlyphs">298,3399</text><text x="1320.8" y="1025.2" font-size="19.5" text-anchor="start" fill="#e8e8e8" textLength="107.5" lengthAdjust="spacingAndGlyphs">295,0810</text><text x="1443.0" y="1025.2" font-size="19.5" text-anchor="start" fill="#e8e8e8" textLength="107.5" lengthAdjust="spacingAndGlyphs">291,9303</text><text x="26" y="16.9" font-size="11.2" fill="#1b1b1b" textLength="329" lengthAdjust="spacingAndGlyphs" xml:space="preserve">Calman 2025 Calman Ultimate for Business 118 Days Remaining  - Untitled</text><text x="42.6" y="44" font-size="20" fill="#fff" stroke="#fff" stroke-width="0.45" textLength="71.2" lengthAdjust="spacingAndGlyphs">calman</text><text x="30.3" y="72.2" font-size="9.6" fill="#e4e4e4" textLength="38.8" lengthAdjust="spacingAndGlyphs">History 1</text></svg></body></html>
